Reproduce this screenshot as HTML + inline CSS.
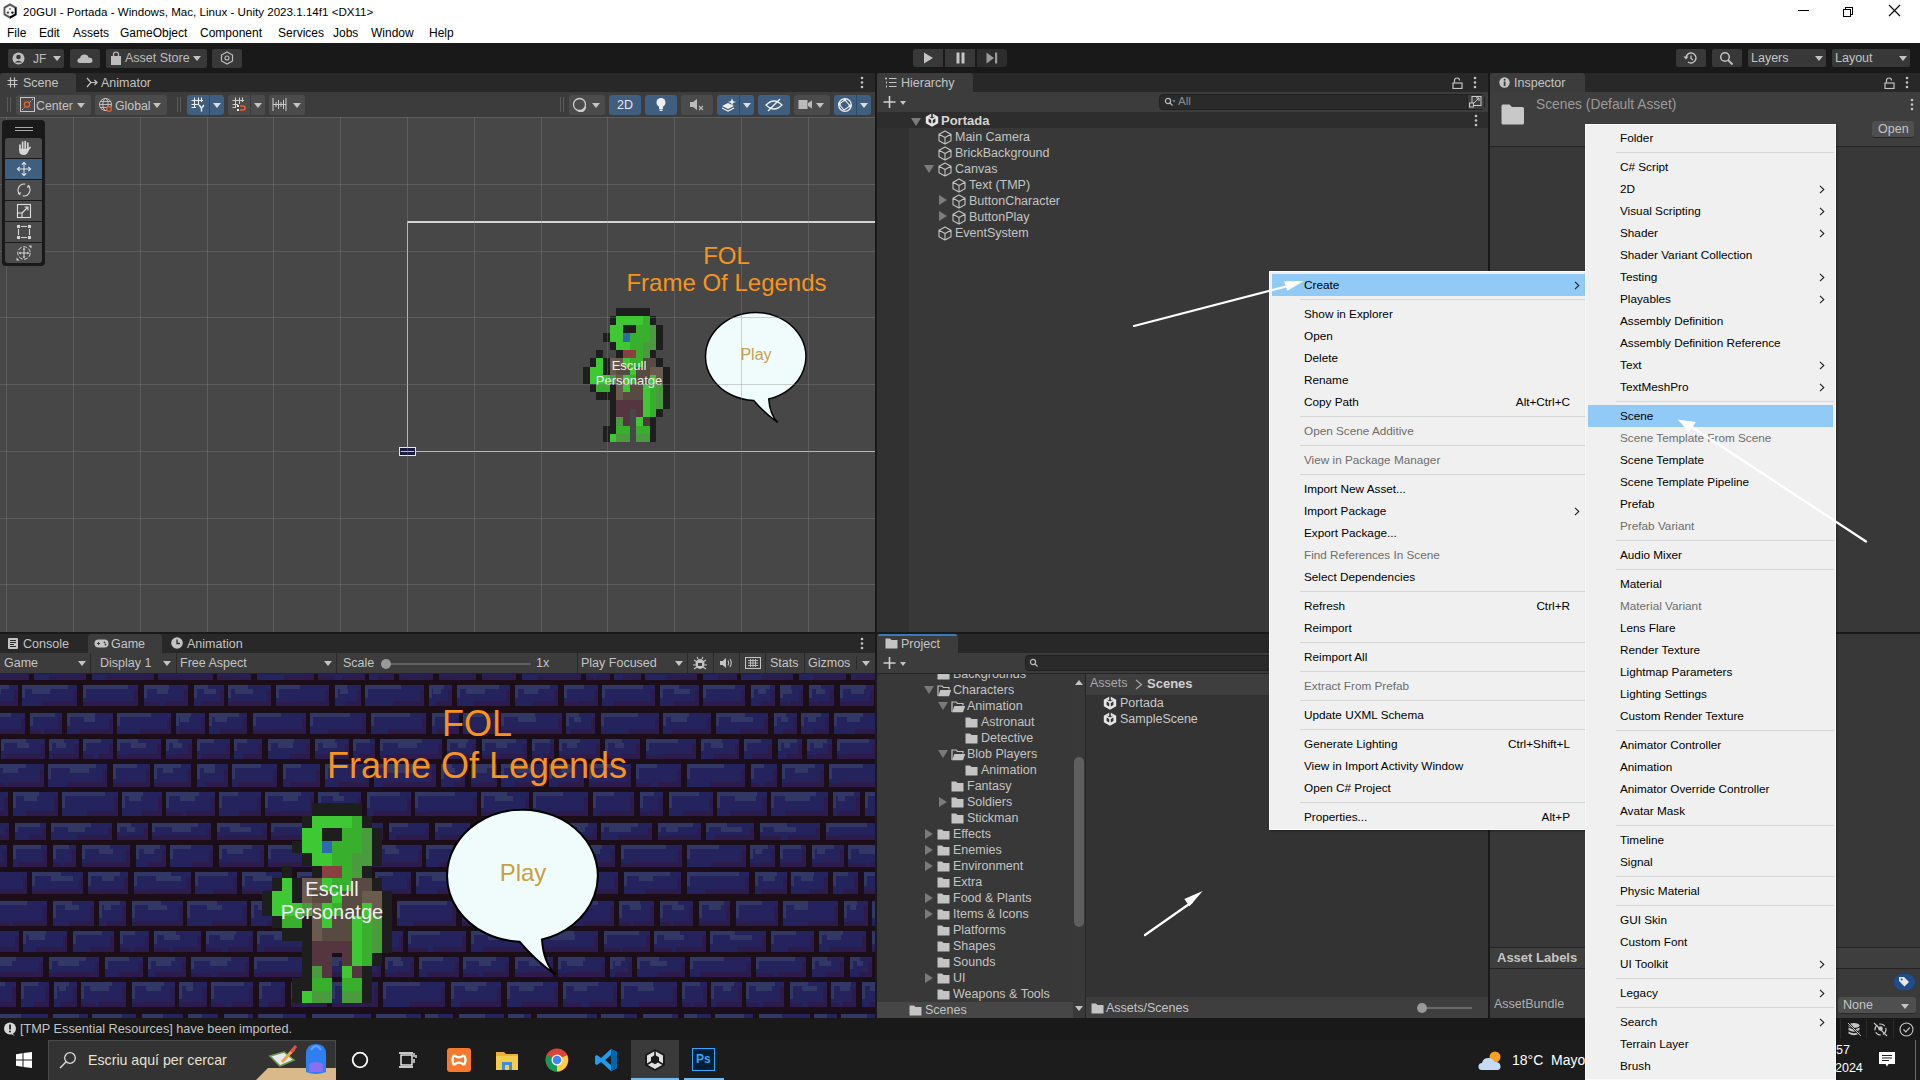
<!DOCTYPE html><html><head><meta charset="utf-8"><title>Unity</title></head><body><style>
*{box-sizing:border-box}
html,body{margin:0;padding:0}
body{width:1920px;height:1080px;overflow:hidden;position:relative;background:#191919;font-family:"Liberation Sans",sans-serif;font-size:12px;color:#c4c4c4}
.a{position:absolute}
.t{position:absolute;white-space:nowrap;line-height:1}
.btn{position:absolute;background:#383838;border-radius:2px}
.tb{position:absolute;background:#585858;border-radius:3px}
.tab{position:absolute;background:#3c3c3c;border-radius:3px 3px 0 0}
.dd{position:absolute;width:0;height:0;border-left:4px solid transparent;border-right:4px solid transparent;border-top:5px solid #c4c4c4}
.m{position:absolute;white-space:nowrap;line-height:1;color:#000;font-size:11.75px}
.mg{color:#6d6d6d}
.sep{position:absolute;height:1px;background:#d7d7d7}
.arr{position:absolute;width:5px;height:5px;border-right:1.3px solid #000;border-top:1.3px solid #000;transform:rotate(45deg)}
</style>
<!-- title bar -->
<div class="a" style="left:0;top:0;width:1920px;height:43px;background:#fff"></div>
<svg class="a" style="left:3px;top:3px" width="14" height="16" viewBox="0 0 14 16"><path d="M7 0.3L13.5 4V12L7 15.7L0.5 12V4Z" fill="#5a5a5a"/><path d="M13.5 4V12L7 15.7V13.3L11.6 10.8V5.2Z" fill="#050505"/><path d="M7 2.8L11.6 5.3V10.7L7 13.2L2.4 10.7V5.3Z" fill="#fafafa"/><circle cx="7" cy="5.8" r="1.1" fill="#8a8a8a"/><circle cx="4.9" cy="9.6" r="1.2" fill="#444"/><circle cx="9.4" cy="9.6" r="1.2" fill="#111"/></svg>
<div class="t" style="left:23px;top:6px;font-size:11.6px;color:#000">20GUI - Portada - Windows, Mac, Linux - Unity 2023.1.14f1 &lt;DX11&gt;</div>
<div class="a" style="left:1798px;top:10px;width:11px;height:1px;background:#000"></div>
<div class="a" style="left:1845px;top:7px;width:8px;height:8px;border:1px solid #000;background:#fff"></div>
<div class="a" style="left:1843px;top:9px;width:8px;height:8px;border:1px solid #000;background:#fff"></div>
<svg class="a" style="left:1888px;top:4px" width="13" height="13"><path d="M1 1L12 12M12 1L1 12" stroke="#000" stroke-width="1.1"/></svg>
<!-- menu bar -->
<div class="t" style="left:7px;top:27px;font-size:12px;color:#000">File</div>
<div class="t" style="left:39px;top:27px;font-size:12px;color:#000">Edit</div>
<div class="t" style="left:73px;top:27px;font-size:12px;color:#000">Assets</div>
<div class="t" style="left:120px;top:27px;font-size:12px;color:#000">GameObject</div>
<div class="t" style="left:200px;top:27px;font-size:12px;color:#000">Component</div>
<div class="t" style="left:278px;top:27px;font-size:12px;color:#000">Services</div>
<div class="t" style="left:333px;top:27px;font-size:12px;color:#000">Jobs</div>
<div class="t" style="left:371px;top:27px;font-size:12px;color:#000">Window</div>
<div class="t" style="left:429px;top:27px;font-size:12px;color:#000">Help</div>
<!-- main toolbar -->
<div class="a" style="left:0;top:43px;width:1920px;height:30px;background:#191919"></div>
<div class="btn" style="left:8px;top:49px;width:56px;height:19px"></div>
<svg class="a" style="left:12px;top:52px" width="13" height="13"><circle cx="6.5" cy="6.5" r="6" fill="#bdbdbd"/><circle cx="6.5" cy="5" r="2.3" fill="#383838"/><path d="M2.8 10.5 Q6.5 6.8 10.2 10.5" fill="#383838"/></svg>
<div class="t" style="left:33px;top:53px;color:#bdbdbd;font-size:12px">JF</div>
<div class="dd" style="left:53px;top:56px"></div>
<div class="btn" style="left:70px;top:49px;width:30px;height:19px"></div>
<svg class="a" style="left:77px;top:52px" width="16" height="12"><path d="M3 11 Q0 11 0.5 8 Q1 6 3 6.3 Q3.5 2.5 7.5 2.5 Q11 2.5 11.5 5.5 Q15.5 5.5 15.5 8.5 Q15.5 11 12.5 11Z" fill="#bdbdbd"/></svg>
<div class="btn" style="left:106px;top:49px;width:101px;height:19px"></div>
<svg class="a" style="left:110px;top:51px" width="12" height="15"><path d="M3.5 5V3.5Q3.5 1 6 1Q8.5 1 8.5 3.5V5" fill="none" stroke="#bdbdbd" stroke-width="1.2"/><rect x="1" y="5" width="10" height="9" fill="#bdbdbd"/></svg>
<div class="t" style="left:125px;top:52px;color:#bdbdbd;font-size:12.5px">Asset Store</div>
<div class="dd" style="left:193px;top:56px"></div>
<div class="btn" style="left:212px;top:49px;width:30px;height:19px"></div>
<svg class="a" style="left:220px;top:51px" width="14" height="14"><polygon points="7,1 12.5,4 12.5,10 7,13 1.5,10 1.5,4" fill="none" stroke="#bdbdbd" stroke-width="1.2"/><circle cx="7" cy="7" r="2" fill="none" stroke="#bdbdbd" stroke-width="1.1"/></svg>
<!-- play controls -->
<div class="btn" style="left:913px;top:49px;width:30px;height:18px;border-radius:3px 0 0 3px"></div>
<div class="btn" style="left:945px;top:49px;width:30px;height:18px;border-radius:0"></div>
<div class="btn" style="left:977px;top:49px;width:30px;height:18px;border-radius:0 3px 3px 0;background:#2c2c2c"></div>
<svg class="a" style="left:923px;top:52px" width="11" height="12"><path d="M1 0.5L10 6L1 11.5Z" fill="#c4c4c4"/></svg>
<svg class="a" style="left:956px;top:52px" width="10" height="12"><rect x="0.5" y="0.5" width="3" height="11" fill="#c4c4c4"/><rect x="5.5" y="0.5" width="3" height="11" fill="#c4c4c4"/></svg>
<svg class="a" style="left:986px;top:52px" width="12" height="12"><path d="M0.5 0.5L8 6L0.5 11.5Z" fill="#9a9a9a"/><rect x="9" y="0.5" width="2.2" height="11" fill="#9a9a9a"/></svg>
<!-- right toolbar -->
<div class="btn" style="left:1676px;top:49px;width:30px;height:18px"></div>
<svg class="a" style="left:1683px;top:51px" width="15" height="14"><path d="M3 7 A5 5 0 1 1 5 11" fill="none" stroke="#c4c4c4" stroke-width="1.4"/><path d="M0.5 5.5 L3 8.5 L5.5 5.5Z" fill="#c4c4c4"/><path d="M8 4.5V7.5L10 9" fill="none" stroke="#c4c4c4" stroke-width="1.3"/></svg>
<div class="btn" style="left:1712px;top:49px;width:30px;height:18px"></div>
<svg class="a" style="left:1719px;top:51px" width="15" height="15"><circle cx="6" cy="6" r="4.3" fill="none" stroke="#c4c4c4" stroke-width="1.5"/><path d="M9.2 9.2L13.5 13.5" stroke="#c4c4c4" stroke-width="1.8"/></svg>
<div class="btn" style="left:1748px;top:49px;width:78px;height:18px"></div>
<div class="t" style="left:1751px;top:52px;color:#c4c4c4;font-size:12.5px">Layers</div>
<div class="dd" style="left:1815px;top:56px"></div>
<div class="btn" style="left:1832px;top:49px;width:78px;height:18px"></div>
<div class="t" style="left:1835px;top:52px;color:#c4c4c4;font-size:12.5px">Layout</div>
<div class="dd" style="left:1899px;top:56px"></div>
<!-- SCENE PANEL -->
<div class="a" style="left:0;top:73px;width:875px;height:19px;background:#282828"></div>
<div class="tab" style="left:0;top:73px;width:76px;height:19px"></div>
<svg class="a" style="left:7px;top:77px" width="11" height="11"><path d="M3.5 0.5V10.5M7.5 0.5V10.5M0.5 3.5H10.5M0.5 7.5H10.5" stroke="#c4c4c4" stroke-width="1.2"/></svg>
<div class="t" style="left:23px;top:77px;color:#c4c4c4;font-size:12.5px">Scene</div>
<svg class="a" style="left:86px;top:77px" width="12" height="11"><path d="M1 1L5 5.5L1 10M5 5.5H11M8.5 3L11 5.5L8.5 8" fill="none" stroke="#c4c4c4" stroke-width="1.2"/></svg>
<div class="t" style="left:101px;top:77px;color:#c4c4c4;font-size:12.5px">Animator</div>
<svg class="a" style="left:860px;top:76px" width="4" height="13"><circle cx="2" cy="2" r="1.3" fill="#c4c4c4"/><circle cx="2" cy="6.5" r="1.3" fill="#c4c4c4"/><circle cx="2" cy="11" r="1.3" fill="#c4c4c4"/></svg>
<!-- scene toolbar -->
<div class="a" style="left:0;top:92px;width:875px;height:25px;background:#3c3c3c"></div>
<div class="a" style="left:7px;top:97px;width:1px;height:15px;background:#5a5a5a"></div><div class="a" style="left:10px;top:97px;width:1px;height:15px;background:#5a5a5a"></div>
<div class="tb" style="left:16px;top:95px;width:75px;height:20px;background:#4b4b4b"></div>
<svg class="a" style="left:20px;top:97px" width="15" height="15"><rect x="0.5" y="0.5" width="14" height="14" fill="none" stroke="#c4c4c4" stroke-width="1"/><path d="M2 13L13 2" stroke="#c4c4c4" stroke-dasharray="2 1.5"/><circle cx="7" cy="7.5" r="2.6" fill="#4b4b4b" stroke="#f06030" stroke-width="1.3"/></svg>
<div class="t" style="left:36px;top:100px;color:#c4c4c4;font-size:12.3px">Center</div>
<div class="dd" style="left:77px;top:103px"></div>
<div class="tb" style="left:95px;top:95px;width:72px;height:20px;background:#4b4b4b"></div>
<svg class="a" style="left:98px;top:97px" width="16" height="16"><circle cx="7.5" cy="7.5" r="6" fill="none" stroke="#c4c4c4" stroke-width="1"/><ellipse cx="7.5" cy="7.5" rx="2.6" ry="6" fill="none" stroke="#c4c4c4" stroke-width="1"/><path d="M1.5 7.5H13.5M2.5 4.5H12.5M2.5 10.5H12.5" stroke="#c4c4c4" stroke-width="0.9"/><circle cx="11" cy="12" r="2.3" fill="#4b4b4b" stroke="#f06030" stroke-width="1.2"/></svg>
<div class="t" style="left:115px;top:100px;color:#c4c4c4;font-size:12.3px">Global</div>
<div class="dd" style="left:153px;top:103px"></div>
<div class="a" style="left:177px;top:97px;width:1px;height:15px;background:#5a5a5a"></div><div class="a" style="left:180px;top:97px;width:1px;height:15px;background:#5a5a5a"></div>
<div class="tb" style="left:187px;top:95px;width:37px;height:20px;background:#3f5e80"></div>
<div class="a" style="left:209px;top:95px;width:1px;height:20px;background:#2f4a68"></div>
<svg class="a" style="left:191px;top:97px" width="15" height="15"><path d="M3.5 0.5V11M7.5 0.5V8M10.5 0.5V5M0.5 3.5H12M0.5 7.5H8M0.5 10.5H5" stroke="#eee" stroke-width="1.1"/><path d="M8 8L10.5 11L13 8M10.5 11V14.5" fill="none" stroke="#eee" stroke-width="1.5"/></svg>
<div class="dd" style="left:213px;top:103px;border-top-color:#ddd"></div>
<div class="tb" style="left:228px;top:95px;width:37px;height:20px;background:#4b4b4b"></div>
<div class="a" style="left:250px;top:95px;width:1px;height:20px;background:#3a3a3a"></div>
<svg class="a" style="left:232px;top:97px" width="15" height="15"><path d="M3.5 0.5V11M7.5 0.5V7M10.5 0.5V5M0.5 3.5H12M0.5 7.5H6M0.5 10.5H4" stroke="#ccc" stroke-width="1.1"/><rect x="5" y="8" width="2" height="2" fill="#eee"/><rect x="5" y="12" width="2" height="2" fill="#eee"/><path d="M8 9H11Q13 9 13 11Q13 13 11 13H8" fill="none" stroke="#f06030" stroke-width="1.6"/></svg>
<div class="dd" style="left:254px;top:103px"></div>
<div class="tb" style="left:269px;top:95px;width:36px;height:20px;background:#4b4b4b"></div>
<svg class="a" style="left:272px;top:97px" width="15" height="15"><path d="M1 1V14M14 1V14M1 7.5H14M4 5V10M6.5 3V12M9 5V10M11.5 3V12" stroke="#ccc" stroke-width="1"/></svg>
<div class="dd" style="left:293px;top:103px"></div>
<div class="a" style="left:560px;top:97px;width:1px;height:15px;background:#5a5a5a"></div><div class="a" style="left:563px;top:97px;width:1px;height:15px;background:#5a5a5a"></div>
<div class="tb" style="left:569px;top:95px;width:36px;height:20px;background:#4b4b4b"></div>
<svg class="a" style="left:572px;top:97px" width="15" height="15"><circle cx="7.5" cy="7.5" r="6" fill="none" stroke="#ccc" stroke-width="1.3"/><path d="M13.5 7.5A6 6 0 0 1 4 12.5A5 5 0 0 0 13.5 7.5Z" fill="#ccc"/></svg>
<div class="dd" style="left:592px;top:103px"></div>
<div class="tb" style="left:609px;top:95px;width:32px;height:20px;background:#3f5e80"></div>
<div class="t" style="left:617px;top:99px;color:#e8e8e8;font-size:12.5px">2D</div>
<div class="tb" style="left:645px;top:95px;width:32px;height:20px;background:#3f5e80"></div>
<svg class="a" style="left:655px;top:97px" width="12" height="16"><circle cx="6" cy="5.5" r="4.5" fill="#eee"/><rect x="4" y="9" width="4" height="3" fill="#eee"/><rect x="4.5" y="12.5" width="3" height="1.5" fill="#eee"/></svg>
<div class="tb" style="left:681px;top:95px;width:32px;height:20px;background:#4b4b4b"></div>
<svg class="a" style="left:689px;top:98px" width="16" height="14"><path d="M1 4H4L8 1V12L4 9H1Z" fill="#bbb"/><path d="M10 8L14 12M14 8L10 12" stroke="#bbb" stroke-width="1.1"/></svg>
<div class="tb" style="left:717px;top:95px;width:37px;height:20px;background:#3f5e80"></div>
<div class="a" style="left:739px;top:95px;width:1px;height:20px;background:#2f4a68"></div>
<svg class="a" style="left:721px;top:97px" width="16" height="15"><path d="M1 9L7 6L13 9L7 12Z" fill="#eee"/><path d="M1 11L7 14L13 11" fill="none" stroke="#eee" stroke-width="1.2"/><path d="M11 1L12 4L15 5L12 6L11 9L10 6L7 5L10 4Z" fill="#eee"/></svg>
<div class="dd" style="left:743px;top:103px;border-top-color:#ddd"></div>
<div class="tb" style="left:758px;top:95px;width:32px;height:20px;background:#3f5e80"></div>
<svg class="a" style="left:765px;top:97px" width="18" height="16"><path d="M1 8Q9 0 17 8Q9 16 1 8Z" fill="none" stroke="#eee" stroke-width="1.3"/><path d="M3 14L15 2" stroke="#eee" stroke-width="1.4"/></svg>
<div class="tb" style="left:794px;top:95px;width:36px;height:20px;background:#4b4b4b"></div>
<svg class="a" style="left:798px;top:99px" width="15" height="11"><rect x="0.5" y="1" width="9" height="9" fill="#bbb"/><path d="M10 4L14 1.5V9.5L10 7Z" fill="#bbb"/></svg>
<div class="dd" style="left:816px;top:103px"></div>
<div class="tb" style="left:834px;top:95px;width:37px;height:20px;background:#3f5e80"></div>
<div class="a" style="left:856px;top:95px;width:1px;height:20px;background:#2f4a68"></div>
<svg class="a" style="left:837px;top:97px" width="16" height="16"><circle cx="8" cy="8" r="6.3" fill="none" stroke="#eee" stroke-width="1.3"/><path d="M2 7L8 3L13 9L7 13Z" fill="none" stroke="#eee" stroke-width="1.1"/><circle cx="8" cy="3" r="1.4" fill="#eee"/><circle cx="2.5" cy="7" r="1.4" fill="#eee"/><circle cx="13" cy="9" r="1.4" fill="#eee"/></svg>
<div class="dd" style="left:860px;top:103px;border-top-color:#ddd"></div>
<!-- scene view -->
<svg class="a" style="left:0;top:117px" width="875" height="515" shape-rendering="crispEdges">
<rect width="875" height="515" fill="#474747"/>

<path d="M407.5 334.5V105H875M407.5 334.5H875" fill="none" stroke="#d4d4d4" stroke-width="1.6"/>
</svg>
<div class="a" style="left:399px;top:447px;width:17px;height:9px;border:1px solid #e8e8e8;background:#1a1a40"></div>
<div class="a" style="left:401px;top:451px;width:13px;height:1px;background:#e8e8e8"></div>
<!-- scene contents -->
<div class="t" style="left:626px;top:244px;width:201px;text-align:center;color:#f7941d;font-size:24px">FOL</div>
<div class="t" style="left:596px;top:271px;width:261px;text-align:center;color:#f7941d;font-size:24px">Frame Of Legends</div>
<svg class="a" style="left:583px;top:307.5px" width="86.58" height="134.40" viewBox="0 0 13 16" preserveAspectRatio="none" shape-rendering="crispEdges"><rect x="5" y="0" width="5" height="1" fill="#1e1e1e"/><rect x="4" y="1" width="1" height="1" fill="#1e1e1e"/><rect x="5" y="1" width="4" height="1" fill="#3ec834"/><rect x="9" y="1" width="1" height="1" fill="#38b02e"/><rect x="10" y="1" width="1" height="1" fill="#1e1e1e"/><rect x="4" y="2" width="2" height="1" fill="#3ec834"/><rect x="6" y="2" width="2" height="1" fill="#1e1e1e"/><rect x="8" y="2" width="2" height="1" fill="#38b02e"/><rect x="10" y="2" width="1" height="1" fill="#4a9a3e"/><rect x="11" y="2" width="1" height="1" fill="#1e1e1e"/><rect x="3" y="3" width="1" height="1" fill="#1e1e1e"/><rect x="4" y="3" width="2" height="1" fill="#3ec834"/><rect x="6" y="3" width="1" height="1" fill="#2a6ab0"/><rect x="7" y="3" width="3" height="1" fill="#38b02e"/><rect x="10" y="3" width="1" height="1" fill="#4a9a3e"/><rect x="11" y="3" width="1" height="1" fill="#1e1e1e"/><rect x="4" y="4" width="1" height="1" fill="#1e1e1e"/><rect x="5" y="4" width="2" height="1" fill="#3ec834"/><rect x="7" y="4" width="2" height="1" fill="#38b02e"/><rect x="9" y="4" width="2" height="1" fill="#4a9a3e"/><rect x="11" y="4" width="1" height="1" fill="#1e1e1e"/><rect x="2" y="5" width="1" height="1" fill="#1e1e1e"/><rect x="5" y="5" width="1" height="1" fill="#1e1e1e"/><rect x="6" y="5" width="2" height="1" fill="#8a4040"/><rect x="8" y="5" width="1" height="1" fill="#38b02e"/><rect x="9" y="5" width="1" height="1" fill="#4a9a3e"/><rect x="10" y="5" width="1" height="1" fill="#1e1e1e"/><rect x="1" y="6" width="1" height="1" fill="#1e1e1e"/><rect x="2" y="6" width="1" height="1" fill="#3ec834"/><rect x="3" y="6" width="1" height="1" fill="#1e1e1e"/><rect x="4" y="6" width="2" height="1" fill="#6b5a4e"/><rect x="6" y="6" width="1" height="1" fill="#3ec834"/><rect x="7" y="6" width="2" height="1" fill="#38b02e"/><rect x="9" y="6" width="2" height="1" fill="#574a40"/><rect x="11" y="6" width="1" height="1" fill="#1e1e1e"/><rect x="0" y="7" width="1" height="1" fill="#1e1e1e"/><rect x="1" y="7" width="2" height="1" fill="#3ec834"/><rect x="3" y="7" width="1" height="1" fill="#1e1e1e"/><rect x="4" y="7" width="1" height="1" fill="#6b5a4e"/><rect x="5" y="7" width="2" height="1" fill="#574a40"/><rect x="7" y="7" width="1" height="1" fill="#3ec834"/><rect x="8" y="7" width="2" height="1" fill="#574a40"/><rect x="10" y="7" width="2" height="1" fill="#6b5a4e"/><rect x="12" y="7" width="1" height="1" fill="#1e1e1e"/><rect x="0" y="8" width="1" height="1" fill="#1e1e1e"/><rect x="1" y="8" width="3" height="1" fill="#3ec834"/><rect x="4" y="8" width="1" height="1" fill="#4a9a3e"/><rect x="5" y="8" width="1" height="1" fill="#6b5a4e"/><rect x="6" y="8" width="1" height="1" fill="#3ec834"/><rect x="7" y="8" width="1" height="1" fill="#38b02e"/><rect x="8" y="8" width="2" height="1" fill="#574a40"/><rect x="10" y="8" width="1" height="1" fill="#3ec834"/><rect x="11" y="8" width="1" height="1" fill="#6b5a4e"/><rect x="12" y="8" width="1" height="1" fill="#1e1e1e"/><rect x="1" y="9" width="1" height="1" fill="#1e1e1e"/><rect x="2" y="9" width="2" height="1" fill="#38b02e"/><rect x="4" y="9" width="1" height="1" fill="#1e1e1e"/><rect x="5" y="9" width="1" height="1" fill="#6b5a4e"/><rect x="6" y="9" width="1" height="1" fill="#3ec834"/><rect x="7" y="9" width="2" height="1" fill="#574a40"/><rect x="9" y="9" width="1" height="1" fill="#3ec834"/><rect x="10" y="9" width="1" height="1" fill="#38b02e"/><rect x="11" y="9" width="1" height="1" fill="#4a9a3e"/><rect x="12" y="9" width="1" height="1" fill="#1e1e1e"/><rect x="2" y="10" width="3" height="1" fill="#1e1e1e"/><rect x="5" y="10" width="1" height="1" fill="#6b5a4e"/><rect x="6" y="10" width="3" height="1" fill="#574a40"/><rect x="9" y="10" width="1" height="1" fill="#3ec834"/><rect x="10" y="10" width="1" height="1" fill="#38b02e"/><rect x="11" y="10" width="1" height="1" fill="#4a9a3e"/><rect x="12" y="10" width="1" height="1" fill="#1e1e1e"/><rect x="4" y="11" width="1" height="1" fill="#1e1e1e"/><rect x="5" y="11" width="4" height="1" fill="#553540"/><rect x="9" y="11" width="1" height="1" fill="#3ec834"/><rect x="10" y="11" width="1" height="1" fill="#38b02e"/><rect x="11" y="11" width="1" height="1" fill="#4a9a3e"/><rect x="12" y="11" width="1" height="1" fill="#1e1e1e"/><rect x="4" y="12" width="1" height="1" fill="#1e1e1e"/><rect x="5" y="12" width="2" height="1" fill="#553540"/><rect x="8" y="12" width="1" height="1" fill="#553540"/><rect x="9" y="12" width="1" height="1" fill="#3ec834"/><rect x="10" y="12" width="1" height="1" fill="#38b02e"/><rect x="11" y="12" width="1" height="1" fill="#1e1e1e"/><rect x="4" y="13" width="1" height="1" fill="#1e1e1e"/><rect x="5" y="13" width="1" height="1" fill="#4a9a3e"/><rect x="6" y="13" width="1" height="1" fill="#553540"/><rect x="8" y="13" width="1" height="1" fill="#3ec834"/><rect x="9" y="13" width="1" height="1" fill="#553540"/><rect x="10" y="13" width="1" height="1" fill="#1e1e1e"/><rect x="3" y="14" width="2" height="1" fill="#1e1e1e"/><rect x="5" y="14" width="2" height="1" fill="#38b02e"/><rect x="8" y="14" width="2" height="1" fill="#38b02e"/><rect x="10" y="14" width="1" height="1" fill="#1e1e1e"/><rect x="3" y="15" width="1" height="1" fill="#1e1e1e"/><rect x="4" y="15" width="1" height="1" fill="#3ec834"/><rect x="5" y="15" width="2" height="1" fill="#4a9a3e"/><rect x="8" y="15" width="2" height="1" fill="#4a9a3e"/><rect x="10" y="15" width="1" height="1" fill="#1e1e1e"/></svg>
<div class="t" style="left:579px;top:358px;width:100px;text-align:center;color:#f0f0f0;font-size:13px;line-height:15px;white-space:normal">Escull<br>Personatge</div>
<svg class="a" style="left:0;top:117px" width="875" height="515"><path d="M753.75 283.47 Q764.75 296.50 777.75 305.50 Q769.75 297.50 768.75 282.00 A50.25 44.00 0 1 0 753.75 283.47Z" fill="#f0fcfc" stroke="#000" stroke-width="1.5"/></svg>
<div class="t" style="left:706px;top:347px;width:100px;text-align:center;color:#c8a050;font-size:16px">Play</div>
<svg class="a" style="left:0;top:117px;pointer-events:none" width="875" height="515" shape-rendering="crispEdges"><g fill="rgb(129,129,129)" fill-opacity="0.36"><rect x="6" y="0" width="1" height="515"/><rect x="73" y="0" width="1" height="515"/><rect x="140" y="0" width="1" height="515"/><rect x="207" y="0" width="1" height="515"/><rect x="273" y="0" width="1" height="515"/><rect x="340" y="0" width="1" height="515"/><rect x="407" y="0" width="1" height="515"/><rect x="474" y="0" width="1" height="515"/><rect x="541" y="0" width="1" height="515"/><rect x="607" y="0" width="1" height="515"/><rect x="674" y="0" width="1" height="515"/><rect x="741" y="0" width="1" height="515"/><rect x="808" y="0" width="1" height="515"/><rect x="0" y="0" width="875" height="1"/><rect x="0" y="67" width="875" height="1"/><rect x="0" y="134" width="875" height="1"/><rect x="0" y="200" width="875" height="1"/><rect x="0" y="267" width="875" height="1"/><rect x="0" y="334" width="875" height="1"/><rect x="0" y="401" width="875" height="1"/><rect x="0" y="467" width="875" height="1"/></g></svg>
<!-- overlay tool palette -->
<div class="a" style="left:2px;top:120px;width:43px;height:146px;background:#191919;border-radius:4px"></div>
<div class="a" style="left:15px;top:127px;width:18px;height:1px;background:#aaa"></div>
<div class="a" style="left:15px;top:130px;width:18px;height:1px;background:#aaa"></div>
<div class="tb" style="left:5px;top:138px;width:37px;height:20px;background:#4b4b4b;border-radius:3px 3px 0 0"></div>
<div class="tb" style="left:5px;top:159px;width:37px;height:20px;background:#3f5e80;border-radius:0"></div>
<div class="tb" style="left:5px;top:180px;width:37px;height:20px;background:#4b4b4b;border-radius:0"></div>
<div class="tb" style="left:5px;top:201px;width:37px;height:20px;background:#4b4b4b;border-radius:0"></div>
<div class="tb" style="left:5px;top:222px;width:37px;height:20px;background:#4b4b4b;border-radius:0"></div>
<div class="tb" style="left:5px;top:243px;width:37px;height:20px;background:#4b4b4b;border-radius:0 0 3px 3px"></div>
<svg class="a" style="left:16px;top:140px" width="16" height="16"><g stroke="#d6d6d6" stroke-width="1.7" stroke-linecap="round"><path d="M4 9.5V5M6.6 8V2.2M9.2 8V1.6M11.8 8.5V3.2"/><path d="M12 10L14 7.5" /></g><path d="M3.2 8.5H12.6V11Q11 15 8 15Q3.2 15 3.2 11Z" fill="#d6d6d6"/></svg>
<svg class="a" style="left:16px;top:161px" width="16" height="16"><path d="M8 1.5V14.5M1.5 8H14.5" stroke="#e6e6e6" stroke-width="1"/><path d="M5.8 3.7L8 1.5L10.2 3.7M5.8 12.3L8 14.5L10.2 12.3M3.7 5.8L1.5 8L3.7 10.2M12.3 5.8L14.5 8L12.3 10.2" fill="none" stroke="#e6e6e6" stroke-width="1.2"/></svg>
<svg class="a" style="left:16px;top:182px" width="16" height="16"><path d="M9.2 2.1A6 6 0 0 0 3.9 12.3M6.8 13.9A6 6 0 0 0 12.1 3.7" fill="none" stroke="#d6d6d6" stroke-width="1.1"/><path d="M1.9 11.6L3.9 12.3L4.3 10.1M14.1 4.4L12.1 3.7L11.7 5.9" fill="none" stroke="#d6d6d6" stroke-width="1.1"/></svg>
<svg class="a" style="left:16px;top:203px" width="16" height="16"><rect x="1.5" y="1.5" width="13" height="13" fill="none" stroke="#ddd" stroke-width="1.1"/><rect x="1.5" y="10" width="4.5" height="4.5" fill="#4b4b4b" stroke="#ddd" stroke-width="1.1"/><path d="M6 10L12 4M8.5 4H12V7.5" fill="none" stroke="#ddd" stroke-width="1.1"/></svg>
<svg class="a" style="left:16px;top:224px" width="16" height="16"><path d="M2.5 5V11M13.5 5V11M5 2.5H11M5 13.5H11" stroke="#d6d6d6" stroke-width="1.1"/><rect x="1" y="1" width="3" height="3" fill="#d6d6d6"/><rect x="12" y="1" width="3" height="3" fill="#d6d6d6"/><rect x="1" y="12" width="3" height="3" fill="#d6d6d6"/><rect x="12" y="12" width="3" height="3" fill="#d6d6d6"/></svg>
<svg class="a" style="left:16px;top:245px" width="16" height="16"><circle cx="8" cy="8" r="6.2" fill="none" stroke="#d6d6d6" stroke-width="1" stroke-dasharray="4 1.5"/><path d="M8 3.5V12.5M3.5 8H12.5" stroke="#d6d6d6" stroke-width="1"/><path d="M8 2.8L6.6 4.6H9.4ZM8 13.2L6.6 11.4H9.4ZM2.8 8L4.6 6.6V9.4ZM13.2 8L11.4 6.6V9.4Z" fill="#d6d6d6"/><path d="M0.5 15.5L0.5 12.5L3.5 15.5Z M15.5 0.5L12.5 0.5L15.5 3.5Z" fill="#d6d6d6"/></svg>
<!-- HIERARCHY -->
<div class="a" style="left:875px;top:73px;width:2px;height:561px;background:#191919"></div>
<div class="a" style="left:877px;top:73px;width:611px;height:19px;background:#282828"></div>
<div class="tab" style="left:877px;top:73px;width:96px;height:19px"></div>
<svg class="a" style="left:885px;top:77px" width="12" height="11"><path d="M4 1.5H11.5M4 5.5H11.5M4 9.5H11.5" stroke="#c4c4c4" stroke-width="1.2"/><path d="M1 0.5V2.5M0 1.5H2M1.5 4.5V6.5M1.5 8.5V10.5" stroke="#c4c4c4" stroke-width="1"/></svg>
<div class="t" style="left:901px;top:77px;color:#c4c4c4;font-size:12.5px">Hierarchy</div>
<svg class="a" style="left:1452px;top:77px" width="11" height="12"><path d="M2.5 5.5V3.5Q2.5 1 5 1Q7.5 1 7.5 3.5" fill="none" stroke="#c4c4c4" stroke-width="1.2"/><rect x="1" y="6" width="9" height="5.5" fill="none" stroke="#c4c4c4" stroke-width="1.2"/></svg>
<svg class="a" style="left:1473px;top:76px" width="4" height="13"><circle cx="2" cy="2" r="1.3" fill="#c4c4c4"/><circle cx="2" cy="6.5" r="1.3" fill="#c4c4c4"/><circle cx="2" cy="11" r="1.3" fill="#c4c4c4"/></svg>
<div class="a" style="left:877px;top:92px;width:611px;height:20px;background:#3c3c3c"></div>
<svg class="a" style="left:883px;top:95px" width="14" height="14"><path d="M6.5 1V13M0.5 7H12.5" stroke="#d0d0d0" stroke-width="1.6"/></svg>
<div class="dd" style="left:900px;top:101px;border-left-width:3.5px;border-right-width:3.5px;border-top-width:4px"></div>
<div class="a" style="left:1159px;top:94px;width:326px;height:16px;background:#2a2a2a;border-radius:4px;border:1px solid #212121"></div>
<svg class="a" style="left:1164px;top:97px" width="12" height="10"><circle cx="4" cy="4" r="2.6" fill="none" stroke="#bbb" stroke-width="1.2"/><path d="M6 6L8.5 8.5" stroke="#bbb" stroke-width="1.3"/><path d="M8.5 3.5H11.5L10 5Z" fill="#bbb"/></svg>
<div class="t" style="left:1178px;top:96px;color:#8a8a8a;font-size:11.5px">All</div>
<div class="a" style="left:1467px;top:95px;width:17px;height:14px;background:#3c3c3c;border-left:1px solid #222"></div>
<svg class="a" style="left:1469px;top:96px" width="13" height="12"><rect x="3" y="0.5" width="9" height="9" fill="none" stroke="#ccc" stroke-width="1"/><rect x="0.5" y="7" width="4" height="4" fill="#3c3c3c" stroke="#ccc" stroke-width="1"/><path d="M5 7L10 2M7 2H10V5" fill="none" stroke="#ccc" stroke-width="1"/></svg>
<div class="a" style="left:877px;top:112px;width:611px;height:520px;background:#383838"></div>
<div class="a" style="left:877px;top:128px;width:32px;height:504px;background:#313131"></div>
<div class="a" style="left:877px;top:112px;width:611px;height:16px;background:#2d2d2d"></div>
<div class="a" style="left:911px;top:118px;width:0;height:0;border-left:5px solid transparent;border-right:5px solid transparent;border-top:8px solid #7c7c7c"></div>
<svg class="a" style="left:925px;top:113px" width="14" height="14" viewBox="0 0 14 14"><path d="M7 0.3L13.2 3.8V10.2L7 13.7L0.8 10.2V3.8Z" fill="#e6e6e6"/><path d="M6.2 0V4.6L7 5.1L7.8 4.6V0Z M3.6 5.4L6.2 6.9V10.6L3.6 9.1Z M10.4 5.4L7.8 6.9V10.6L10.4 9.1Z M4.2 3.9L7 5.5L9.8 3.9L9.3 3.5L7 4.8L4.7 3.5Z" fill="#2d2d2d"/></svg>
<div class="t" style="left:941px;top:114px;color:#d4d4d4;font-size:13px;font-weight:bold">Portada</div>
<svg class="a" style="left:1474px;top:114px" width="4" height="13"><circle cx="2" cy="2" r="1.3" fill="#c4c4c4"/><circle cx="2" cy="6.5" r="1.3" fill="#c4c4c4"/><circle cx="2" cy="11" r="1.3" fill="#c4c4c4"/></svg>
<svg class="a" style="left:938px;top:130px" width="14" height="15" viewBox="0 0 14 15"><path d="M7 1L13 4.2V10.8L7 14L1 10.8V4.2Z M1 4.2L7 7.4L13 4.2 M7 7.4V14" fill="none" stroke="#c4c4c4" stroke-width="1.1" stroke-linejoin="round"/></svg>
<div class="t" style="left:955px;top:131px;color:#c4c4c4;font-size:12.5px">Main Camera</div>
<svg class="a" style="left:938px;top:146px" width="14" height="15" viewBox="0 0 14 15"><path d="M7 1L13 4.2V10.8L7 14L1 10.8V4.2Z M1 4.2L7 7.4L13 4.2 M7 7.4V14" fill="none" stroke="#c4c4c4" stroke-width="1.1" stroke-linejoin="round"/></svg>
<div class="t" style="left:955px;top:147px;color:#c4c4c4;font-size:12.5px">BrickBackground</div>
<div class="a" style="left:924px;top:165px;width:0;height:0;border-left:5px solid transparent;border-right:5px solid transparent;border-top:8px solid #7c7c7c"></div>
<svg class="a" style="left:938px;top:162px" width="14" height="15" viewBox="0 0 14 15"><path d="M7 1L13 4.2V10.8L7 14L1 10.8V4.2Z M1 4.2L7 7.4L13 4.2 M7 7.4V14" fill="none" stroke="#c4c4c4" stroke-width="1.1" stroke-linejoin="round"/></svg>
<div class="t" style="left:955px;top:163px;color:#c4c4c4;font-size:12.5px">Canvas</div>
<svg class="a" style="left:952px;top:178px" width="14" height="15" viewBox="0 0 14 15"><path d="M7 1L13 4.2V10.8L7 14L1 10.8V4.2Z M1 4.2L7 7.4L13 4.2 M7 7.4V14" fill="none" stroke="#c4c4c4" stroke-width="1.1" stroke-linejoin="round"/></svg>
<div class="t" style="left:969px;top:179px;color:#c4c4c4;font-size:12.5px">Text (TMP)</div>
<div class="a" style="left:939px;top:195px;width:0;height:0;border-top:5px solid transparent;border-bottom:5px solid transparent;border-left:8px solid #7c7c7c"></div>
<svg class="a" style="left:952px;top:194px" width="14" height="15" viewBox="0 0 14 15"><path d="M7 1L13 4.2V10.8L7 14L1 10.8V4.2Z M1 4.2L7 7.4L13 4.2 M7 7.4V14" fill="none" stroke="#c4c4c4" stroke-width="1.1" stroke-linejoin="round"/></svg>
<div class="t" style="left:969px;top:195px;color:#c4c4c4;font-size:12.5px">ButtonCharacter</div>
<div class="a" style="left:939px;top:211px;width:0;height:0;border-top:5px solid transparent;border-bottom:5px solid transparent;border-left:8px solid #7c7c7c"></div>
<svg class="a" style="left:952px;top:210px" width="14" height="15" viewBox="0 0 14 15"><path d="M7 1L13 4.2V10.8L7 14L1 10.8V4.2Z M1 4.2L7 7.4L13 4.2 M7 7.4V14" fill="none" stroke="#c4c4c4" stroke-width="1.1" stroke-linejoin="round"/></svg>
<div class="t" style="left:969px;top:211px;color:#c4c4c4;font-size:12.5px">ButtonPlay</div>
<svg class="a" style="left:938px;top:226px" width="14" height="15" viewBox="0 0 14 15"><path d="M7 1L13 4.2V10.8L7 14L1 10.8V4.2Z M1 4.2L7 7.4L13 4.2 M7 7.4V14" fill="none" stroke="#c4c4c4" stroke-width="1.1" stroke-linejoin="round"/></svg>
<div class="t" style="left:955px;top:227px;color:#c4c4c4;font-size:12.5px">EventSystem</div><!-- INSPECTOR -->
<div class="a" style="left:1488px;top:73px;width:2px;height:945px;background:#191919"></div>
<div class="a" style="left:1490px;top:73px;width:430px;height:19px;background:#282828"></div>
<div class="tab" style="left:1490px;top:73px;width:95px;height:19px"></div>
<svg class="a" style="left:1499px;top:77px" width="11" height="11"><circle cx="5.5" cy="5.5" r="5.2" fill="#c4c4c4"/><rect x="4.7" y="4.5" width="1.8" height="4.5" fill="#3c3c3c"/><circle cx="5.6" cy="2.8" r="1" fill="#3c3c3c"/></svg>
<div class="t" style="left:1514px;top:77px;color:#c4c4c4;font-size:12.5px">Inspector</div>
<svg class="a" style="left:1884px;top:77px" width="11" height="12"><path d="M2.5 5.5V3.5Q2.5 1 5 1Q7.5 1 7.5 3.5" fill="none" stroke="#c4c4c4" stroke-width="1.2"/><rect x="1" y="6" width="9" height="5.5" fill="none" stroke="#c4c4c4" stroke-width="1.2"/></svg>
<svg class="a" style="left:1905px;top:76px" width="4" height="13"><circle cx="2" cy="2" r="1.3" fill="#c4c4c4"/><circle cx="2" cy="6.5" r="1.3" fill="#c4c4c4"/><circle cx="2" cy="11" r="1.3" fill="#c4c4c4"/></svg>
<div class="a" style="left:1490px;top:92px;width:430px;height:54px;background:#3e3e3e"></div>
<div class="a" style="left:1490px;top:146px;width:430px;height:1px;background:#242424"></div>
<svg class="a" style="left:1500px;top:104px" width="25" height="21" viewBox="0 0 25 21"><path d="M1.5 2Q1.5 0.5 3 0.5H9.5L12 3H22.5Q24 3 24 4.5V19Q24 20.5 22.5 20.5H3Q1.5 20.5 1.5 19Z" fill="#c8c8c8"/></svg>
<div class="t" style="left:1536px;top:98px;color:#9a9a9a;font-size:13.8px">Scenes (Default Asset)</div>
<svg class="a" style="left:1910px;top:98px" width="4" height="13"><circle cx="2" cy="2" r="1.3" fill="#c4c4c4"/><circle cx="2" cy="6.5" r="1.3" fill="#c4c4c4"/><circle cx="2" cy="11" r="1.3" fill="#c4c4c4"/></svg>
<div class="a" style="left:1872px;top:121px;width:42px;height:17px;background:#4f4f4f;border-radius:3px;border-bottom:1px solid #262626"></div>
<div class="t" style="left:1878px;top:123px;color:#c4c4c4;font-size:12.5px">Open</div>
<div class="a" style="left:1490px;top:147px;width:430px;height:800px;background:#383838"></div>
<div class="a" style="left:1490px;top:947px;width:430px;height:1px;background:#242424"></div>
<div class="a" style="left:1490px;top:948px;width:430px;height:20px;background:#3e3e3e"></div>
<div class="a" style="left:1490px;top:968px;width:430px;height:1px;background:#242424"></div>
<div class="t" style="left:1497px;top:951px;color:#c4c4c4;font-size:13px;font-weight:bold">Asset Labels</div>
<div class="a" style="left:1490px;top:969px;width:430px;height:49px;background:#3a3a3a"></div>
<div class="a" style="left:1894px;top:974px;width:21px;height:16px;background:#1f4c8f;border-radius:8px"></div>
<svg class="a" style="left:1898px;top:976px" width="12" height="11"><path d="M1 1H6L11 6L6.5 10.5L1 5Z" fill="#e8e8e8"/><circle cx="3.6" cy="3.5" r="1" fill="#1f4c8f"/></svg>
<div class="t" style="left:1494px;top:998px;color:#b0b0b0;font-size:12.5px">AssetBundle</div>
<div class="a" style="left:1838px;top:997px;width:78px;height:17px;background:#4f4f4f;border-radius:3px;border-bottom:1px solid #2a2a2a"></div>
<div class="t" style="left:1843px;top:999px;color:#c4c4c4;font-size:12.5px">None</div>
<div class="dd" style="left:1901px;top:1004px"></div><!-- GAME PANEL -->
<div class="a" style="left:0;top:632px;width:1920px;height:2px;background:#191919"></div>
<div class="a" style="left:0;top:634px;width:875px;height:19px;background:#282828"></div>
<div class="tab" style="left:88px;top:634px;width:74px;height:19px"></div>
<svg class="a" style="left:8px;top:638px" width="10" height="11"><rect x="0" y="0" width="10" height="11" rx="1" fill="#c4c4c4"/><path d="M2 2.5H8M2 4.5H8M2 6.5H6M2 8.5H8" stroke="#282828" stroke-width="1"/></svg>
<div class="t" style="left:23px;top:638px;color:#c4c4c4;font-size:12.5px">Console</div>
<svg class="a" style="left:94px;top:639px" width="15" height="9"><rect x="0.5" y="0.5" width="14" height="8" rx="4" fill="#c4c4c4"/><path d="M3 4.5H6M4.5 3V6" stroke="#3c3c3c" stroke-width="1.1"/><circle cx="10.5" cy="3.3" r="0.9" fill="#3c3c3c"/><circle cx="11.5" cy="5.5" r="0.9" fill="#3c3c3c"/></svg>
<div class="t" style="left:111px;top:638px;color:#c4c4c4;font-size:12.5px">Game</div>
<svg class="a" style="left:171px;top:637px" width="12" height="12"><circle cx="6" cy="6" r="5.8" fill="#c4c4c4"/><path d="M6 2.5V6.5H9" fill="none" stroke="#282828" stroke-width="1.3"/></svg>
<div class="t" style="left:187px;top:638px;color:#c4c4c4;font-size:12.5px">Animation</div>
<svg class="a" style="left:860px;top:637px" width="4" height="13"><circle cx="2" cy="2" r="1.3" fill="#c4c4c4"/><circle cx="2" cy="6.5" r="1.3" fill="#c4c4c4"/><circle cx="2" cy="11" r="1.3" fill="#c4c4c4"/></svg>
<div class="a" style="left:0;top:653px;width:875px;height:21px;background:#3c3c3c"></div>
<div class="a" style="left:90px;top:653px;width:1px;height:20px;background:#2a2a2a"></div>
<div class="a" style="left:176px;top:653px;width:1px;height:20px;background:#2a2a2a"></div>
<div class="a" style="left:336px;top:653px;width:1px;height:20px;background:#2a2a2a"></div>
<div class="a" style="left:577px;top:653px;width:1px;height:20px;background:#2a2a2a"></div>
<div class="a" style="left:687px;top:653px;width:1px;height:20px;background:#2a2a2a"></div>
<div class="a" style="left:713px;top:653px;width:1px;height:20px;background:#2a2a2a"></div>
<div class="a" style="left:739px;top:653px;width:1px;height:20px;background:#2a2a2a"></div>
<div class="a" style="left:765px;top:653px;width:1px;height:20px;background:#2a2a2a"></div>
<div class="a" style="left:804px;top:653px;width:1px;height:20px;background:#2a2a2a"></div>
<div class="a" style="left:0;top:673px;width:875px;height:1px;background:#232323"></div>
<div class="t" style="left:4px;top:657px;color:#c4c4c4;font-size:12.5px">Game</div>
<div class="dd" style="left:78px;top:661px"></div>
<div class="t" style="left:100px;top:657px;color:#c4c4c4;font-size:12.5px">Display 1</div>
<div class="dd" style="left:163px;top:661px"></div>
<div class="t" style="left:180px;top:657px;color:#c4c4c4;font-size:12.5px">Free Aspect</div>
<div class="dd" style="left:324px;top:661px"></div>
<div class="t" style="left:343px;top:657px;color:#c4c4c4;font-size:12.5px">Scale</div>
<div class="a" style="left:386px;top:663px;width:145px;height:2px;background:#5e5e5e"></div>
<div class="a" style="left:381px;top:659px;width:10px;height:10px;border-radius:5px;background:#999"></div>
<div class="t" style="left:536px;top:657px;color:#c4c4c4;font-size:12.5px">1x</div>
<div class="t" style="left:581px;top:657px;color:#c4c4c4;font-size:12.5px">Play Focused</div>
<div class="dd" style="left:675px;top:661px"></div>
<svg class="a" style="left:692px;top:656px" width="16" height="14"><ellipse cx="8" cy="8" rx="4.5" ry="5" fill="#c4c4c4"/><path d="M2 4L5 6M14 4L11 6M1 9H4M12 9H15M2 13L5 11M14 13L11 11M6 3L5 1M10 3L11 1" stroke="#c4c4c4" stroke-width="1.1"/><rect x="6" y="7" width="4" height="3" fill="#3c3c3c"/></svg>
<svg class="a" style="left:719px;top:657px" width="15" height="12"><path d="M1 4H3.5L7 1V11L3.5 8H1Z" fill="#c4c4c4"/><path d="M9 3.5Q10.5 6 9 8.5M11 2Q13.5 6 11 10" fill="none" stroke="#c4c4c4" stroke-width="1.1"/></svg>
<svg class="a" style="left:745px;top:657px" width="16" height="12"><rect x="0.5" y="0.5" width="15" height="11" fill="none" stroke="#c4c4c4" stroke-width="1.1"/><path d="M3 3.5H13M3 6H13M3 8.5H13M5.5 2V10M8 2V10M10.5 2V10" stroke="#c4c4c4" stroke-width="0.9"/></svg>
<div class="t" style="left:770px;top:657px;color:#c4c4c4;font-size:12.5px">Stats</div>
<div class="t" style="left:808px;top:657px;color:#c4c4c4;font-size:12.5px">Gizmos</div>
<div class="a" style="left:856px;top:656px;width:1px;height:14px;background:#2a2a2a"></div>
<div class="dd" style="left:862px;top:661px"></div>
<svg class="a" style="left:0;top:674px" width="875" height="344" shape-rendering="crispEdges"><rect width="875" height="344" fill="#1b0e18"/><rect x="-28" y="-16" width="57" height="22" fill="#25235d"/><rect x="-28" y="-16" width="35" height="4" fill="#323865"/><rect x="-28" y="-16" width="3" height="14" fill="#323865"/><rect x="-3" y="1" width="32" height="5" fill="#2c1b4b"/><rect x="25" y="-11" width="4" height="17" fill="#2c1b4b"/><rect x="34" y="-16" width="52" height="22" fill="#25235d"/><rect x="34" y="-16" width="36" height="4" fill="#323865"/><rect x="34" y="-16" width="3" height="14" fill="#323865"/><rect x="47" y="-12" width="14" height="5" fill="#323865"/><rect x="49" y="1" width="37" height="5" fill="#2c1b4b"/><rect x="82" y="-11" width="4" height="17" fill="#2c1b4b"/><rect x="92" y="-16" width="62" height="22" fill="#25235d"/><rect x="92" y="-16" width="42" height="4" fill="#323865"/><rect x="92" y="-16" width="3" height="14" fill="#323865"/><rect x="108" y="-12" width="24" height="5" fill="#323865"/><rect x="107" y="1" width="47" height="5" fill="#2c1b4b"/><rect x="150" y="-11" width="4" height="17" fill="#2c1b4b"/><rect x="158" y="-16" width="55" height="22" fill="#25235d"/><rect x="158" y="-16" width="26" height="4" fill="#323865"/><rect x="158" y="-16" width="3" height="14" fill="#323865"/><rect x="169" y="-12" width="14" height="5" fill="#323865"/><rect x="176" y="1" width="37" height="5" fill="#2c1b4b"/><rect x="209" y="-11" width="4" height="17" fill="#2c1b4b"/><rect x="158" y="2" width="19" height="4" fill="#2c1b4b"/><rect x="217" y="-16" width="34" height="22" fill="#25235d"/><rect x="217" y="-16" width="18" height="4" fill="#323865"/><rect x="217" y="-16" width="3" height="14" fill="#323865"/><rect x="222" y="-12" width="9" height="5" fill="#323865"/><rect x="226" y="1" width="25" height="5" fill="#2c1b4b"/><rect x="247" y="-11" width="4" height="17" fill="#2c1b4b"/><rect x="217" y="2" width="11" height="4" fill="#2c1b4b"/><rect x="257" y="-16" width="57" height="22" fill="#25235d"/><rect x="257" y="-16" width="41" height="4" fill="#323865"/><rect x="257" y="-16" width="3" height="14" fill="#323865"/><rect x="268" y="-12" width="17" height="5" fill="#323865"/><rect x="284" y="1" width="30" height="5" fill="#2c1b4b"/><rect x="310" y="-11" width="4" height="17" fill="#2c1b4b"/><rect x="318" y="-16" width="47" height="22" fill="#25235d"/><rect x="318" y="-16" width="37" height="4" fill="#323865"/><rect x="318" y="-16" width="3" height="14" fill="#323865"/><rect x="336" y="-12" width="19" height="5" fill="#323865"/><rect x="342" y="1" width="23" height="5" fill="#2c1b4b"/><rect x="361" y="-11" width="4" height="17" fill="#2c1b4b"/><rect x="318" y="2" width="16" height="4" fill="#2c1b4b"/><rect x="369" y="-16" width="25" height="22" fill="#25235d"/><rect x="369" y="-16" width="15" height="4" fill="#323865"/><rect x="369" y="-16" width="3" height="14" fill="#323865"/><rect x="378" y="1" width="16" height="5" fill="#2c1b4b"/><rect x="390" y="-11" width="4" height="17" fill="#2c1b4b"/><rect x="399" y="-16" width="34" height="22" fill="#25235d"/><rect x="399" y="-16" width="18" height="4" fill="#323865"/><rect x="399" y="-16" width="3" height="14" fill="#323865"/><rect x="406" y="-12" width="15" height="5" fill="#323865"/><rect x="406" y="1" width="27" height="5" fill="#2c1b4b"/><rect x="429" y="-11" width="4" height="17" fill="#2c1b4b"/><rect x="399" y="2" width="11" height="4" fill="#2c1b4b"/><rect x="439" y="-16" width="37" height="22" fill="#25235d"/><rect x="439" y="-16" width="18" height="4" fill="#323865"/><rect x="439" y="-16" width="3" height="14" fill="#323865"/><rect x="451" y="-12" width="10" height="5" fill="#323865"/><rect x="450" y="1" width="26" height="5" fill="#2c1b4b"/><rect x="472" y="-11" width="4" height="17" fill="#2c1b4b"/><rect x="439" y="2" width="12" height="4" fill="#2c1b4b"/><rect x="482" y="-16" width="34" height="22" fill="#25235d"/><rect x="482" y="-16" width="25" height="4" fill="#323865"/><rect x="482" y="-16" width="3" height="14" fill="#323865"/><rect x="490" y="-12" width="11" height="5" fill="#323865"/><rect x="486" y="1" width="30" height="5" fill="#2c1b4b"/><rect x="512" y="-11" width="4" height="17" fill="#2c1b4b"/><rect x="482" y="2" width="11" height="4" fill="#2c1b4b"/><rect x="522" y="-16" width="59" height="22" fill="#25235d"/><rect x="522" y="-16" width="50" height="4" fill="#323865"/><rect x="522" y="-16" width="3" height="14" fill="#323865"/><rect x="533" y="-12" width="26" height="5" fill="#323865"/><rect x="538" y="1" width="43" height="5" fill="#2c1b4b"/><rect x="577" y="-11" width="4" height="17" fill="#2c1b4b"/><rect x="586" y="-16" width="24" height="22" fill="#25235d"/><rect x="586" y="-16" width="12" height="4" fill="#323865"/><rect x="586" y="-16" width="3" height="14" fill="#323865"/><rect x="594" y="-12" width="7" height="5" fill="#323865"/><rect x="596" y="1" width="14" height="5" fill="#2c1b4b"/><rect x="606" y="-11" width="4" height="17" fill="#2c1b4b"/><rect x="586" y="2" width="8" height="4" fill="#2c1b4b"/><rect x="614" y="-16" width="27" height="22" fill="#25235d"/><rect x="614" y="-16" width="18" height="4" fill="#323865"/><rect x="614" y="-16" width="3" height="14" fill="#323865"/><rect x="622" y="-12" width="8" height="5" fill="#323865"/><rect x="623" y="1" width="18" height="5" fill="#2c1b4b"/><rect x="637" y="-11" width="4" height="17" fill="#2c1b4b"/><rect x="645" y="-16" width="52" height="22" fill="#25235d"/><rect x="645" y="-16" width="26" height="4" fill="#323865"/><rect x="645" y="-16" width="3" height="14" fill="#323865"/><rect x="660" y="-12" width="16" height="5" fill="#323865"/><rect x="667" y="1" width="30" height="5" fill="#2c1b4b"/><rect x="693" y="-11" width="4" height="17" fill="#2c1b4b"/><rect x="703" y="-16" width="34" height="22" fill="#25235d"/><rect x="703" y="-16" width="25" height="4" fill="#323865"/><rect x="703" y="-16" width="3" height="14" fill="#323865"/><rect x="718" y="1" width="19" height="5" fill="#2c1b4b"/><rect x="733" y="-11" width="4" height="17" fill="#2c1b4b"/><rect x="741" y="-16" width="52" height="22" fill="#25235d"/><rect x="741" y="-16" width="25" height="4" fill="#323865"/><rect x="741" y="-16" width="3" height="14" fill="#323865"/><rect x="750" y="-12" width="18" height="5" fill="#323865"/><rect x="762" y="1" width="31" height="5" fill="#2c1b4b"/><rect x="789" y="-11" width="4" height="17" fill="#2c1b4b"/><rect x="799" y="-16" width="47" height="22" fill="#25235d"/><rect x="799" y="-16" width="29" height="4" fill="#323865"/><rect x="799" y="-16" width="3" height="14" fill="#323865"/><rect x="814" y="1" width="32" height="5" fill="#2c1b4b"/><rect x="842" y="-11" width="4" height="17" fill="#2c1b4b"/><rect x="851" y="-16" width="26" height="22" fill="#25235d"/><rect x="851" y="-16" width="14" height="4" fill="#323865"/><rect x="851" y="-16" width="3" height="14" fill="#323865"/><rect x="856" y="1" width="21" height="5" fill="#2c1b4b"/><rect x="873" y="-11" width="4" height="17" fill="#2c1b4b"/><rect x="-17" y="11" width="35" height="21" fill="#25235d"/><rect x="-17" y="11" width="26" height="4" fill="#323865"/><rect x="-17" y="11" width="3" height="13" fill="#323865"/><rect x="-9" y="15" width="10" height="5" fill="#323865"/><rect x="0" y="27" width="18" height="5" fill="#2c1b4b"/><rect x="14" y="16" width="4" height="16" fill="#2c1b4b"/><rect x="-17" y="28" width="12" height="4" fill="#2c1b4b"/><rect x="22" y="11" width="55" height="21" fill="#25235d"/><rect x="22" y="11" width="46" height="4" fill="#323865"/><rect x="22" y="11" width="3" height="13" fill="#323865"/><rect x="32" y="15" width="18" height="5" fill="#323865"/><rect x="43" y="27" width="34" height="5" fill="#2c1b4b"/><rect x="73" y="16" width="4" height="16" fill="#2c1b4b"/><rect x="83" y="11" width="55" height="21" fill="#25235d"/><rect x="83" y="11" width="45" height="4" fill="#323865"/><rect x="83" y="11" width="3" height="13" fill="#323865"/><rect x="91" y="27" width="47" height="5" fill="#2c1b4b"/><rect x="134" y="16" width="4" height="16" fill="#2c1b4b"/><rect x="83" y="28" width="19" height="4" fill="#2c1b4b"/><rect x="144" y="11" width="44" height="21" fill="#25235d"/><rect x="144" y="11" width="25" height="4" fill="#323865"/><rect x="144" y="11" width="3" height="13" fill="#323865"/><rect x="157" y="15" width="11" height="5" fill="#323865"/><rect x="165" y="27" width="23" height="5" fill="#2c1b4b"/><rect x="184" y="16" width="4" height="16" fill="#2c1b4b"/><rect x="144" y="28" width="15" height="4" fill="#2c1b4b"/><rect x="194" y="11" width="30" height="21" fill="#25235d"/><rect x="194" y="11" width="14" height="4" fill="#323865"/><rect x="194" y="11" width="3" height="13" fill="#323865"/><rect x="204" y="15" width="12" height="5" fill="#323865"/><rect x="201" y="27" width="23" height="5" fill="#2c1b4b"/><rect x="220" y="16" width="4" height="16" fill="#2c1b4b"/><rect x="228" y="11" width="43" height="21" fill="#25235d"/><rect x="228" y="11" width="20" height="4" fill="#323865"/><rect x="228" y="11" width="3" height="13" fill="#323865"/><rect x="235" y="15" width="18" height="5" fill="#323865"/><rect x="234" y="27" width="37" height="5" fill="#2c1b4b"/><rect x="267" y="16" width="4" height="16" fill="#2c1b4b"/><rect x="228" y="28" width="15" height="4" fill="#2c1b4b"/><rect x="276" y="11" width="53" height="21" fill="#25235d"/><rect x="276" y="11" width="24" height="4" fill="#323865"/><rect x="276" y="11" width="3" height="13" fill="#323865"/><rect x="295" y="27" width="34" height="5" fill="#2c1b4b"/><rect x="325" y="16" width="4" height="16" fill="#2c1b4b"/><rect x="276" y="28" width="18" height="4" fill="#2c1b4b"/><rect x="335" y="11" width="26" height="21" fill="#25235d"/><rect x="335" y="11" width="12" height="4" fill="#323865"/><rect x="335" y="11" width="3" height="13" fill="#323865"/><rect x="340" y="15" width="8" height="5" fill="#323865"/><rect x="345" y="27" width="16" height="5" fill="#2c1b4b"/><rect x="357" y="16" width="4" height="16" fill="#2c1b4b"/><rect x="365" y="11" width="59" height="21" fill="#25235d"/><rect x="365" y="11" width="36" height="4" fill="#323865"/><rect x="365" y="11" width="3" height="13" fill="#323865"/><rect x="393" y="27" width="31" height="5" fill="#2c1b4b"/><rect x="420" y="16" width="4" height="16" fill="#2c1b4b"/><rect x="429" y="11" width="23" height="21" fill="#25235d"/><rect x="429" y="11" width="15" height="4" fill="#323865"/><rect x="429" y="11" width="3" height="13" fill="#323865"/><rect x="433" y="15" width="8" height="5" fill="#323865"/><rect x="436" y="27" width="16" height="5" fill="#2c1b4b"/><rect x="448" y="16" width="4" height="16" fill="#2c1b4b"/><rect x="457" y="11" width="53" height="21" fill="#25235d"/><rect x="457" y="11" width="42" height="4" fill="#323865"/><rect x="457" y="11" width="3" height="13" fill="#323865"/><rect x="466" y="15" width="19" height="5" fill="#323865"/><rect x="473" y="27" width="37" height="5" fill="#2c1b4b"/><rect x="506" y="16" width="4" height="16" fill="#2c1b4b"/><rect x="515" y="11" width="43" height="21" fill="#25235d"/><rect x="515" y="11" width="35" height="4" fill="#323865"/><rect x="515" y="11" width="3" height="13" fill="#323865"/><rect x="524" y="15" width="14" height="5" fill="#323865"/><rect x="533" y="27" width="25" height="5" fill="#2c1b4b"/><rect x="554" y="16" width="4" height="16" fill="#2c1b4b"/><rect x="564" y="11" width="34" height="21" fill="#25235d"/><rect x="564" y="11" width="20" height="4" fill="#323865"/><rect x="564" y="11" width="3" height="13" fill="#323865"/><rect x="577" y="27" width="21" height="5" fill="#2c1b4b"/><rect x="594" y="16" width="4" height="16" fill="#2c1b4b"/><rect x="564" y="28" width="11" height="4" fill="#2c1b4b"/><rect x="602" y="11" width="53" height="21" fill="#25235d"/><rect x="602" y="11" width="41" height="4" fill="#323865"/><rect x="602" y="11" width="3" height="13" fill="#323865"/><rect x="614" y="27" width="41" height="5" fill="#2c1b4b"/><rect x="651" y="16" width="4" height="16" fill="#2c1b4b"/><rect x="660" y="11" width="39" height="21" fill="#25235d"/><rect x="660" y="11" width="19" height="4" fill="#323865"/><rect x="660" y="11" width="3" height="13" fill="#323865"/><rect x="674" y="15" width="16" height="5" fill="#323865"/><rect x="674" y="27" width="25" height="5" fill="#2c1b4b"/><rect x="695" y="16" width="4" height="16" fill="#2c1b4b"/><rect x="703" y="11" width="42" height="21" fill="#25235d"/><rect x="703" y="11" width="32" height="4" fill="#323865"/><rect x="703" y="11" width="3" height="13" fill="#323865"/><rect x="717" y="27" width="28" height="5" fill="#2c1b4b"/><rect x="741" y="16" width="4" height="16" fill="#2c1b4b"/><rect x="703" y="28" width="14" height="4" fill="#2c1b4b"/><rect x="751" y="11" width="24" height="21" fill="#25235d"/><rect x="751" y="11" width="19" height="4" fill="#323865"/><rect x="751" y="11" width="3" height="13" fill="#323865"/><rect x="758" y="15" width="8" height="5" fill="#323865"/><rect x="761" y="27" width="14" height="5" fill="#2c1b4b"/><rect x="771" y="16" width="4" height="16" fill="#2c1b4b"/><rect x="780" y="11" width="23" height="21" fill="#25235d"/><rect x="780" y="11" width="11" height="4" fill="#323865"/><rect x="780" y="11" width="3" height="13" fill="#323865"/><rect x="783" y="15" width="9" height="5" fill="#323865"/><rect x="790" y="27" width="13" height="5" fill="#2c1b4b"/><rect x="799" y="16" width="4" height="16" fill="#2c1b4b"/><rect x="780" y="28" width="8" height="4" fill="#2c1b4b"/><rect x="809" y="11" width="25" height="21" fill="#25235d"/><rect x="809" y="11" width="12" height="4" fill="#323865"/><rect x="809" y="11" width="3" height="13" fill="#323865"/><rect x="816" y="15" width="9" height="5" fill="#323865"/><rect x="818" y="27" width="16" height="5" fill="#2c1b4b"/><rect x="830" y="16" width="4" height="16" fill="#2c1b4b"/><rect x="809" y="28" width="8" height="4" fill="#2c1b4b"/><rect x="840" y="11" width="34" height="21" fill="#25235d"/><rect x="840" y="11" width="26" height="4" fill="#323865"/><rect x="840" y="11" width="3" height="13" fill="#323865"/><rect x="851" y="15" width="13" height="5" fill="#323865"/><rect x="850" y="27" width="24" height="5" fill="#2c1b4b"/><rect x="870" y="16" width="4" height="16" fill="#2c1b4b"/><rect x="840" y="28" width="11" height="4" fill="#2c1b4b"/><rect x="-14" y="39" width="39" height="21" fill="#25235d"/><rect x="-14" y="39" width="25" height="4" fill="#323865"/><rect x="-14" y="39" width="3" height="13" fill="#323865"/><rect x="-2" y="55" width="27" height="5" fill="#2c1b4b"/><rect x="21" y="44" width="4" height="16" fill="#2c1b4b"/><rect x="30" y="39" width="32" height="21" fill="#25235d"/><rect x="30" y="39" width="25" height="4" fill="#323865"/><rect x="30" y="39" width="3" height="13" fill="#323865"/><rect x="44" y="55" width="18" height="5" fill="#2c1b4b"/><rect x="58" y="44" width="4" height="16" fill="#2c1b4b"/><rect x="30" y="56" width="11" height="4" fill="#2c1b4b"/><rect x="67" y="39" width="46" height="21" fill="#25235d"/><rect x="67" y="39" width="28" height="4" fill="#323865"/><rect x="67" y="39" width="3" height="13" fill="#323865"/><rect x="84" y="43" width="11" height="5" fill="#323865"/><rect x="80" y="55" width="33" height="5" fill="#2c1b4b"/><rect x="109" y="44" width="4" height="16" fill="#2c1b4b"/><rect x="117" y="39" width="54" height="21" fill="#25235d"/><rect x="117" y="39" width="34" height="4" fill="#323865"/><rect x="117" y="39" width="3" height="13" fill="#323865"/><rect x="140" y="55" width="31" height="5" fill="#2c1b4b"/><rect x="167" y="44" width="4" height="16" fill="#2c1b4b"/><rect x="176" y="39" width="29" height="21" fill="#25235d"/><rect x="176" y="39" width="15" height="4" fill="#323865"/><rect x="176" y="39" width="3" height="13" fill="#323865"/><rect x="180" y="43" width="9" height="5" fill="#323865"/><rect x="180" y="55" width="25" height="5" fill="#2c1b4b"/><rect x="201" y="44" width="4" height="16" fill="#2c1b4b"/><rect x="209" y="39" width="38" height="21" fill="#25235d"/><rect x="209" y="39" width="30" height="4" fill="#323865"/><rect x="209" y="39" width="3" height="13" fill="#323865"/><rect x="215" y="43" width="12" height="5" fill="#323865"/><rect x="220" y="55" width="27" height="5" fill="#2c1b4b"/><rect x="243" y="44" width="4" height="16" fill="#2c1b4b"/><rect x="253" y="39" width="53" height="21" fill="#25235d"/><rect x="253" y="39" width="28" height="4" fill="#323865"/><rect x="253" y="39" width="3" height="13" fill="#323865"/><rect x="271" y="55" width="35" height="5" fill="#2c1b4b"/><rect x="302" y="44" width="4" height="16" fill="#2c1b4b"/><rect x="253" y="56" width="18" height="4" fill="#2c1b4b"/><rect x="310" y="39" width="56" height="21" fill="#25235d"/><rect x="310" y="39" width="40" height="4" fill="#323865"/><rect x="310" y="39" width="3" height="13" fill="#323865"/><rect x="328" y="55" width="38" height="5" fill="#2c1b4b"/><rect x="362" y="44" width="4" height="16" fill="#2c1b4b"/><rect x="371" y="39" width="55" height="21" fill="#25235d"/><rect x="371" y="39" width="39" height="4" fill="#323865"/><rect x="371" y="39" width="3" height="13" fill="#323865"/><rect x="388" y="55" width="38" height="5" fill="#2c1b4b"/><rect x="422" y="44" width="4" height="16" fill="#2c1b4b"/><rect x="432" y="39" width="27" height="21" fill="#25235d"/><rect x="432" y="39" width="16" height="4" fill="#323865"/><rect x="432" y="39" width="3" height="13" fill="#323865"/><rect x="437" y="55" width="22" height="5" fill="#2c1b4b"/><rect x="455" y="44" width="4" height="16" fill="#2c1b4b"/><rect x="463" y="39" width="32" height="21" fill="#25235d"/><rect x="463" y="39" width="20" height="4" fill="#323865"/><rect x="463" y="39" width="3" height="13" fill="#323865"/><rect x="476" y="55" width="19" height="5" fill="#2c1b4b"/><rect x="491" y="44" width="4" height="16" fill="#2c1b4b"/><rect x="501" y="39" width="61" height="21" fill="#25235d"/><rect x="501" y="39" width="34" height="4" fill="#323865"/><rect x="501" y="39" width="3" height="13" fill="#323865"/><rect x="518" y="43" width="18" height="5" fill="#323865"/><rect x="520" y="55" width="42" height="5" fill="#2c1b4b"/><rect x="558" y="44" width="4" height="16" fill="#2c1b4b"/><rect x="501" y="56" width="21" height="4" fill="#2c1b4b"/><rect x="566" y="39" width="29" height="21" fill="#25235d"/><rect x="566" y="39" width="13" height="4" fill="#323865"/><rect x="566" y="39" width="3" height="13" fill="#323865"/><rect x="574" y="43" width="7" height="5" fill="#323865"/><rect x="570" y="55" width="25" height="5" fill="#2c1b4b"/><rect x="591" y="44" width="4" height="16" fill="#2c1b4b"/><rect x="601" y="39" width="58" height="21" fill="#25235d"/><rect x="601" y="39" width="37" height="4" fill="#323865"/><rect x="601" y="39" width="3" height="13" fill="#323865"/><rect x="629" y="55" width="30" height="5" fill="#2c1b4b"/><rect x="655" y="44" width="4" height="16" fill="#2c1b4b"/><rect x="663" y="39" width="48" height="21" fill="#25235d"/><rect x="663" y="39" width="26" height="4" fill="#323865"/><rect x="663" y="39" width="3" height="13" fill="#323865"/><rect x="671" y="43" width="16" height="5" fill="#323865"/><rect x="672" y="55" width="39" height="5" fill="#2c1b4b"/><rect x="707" y="44" width="4" height="16" fill="#2c1b4b"/><rect x="716" y="39" width="52" height="21" fill="#25235d"/><rect x="716" y="39" width="29" height="4" fill="#323865"/><rect x="716" y="39" width="3" height="13" fill="#323865"/><rect x="731" y="43" width="22" height="5" fill="#323865"/><rect x="740" y="55" width="28" height="5" fill="#2c1b4b"/><rect x="764" y="44" width="4" height="16" fill="#2c1b4b"/><rect x="774" y="39" width="23" height="21" fill="#25235d"/><rect x="774" y="39" width="12" height="4" fill="#323865"/><rect x="774" y="39" width="3" height="13" fill="#323865"/><rect x="781" y="43" width="7" height="5" fill="#323865"/><rect x="783" y="55" width="14" height="5" fill="#2c1b4b"/><rect x="793" y="44" width="4" height="16" fill="#2c1b4b"/><rect x="801" y="39" width="28" height="21" fill="#25235d"/><rect x="801" y="39" width="20" height="4" fill="#323865"/><rect x="801" y="39" width="3" height="13" fill="#323865"/><rect x="808" y="43" width="8" height="5" fill="#323865"/><rect x="813" y="55" width="16" height="5" fill="#2c1b4b"/><rect x="825" y="44" width="4" height="16" fill="#2c1b4b"/><rect x="834" y="39" width="49" height="21" fill="#25235d"/><rect x="834" y="39" width="29" height="4" fill="#323865"/><rect x="834" y="39" width="3" height="13" fill="#323865"/><rect x="847" y="43" width="13" height="5" fill="#323865"/><rect x="855" y="55" width="28" height="5" fill="#2c1b4b"/><rect x="879" y="44" width="4" height="16" fill="#2c1b4b"/><rect x="-40" y="65" width="35" height="20" fill="#25235d"/><rect x="-40" y="65" width="18" height="4" fill="#323865"/><rect x="-40" y="65" width="3" height="12" fill="#323865"/><rect x="-30" y="69" width="9" height="5" fill="#323865"/><rect x="-35" y="80" width="30" height="5" fill="#2c1b4b"/><rect x="-9" y="70" width="4" height="15" fill="#2c1b4b"/><rect x="1" y="65" width="44" height="20" fill="#25235d"/><rect x="1" y="65" width="25" height="4" fill="#323865"/><rect x="1" y="65" width="3" height="12" fill="#323865"/><rect x="17" y="69" width="12" height="5" fill="#323865"/><rect x="6" y="80" width="39" height="5" fill="#2c1b4b"/><rect x="41" y="70" width="4" height="15" fill="#2c1b4b"/><rect x="49" y="65" width="30" height="20" fill="#25235d"/><rect x="49" y="65" width="15" height="4" fill="#323865"/><rect x="49" y="65" width="3" height="12" fill="#323865"/><rect x="56" y="69" width="10" height="5" fill="#323865"/><rect x="53" y="80" width="26" height="5" fill="#2c1b4b"/><rect x="75" y="70" width="4" height="15" fill="#2c1b4b"/><rect x="83" y="65" width="30" height="20" fill="#25235d"/><rect x="83" y="65" width="18" height="4" fill="#323865"/><rect x="83" y="65" width="3" height="12" fill="#323865"/><rect x="98" y="80" width="15" height="5" fill="#2c1b4b"/><rect x="109" y="70" width="4" height="15" fill="#2c1b4b"/><rect x="83" y="81" width="10" height="4" fill="#2c1b4b"/><rect x="117" y="65" width="44" height="20" fill="#25235d"/><rect x="117" y="65" width="21" height="4" fill="#323865"/><rect x="117" y="65" width="3" height="12" fill="#323865"/><rect x="131" y="69" width="15" height="5" fill="#323865"/><rect x="127" y="80" width="34" height="5" fill="#2c1b4b"/><rect x="157" y="70" width="4" height="15" fill="#2c1b4b"/><rect x="117" y="81" width="15" height="4" fill="#2c1b4b"/><rect x="166" y="65" width="26" height="20" fill="#25235d"/><rect x="166" y="65" width="12" height="4" fill="#323865"/><rect x="166" y="65" width="3" height="12" fill="#323865"/><rect x="173" y="69" width="9" height="5" fill="#323865"/><rect x="174" y="80" width="18" height="5" fill="#2c1b4b"/><rect x="188" y="70" width="4" height="15" fill="#2c1b4b"/><rect x="166" y="81" width="9" height="4" fill="#2c1b4b"/><rect x="197" y="65" width="33" height="20" fill="#25235d"/><rect x="197" y="65" width="17" height="4" fill="#323865"/><rect x="197" y="65" width="3" height="12" fill="#323865"/><rect x="201" y="80" width="29" height="5" fill="#2c1b4b"/><rect x="226" y="70" width="4" height="15" fill="#2c1b4b"/><rect x="234" y="65" width="28" height="20" fill="#25235d"/><rect x="234" y="65" width="13" height="4" fill="#323865"/><rect x="234" y="65" width="3" height="12" fill="#323865"/><rect x="243" y="80" width="19" height="5" fill="#2c1b4b"/><rect x="258" y="70" width="4" height="15" fill="#2c1b4b"/><rect x="268" y="65" width="42" height="20" fill="#25235d"/><rect x="268" y="65" width="26" height="4" fill="#323865"/><rect x="268" y="65" width="3" height="12" fill="#323865"/><rect x="278" y="69" width="15" height="5" fill="#323865"/><rect x="289" y="80" width="21" height="5" fill="#2c1b4b"/><rect x="306" y="70" width="4" height="15" fill="#2c1b4b"/><rect x="315" y="65" width="34" height="20" fill="#25235d"/><rect x="315" y="65" width="20" height="4" fill="#323865"/><rect x="315" y="65" width="3" height="12" fill="#323865"/><rect x="323" y="69" width="14" height="5" fill="#323865"/><rect x="324" y="80" width="25" height="5" fill="#2c1b4b"/><rect x="345" y="70" width="4" height="15" fill="#2c1b4b"/><rect x="315" y="81" width="11" height="4" fill="#2c1b4b"/><rect x="353" y="65" width="22" height="20" fill="#25235d"/><rect x="353" y="65" width="17" height="4" fill="#323865"/><rect x="353" y="65" width="3" height="12" fill="#323865"/><rect x="358" y="80" width="17" height="5" fill="#2c1b4b"/><rect x="371" y="70" width="4" height="15" fill="#2c1b4b"/><rect x="380" y="65" width="62" height="20" fill="#25235d"/><rect x="380" y="65" width="42" height="4" fill="#323865"/><rect x="380" y="65" width="3" height="12" fill="#323865"/><rect x="398" y="69" width="19" height="5" fill="#323865"/><rect x="393" y="80" width="49" height="5" fill="#2c1b4b"/><rect x="438" y="70" width="4" height="15" fill="#2c1b4b"/><rect x="380" y="81" width="21" height="4" fill="#2c1b4b"/><rect x="447" y="65" width="29" height="20" fill="#25235d"/><rect x="447" y="65" width="21" height="4" fill="#323865"/><rect x="447" y="65" width="3" height="12" fill="#323865"/><rect x="458" y="69" width="8" height="5" fill="#323865"/><rect x="458" y="80" width="18" height="5" fill="#2c1b4b"/><rect x="472" y="70" width="4" height="15" fill="#2c1b4b"/><rect x="482" y="65" width="45" height="20" fill="#25235d"/><rect x="482" y="65" width="34" height="4" fill="#323865"/><rect x="482" y="65" width="3" height="12" fill="#323865"/><rect x="496" y="69" width="11" height="5" fill="#323865"/><rect x="499" y="80" width="28" height="5" fill="#2c1b4b"/><rect x="523" y="70" width="4" height="15" fill="#2c1b4b"/><rect x="482" y="81" width="15" height="4" fill="#2c1b4b"/><rect x="532" y="65" width="22" height="20" fill="#25235d"/><rect x="532" y="65" width="18" height="4" fill="#323865"/><rect x="532" y="65" width="3" height="12" fill="#323865"/><rect x="543" y="80" width="11" height="5" fill="#2c1b4b"/><rect x="550" y="70" width="4" height="15" fill="#2c1b4b"/><rect x="532" y="81" width="7" height="4" fill="#2c1b4b"/><rect x="559" y="65" width="41" height="20" fill="#25235d"/><rect x="559" y="65" width="21" height="4" fill="#323865"/><rect x="559" y="65" width="3" height="12" fill="#323865"/><rect x="567" y="69" width="10" height="5" fill="#323865"/><rect x="572" y="80" width="28" height="5" fill="#2c1b4b"/><rect x="596" y="70" width="4" height="15" fill="#2c1b4b"/><rect x="559" y="81" width="14" height="4" fill="#2c1b4b"/><rect x="605" y="65" width="35" height="20" fill="#25235d"/><rect x="605" y="65" width="17" height="4" fill="#323865"/><rect x="605" y="65" width="3" height="12" fill="#323865"/><rect x="615" y="69" width="9" height="5" fill="#323865"/><rect x="621" y="80" width="19" height="5" fill="#2c1b4b"/><rect x="636" y="70" width="4" height="15" fill="#2c1b4b"/><rect x="605" y="81" width="12" height="4" fill="#2c1b4b"/><rect x="646" y="65" width="50" height="20" fill="#25235d"/><rect x="646" y="65" width="32" height="4" fill="#323865"/><rect x="646" y="65" width="3" height="12" fill="#323865"/><rect x="659" y="80" width="37" height="5" fill="#2c1b4b"/><rect x="692" y="70" width="4" height="15" fill="#2c1b4b"/><rect x="646" y="81" width="17" height="4" fill="#2c1b4b"/><rect x="701" y="65" width="38" height="20" fill="#25235d"/><rect x="701" y="65" width="21" height="4" fill="#323865"/><rect x="701" y="65" width="3" height="12" fill="#323865"/><rect x="711" y="69" width="12" height="5" fill="#323865"/><rect x="713" y="80" width="26" height="5" fill="#2c1b4b"/><rect x="735" y="70" width="4" height="15" fill="#2c1b4b"/><rect x="744" y="65" width="28" height="20" fill="#25235d"/><rect x="744" y="65" width="17" height="4" fill="#323865"/><rect x="744" y="65" width="3" height="12" fill="#323865"/><rect x="752" y="80" width="20" height="5" fill="#2c1b4b"/><rect x="768" y="70" width="4" height="15" fill="#2c1b4b"/><rect x="778" y="65" width="24" height="20" fill="#25235d"/><rect x="778" y="65" width="19" height="4" fill="#323865"/><rect x="778" y="65" width="3" height="12" fill="#323865"/><rect x="784" y="69" width="6" height="5" fill="#323865"/><rect x="786" y="80" width="16" height="5" fill="#2c1b4b"/><rect x="798" y="70" width="4" height="15" fill="#2c1b4b"/><rect x="807" y="65" width="25" height="20" fill="#25235d"/><rect x="807" y="65" width="20" height="4" fill="#323865"/><rect x="807" y="65" width="3" height="12" fill="#323865"/><rect x="814" y="69" width="9" height="5" fill="#323865"/><rect x="816" y="80" width="16" height="5" fill="#2c1b4b"/><rect x="828" y="70" width="4" height="15" fill="#2c1b4b"/><rect x="807" y="81" width="8" height="4" fill="#2c1b4b"/><rect x="837" y="65" width="39" height="20" fill="#25235d"/><rect x="837" y="65" width="32" height="4" fill="#323865"/><rect x="837" y="65" width="3" height="12" fill="#323865"/><rect x="845" y="80" width="31" height="5" fill="#2c1b4b"/><rect x="872" y="70" width="4" height="15" fill="#2c1b4b"/><rect x="837" y="81" width="13" height="4" fill="#2c1b4b"/><rect x="-15" y="90" width="59" height="23" fill="#25235d"/><rect x="-15" y="90" width="41" height="4" fill="#323865"/><rect x="-15" y="90" width="3" height="15" fill="#323865"/><rect x="3" y="94" width="15" height="5" fill="#323865"/><rect x="8" y="108" width="36" height="5" fill="#2c1b4b"/><rect x="40" y="95" width="4" height="18" fill="#2c1b4b"/><rect x="-15" y="109" width="20" height="4" fill="#2c1b4b"/><rect x="48" y="90" width="59" height="23" fill="#25235d"/><rect x="48" y="90" width="48" height="4" fill="#323865"/><rect x="48" y="90" width="3" height="15" fill="#323865"/><rect x="70" y="94" width="19" height="5" fill="#323865"/><rect x="67" y="108" width="40" height="5" fill="#2c1b4b"/><rect x="103" y="95" width="4" height="18" fill="#2c1b4b"/><rect x="113" y="90" width="37" height="23" fill="#25235d"/><rect x="113" y="90" width="24" height="4" fill="#323865"/><rect x="113" y="90" width="3" height="15" fill="#323865"/><rect x="121" y="108" width="29" height="5" fill="#2c1b4b"/><rect x="146" y="95" width="4" height="18" fill="#2c1b4b"/><rect x="113" y="109" width="12" height="4" fill="#2c1b4b"/><rect x="154" y="90" width="37" height="23" fill="#25235d"/><rect x="154" y="90" width="27" height="4" fill="#323865"/><rect x="154" y="90" width="3" height="15" fill="#323865"/><rect x="163" y="94" width="10" height="5" fill="#323865"/><rect x="160" y="108" width="31" height="5" fill="#2c1b4b"/><rect x="187" y="95" width="4" height="18" fill="#2c1b4b"/><rect x="154" y="109" width="12" height="4" fill="#2c1b4b"/><rect x="197" y="90" width="31" height="23" fill="#25235d"/><rect x="197" y="90" width="18" height="4" fill="#323865"/><rect x="197" y="90" width="3" height="15" fill="#323865"/><rect x="204" y="94" width="11" height="5" fill="#323865"/><rect x="205" y="108" width="23" height="5" fill="#2c1b4b"/><rect x="224" y="95" width="4" height="18" fill="#2c1b4b"/><rect x="232" y="90" width="45" height="23" fill="#25235d"/><rect x="232" y="90" width="29" height="4" fill="#323865"/><rect x="232" y="90" width="3" height="15" fill="#323865"/><rect x="238" y="108" width="39" height="5" fill="#2c1b4b"/><rect x="273" y="95" width="4" height="18" fill="#2c1b4b"/><rect x="283" y="90" width="37" height="23" fill="#25235d"/><rect x="283" y="90" width="18" height="4" fill="#323865"/><rect x="283" y="90" width="3" height="15" fill="#323865"/><rect x="290" y="108" width="30" height="5" fill="#2c1b4b"/><rect x="316" y="95" width="4" height="18" fill="#2c1b4b"/><rect x="325" y="90" width="44" height="23" fill="#25235d"/><rect x="325" y="90" width="24" height="4" fill="#323865"/><rect x="325" y="90" width="3" height="15" fill="#323865"/><rect x="338" y="108" width="31" height="5" fill="#2c1b4b"/><rect x="365" y="95" width="4" height="18" fill="#2c1b4b"/><rect x="374" y="90" width="62" height="23" fill="#25235d"/><rect x="374" y="90" width="46" height="4" fill="#323865"/><rect x="374" y="90" width="3" height="15" fill="#323865"/><rect x="387" y="94" width="27" height="5" fill="#323865"/><rect x="383" y="108" width="53" height="5" fill="#2c1b4b"/><rect x="432" y="95" width="4" height="18" fill="#2c1b4b"/><rect x="441" y="90" width="24" height="23" fill="#25235d"/><rect x="441" y="90" width="11" height="4" fill="#323865"/><rect x="441" y="90" width="3" height="15" fill="#323865"/><rect x="447" y="94" width="8" height="5" fill="#323865"/><rect x="453" y="108" width="12" height="5" fill="#2c1b4b"/><rect x="461" y="95" width="4" height="18" fill="#2c1b4b"/><rect x="471" y="90" width="26" height="23" fill="#25235d"/><rect x="471" y="90" width="21" height="4" fill="#323865"/><rect x="471" y="90" width="3" height="15" fill="#323865"/><rect x="476" y="94" width="11" height="5" fill="#323865"/><rect x="479" y="108" width="18" height="5" fill="#2c1b4b"/><rect x="493" y="95" width="4" height="18" fill="#2c1b4b"/><rect x="471" y="109" width="9" height="4" fill="#2c1b4b"/><rect x="501" y="90" width="43" height="23" fill="#25235d"/><rect x="501" y="90" width="27" height="4" fill="#323865"/><rect x="501" y="90" width="3" height="15" fill="#323865"/><rect x="516" y="94" width="17" height="5" fill="#323865"/><rect x="515" y="108" width="29" height="5" fill="#2c1b4b"/><rect x="540" y="95" width="4" height="18" fill="#2c1b4b"/><rect x="549" y="90" width="35" height="23" fill="#25235d"/><rect x="549" y="90" width="21" height="4" fill="#323865"/><rect x="549" y="90" width="3" height="15" fill="#323865"/><rect x="561" y="94" width="11" height="5" fill="#323865"/><rect x="558" y="108" width="26" height="5" fill="#2c1b4b"/><rect x="580" y="95" width="4" height="18" fill="#2c1b4b"/><rect x="589" y="90" width="42" height="23" fill="#25235d"/><rect x="589" y="90" width="28" height="4" fill="#323865"/><rect x="589" y="90" width="3" height="15" fill="#323865"/><rect x="595" y="108" width="36" height="5" fill="#2c1b4b"/><rect x="627" y="95" width="4" height="18" fill="#2c1b4b"/><rect x="589" y="109" width="14" height="4" fill="#2c1b4b"/><rect x="636" y="90" width="45" height="23" fill="#25235d"/><rect x="636" y="90" width="21" height="4" fill="#323865"/><rect x="636" y="90" width="3" height="15" fill="#323865"/><rect x="658" y="108" width="23" height="5" fill="#2c1b4b"/><rect x="677" y="95" width="4" height="18" fill="#2c1b4b"/><rect x="636" y="109" width="15" height="4" fill="#2c1b4b"/><rect x="687" y="90" width="58" height="23" fill="#25235d"/><rect x="687" y="90" width="37" height="4" fill="#323865"/><rect x="687" y="90" width="3" height="15" fill="#323865"/><rect x="710" y="108" width="35" height="5" fill="#2c1b4b"/><rect x="741" y="95" width="4" height="18" fill="#2c1b4b"/><rect x="751" y="90" width="26" height="23" fill="#25235d"/><rect x="751" y="90" width="13" height="4" fill="#323865"/><rect x="751" y="90" width="3" height="15" fill="#323865"/><rect x="764" y="108" width="13" height="5" fill="#2c1b4b"/><rect x="773" y="95" width="4" height="18" fill="#2c1b4b"/><rect x="751" y="109" width="9" height="4" fill="#2c1b4b"/><rect x="782" y="90" width="42" height="23" fill="#25235d"/><rect x="782" y="90" width="33" height="4" fill="#323865"/><rect x="782" y="90" width="3" height="15" fill="#323865"/><rect x="795" y="94" width="13" height="5" fill="#323865"/><rect x="788" y="108" width="36" height="5" fill="#2c1b4b"/><rect x="820" y="95" width="4" height="18" fill="#2c1b4b"/><rect x="782" y="109" width="14" height="4" fill="#2c1b4b"/><rect x="829" y="90" width="50" height="23" fill="#25235d"/><rect x="829" y="90" width="34" height="4" fill="#323865"/><rect x="829" y="90" width="3" height="15" fill="#323865"/><rect x="841" y="108" width="38" height="5" fill="#2c1b4b"/><rect x="875" y="95" width="4" height="18" fill="#2c1b4b"/><rect x="829" y="109" width="17" height="4" fill="#2c1b4b"/><rect x="-33" y="118" width="41" height="24" fill="#25235d"/><rect x="-33" y="118" width="23" height="4" fill="#323865"/><rect x="-33" y="118" width="3" height="16" fill="#323865"/><rect x="-18" y="122" width="17" height="5" fill="#323865"/><rect x="-16" y="137" width="24" height="5" fill="#2c1b4b"/><rect x="4" y="123" width="4" height="19" fill="#2c1b4b"/><rect x="-33" y="138" width="14" height="4" fill="#2c1b4b"/><rect x="13" y="118" width="45" height="24" fill="#25235d"/><rect x="13" y="118" width="26" height="4" fill="#323865"/><rect x="13" y="118" width="3" height="16" fill="#323865"/><rect x="24" y="122" width="13" height="5" fill="#323865"/><rect x="26" y="137" width="32" height="5" fill="#2c1b4b"/><rect x="54" y="123" width="4" height="19" fill="#2c1b4b"/><rect x="62" y="118" width="56" height="24" fill="#25235d"/><rect x="62" y="118" width="43" height="4" fill="#323865"/><rect x="62" y="118" width="3" height="16" fill="#323865"/><rect x="87" y="137" width="31" height="5" fill="#2c1b4b"/><rect x="114" y="123" width="4" height="19" fill="#2c1b4b"/><rect x="122" y="118" width="40" height="24" fill="#25235d"/><rect x="122" y="118" width="21" height="4" fill="#323865"/><rect x="122" y="118" width="3" height="16" fill="#323865"/><rect x="129" y="122" width="12" height="5" fill="#323865"/><rect x="142" y="137" width="20" height="5" fill="#2c1b4b"/><rect x="158" y="123" width="4" height="19" fill="#2c1b4b"/><rect x="166" y="118" width="49" height="24" fill="#25235d"/><rect x="166" y="118" width="33" height="4" fill="#323865"/><rect x="166" y="118" width="3" height="16" fill="#323865"/><rect x="180" y="122" width="15" height="5" fill="#323865"/><rect x="186" y="137" width="29" height="5" fill="#2c1b4b"/><rect x="211" y="123" width="4" height="19" fill="#2c1b4b"/><rect x="166" y="138" width="17" height="4" fill="#2c1b4b"/><rect x="219" y="118" width="42" height="24" fill="#25235d"/><rect x="219" y="118" width="19" height="4" fill="#323865"/><rect x="219" y="118" width="3" height="16" fill="#323865"/><rect x="239" y="137" width="22" height="5" fill="#2c1b4b"/><rect x="257" y="123" width="4" height="19" fill="#2c1b4b"/><rect x="265" y="118" width="49" height="24" fill="#25235d"/><rect x="265" y="118" width="36" height="4" fill="#323865"/><rect x="265" y="118" width="3" height="16" fill="#323865"/><rect x="283" y="122" width="15" height="5" fill="#323865"/><rect x="281" y="137" width="33" height="5" fill="#2c1b4b"/><rect x="310" y="123" width="4" height="19" fill="#2c1b4b"/><rect x="265" y="138" width="17" height="4" fill="#2c1b4b"/><rect x="318" y="118" width="43" height="24" fill="#25235d"/><rect x="318" y="118" width="21" height="4" fill="#323865"/><rect x="318" y="118" width="3" height="16" fill="#323865"/><rect x="333" y="122" width="11" height="5" fill="#323865"/><rect x="329" y="137" width="32" height="5" fill="#2c1b4b"/><rect x="357" y="123" width="4" height="19" fill="#2c1b4b"/><rect x="318" y="138" width="15" height="4" fill="#2c1b4b"/><rect x="367" y="118" width="44" height="24" fill="#25235d"/><rect x="367" y="118" width="33" height="4" fill="#323865"/><rect x="367" y="118" width="3" height="16" fill="#323865"/><rect x="374" y="137" width="37" height="5" fill="#2c1b4b"/><rect x="407" y="123" width="4" height="19" fill="#2c1b4b"/><rect x="415" y="118" width="62" height="24" fill="#25235d"/><rect x="415" y="118" width="40" height="4" fill="#323865"/><rect x="415" y="118" width="3" height="16" fill="#323865"/><rect x="427" y="137" width="50" height="5" fill="#2c1b4b"/><rect x="473" y="123" width="4" height="19" fill="#2c1b4b"/><rect x="415" y="138" width="21" height="4" fill="#2c1b4b"/><rect x="481" y="118" width="48" height="24" fill="#25235d"/><rect x="481" y="118" width="26" height="4" fill="#323865"/><rect x="481" y="118" width="3" height="16" fill="#323865"/><rect x="495" y="122" width="18" height="5" fill="#323865"/><rect x="499" y="137" width="30" height="5" fill="#2c1b4b"/><rect x="525" y="123" width="4" height="19" fill="#2c1b4b"/><rect x="481" y="138" width="16" height="4" fill="#2c1b4b"/><rect x="533" y="118" width="55" height="24" fill="#25235d"/><rect x="533" y="118" width="30" height="4" fill="#323865"/><rect x="533" y="118" width="3" height="16" fill="#323865"/><rect x="551" y="137" width="37" height="5" fill="#2c1b4b"/><rect x="584" y="123" width="4" height="19" fill="#2c1b4b"/><rect x="593" y="118" width="41" height="24" fill="#25235d"/><rect x="593" y="118" width="21" height="4" fill="#323865"/><rect x="593" y="118" width="3" height="16" fill="#323865"/><rect x="599" y="137" width="35" height="5" fill="#2c1b4b"/><rect x="630" y="123" width="4" height="19" fill="#2c1b4b"/><rect x="640" y="118" width="23" height="24" fill="#25235d"/><rect x="640" y="118" width="14" height="4" fill="#323865"/><rect x="640" y="118" width="3" height="16" fill="#323865"/><rect x="649" y="137" width="14" height="5" fill="#2c1b4b"/><rect x="659" y="123" width="4" height="19" fill="#2c1b4b"/><rect x="640" y="138" width="8" height="4" fill="#2c1b4b"/><rect x="669" y="118" width="44" height="24" fill="#25235d"/><rect x="669" y="118" width="30" height="4" fill="#323865"/><rect x="669" y="118" width="3" height="16" fill="#323865"/><rect x="683" y="137" width="30" height="5" fill="#2c1b4b"/><rect x="709" y="123" width="4" height="19" fill="#2c1b4b"/><rect x="717" y="118" width="50" height="24" fill="#25235d"/><rect x="717" y="118" width="40" height="4" fill="#323865"/><rect x="717" y="118" width="3" height="16" fill="#323865"/><rect x="735" y="122" width="21" height="5" fill="#323865"/><rect x="730" y="137" width="37" height="5" fill="#2c1b4b"/><rect x="763" y="123" width="4" height="19" fill="#2c1b4b"/><rect x="771" y="118" width="57" height="24" fill="#25235d"/><rect x="771" y="118" width="45" height="4" fill="#323865"/><rect x="771" y="118" width="3" height="16" fill="#323865"/><rect x="785" y="122" width="25" height="5" fill="#323865"/><rect x="785" y="137" width="43" height="5" fill="#2c1b4b"/><rect x="824" y="123" width="4" height="19" fill="#2c1b4b"/><rect x="833" y="118" width="27" height="24" fill="#25235d"/><rect x="833" y="118" width="21" height="4" fill="#323865"/><rect x="833" y="118" width="3" height="16" fill="#323865"/><rect x="838" y="122" width="7" height="5" fill="#323865"/><rect x="838" y="137" width="22" height="5" fill="#2c1b4b"/><rect x="856" y="123" width="4" height="19" fill="#2c1b4b"/><rect x="865" y="118" width="55" height="24" fill="#25235d"/><rect x="865" y="118" width="42" height="4" fill="#323865"/><rect x="865" y="118" width="3" height="16" fill="#323865"/><rect x="885" y="122" width="23" height="5" fill="#323865"/><rect x="874" y="137" width="46" height="5" fill="#2c1b4b"/><rect x="916" y="123" width="4" height="19" fill="#2c1b4b"/><rect x="-28" y="149" width="37" height="17" fill="#25235d"/><rect x="-28" y="149" width="22" height="4" fill="#323865"/><rect x="-28" y="149" width="3" height="9" fill="#323865"/><rect x="-15" y="161" width="24" height="5" fill="#2c1b4b"/><rect x="5" y="154" width="4" height="12" fill="#2c1b4b"/><rect x="15" y="149" width="31" height="17" fill="#25235d"/><rect x="15" y="149" width="25" height="4" fill="#323865"/><rect x="15" y="149" width="3" height="9" fill="#323865"/><rect x="29" y="161" width="17" height="5" fill="#2c1b4b"/><rect x="42" y="154" width="4" height="12" fill="#2c1b4b"/><rect x="51" y="149" width="61" height="17" fill="#25235d"/><rect x="51" y="149" width="40" height="4" fill="#323865"/><rect x="51" y="149" width="3" height="9" fill="#323865"/><rect x="68" y="153" width="17" height="5" fill="#323865"/><rect x="77" y="161" width="35" height="5" fill="#2c1b4b"/><rect x="108" y="154" width="4" height="12" fill="#2c1b4b"/><rect x="117" y="149" width="31" height="17" fill="#25235d"/><rect x="117" y="149" width="14" height="4" fill="#323865"/><rect x="117" y="149" width="3" height="9" fill="#323865"/><rect x="127" y="153" width="8" height="5" fill="#323865"/><rect x="127" y="161" width="21" height="5" fill="#2c1b4b"/><rect x="144" y="154" width="4" height="12" fill="#2c1b4b"/><rect x="117" y="162" width="10" height="4" fill="#2c1b4b"/><rect x="152" y="149" width="59" height="17" fill="#25235d"/><rect x="152" y="149" width="46" height="4" fill="#323865"/><rect x="152" y="149" width="3" height="9" fill="#323865"/><rect x="172" y="153" width="19" height="5" fill="#323865"/><rect x="160" y="161" width="51" height="5" fill="#2c1b4b"/><rect x="207" y="154" width="4" height="12" fill="#2c1b4b"/><rect x="152" y="162" width="20" height="4" fill="#2c1b4b"/><rect x="217" y="149" width="50" height="17" fill="#25235d"/><rect x="217" y="149" width="23" height="4" fill="#323865"/><rect x="217" y="149" width="3" height="9" fill="#323865"/><rect x="230" y="153" width="21" height="5" fill="#323865"/><rect x="223" y="161" width="44" height="5" fill="#2c1b4b"/><rect x="263" y="154" width="4" height="12" fill="#2c1b4b"/><rect x="217" y="162" width="17" height="4" fill="#2c1b4b"/><rect x="271" y="149" width="47" height="17" fill="#25235d"/><rect x="271" y="149" width="31" height="4" fill="#323865"/><rect x="271" y="149" width="3" height="9" fill="#323865"/><rect x="282" y="161" width="36" height="5" fill="#2c1b4b"/><rect x="314" y="154" width="4" height="12" fill="#2c1b4b"/><rect x="271" y="162" width="16" height="4" fill="#2c1b4b"/><rect x="322" y="149" width="26" height="17" fill="#25235d"/><rect x="322" y="149" width="13" height="4" fill="#323865"/><rect x="322" y="149" width="3" height="9" fill="#323865"/><rect x="328" y="161" width="20" height="5" fill="#2c1b4b"/><rect x="344" y="154" width="4" height="12" fill="#2c1b4b"/><rect x="354" y="149" width="29" height="17" fill="#25235d"/><rect x="354" y="149" width="18" height="4" fill="#323865"/><rect x="354" y="149" width="3" height="9" fill="#323865"/><rect x="361" y="161" width="22" height="5" fill="#2c1b4b"/><rect x="379" y="154" width="4" height="12" fill="#2c1b4b"/><rect x="354" y="162" width="10" height="4" fill="#2c1b4b"/><rect x="389" y="149" width="40" height="17" fill="#25235d"/><rect x="389" y="149" width="19" height="4" fill="#323865"/><rect x="389" y="149" width="3" height="9" fill="#323865"/><rect x="396" y="161" width="33" height="5" fill="#2c1b4b"/><rect x="425" y="154" width="4" height="12" fill="#2c1b4b"/><rect x="435" y="149" width="35" height="17" fill="#25235d"/><rect x="435" y="149" width="17" height="4" fill="#323865"/><rect x="435" y="149" width="3" height="9" fill="#323865"/><rect x="440" y="161" width="30" height="5" fill="#2c1b4b"/><rect x="466" y="154" width="4" height="12" fill="#2c1b4b"/><rect x="476" y="149" width="43" height="17" fill="#25235d"/><rect x="476" y="149" width="28" height="4" fill="#323865"/><rect x="476" y="149" width="3" height="9" fill="#323865"/><rect x="484" y="153" width="13" height="5" fill="#323865"/><rect x="496" y="161" width="23" height="5" fill="#2c1b4b"/><rect x="515" y="154" width="4" height="12" fill="#2c1b4b"/><rect x="476" y="162" width="15" height="4" fill="#2c1b4b"/><rect x="524" y="149" width="39" height="17" fill="#25235d"/><rect x="524" y="149" width="24" height="4" fill="#323865"/><rect x="524" y="149" width="3" height="9" fill="#323865"/><rect x="537" y="161" width="26" height="5" fill="#2c1b4b"/><rect x="559" y="154" width="4" height="12" fill="#2c1b4b"/><rect x="524" y="162" width="13" height="4" fill="#2c1b4b"/><rect x="569" y="149" width="28" height="17" fill="#25235d"/><rect x="569" y="149" width="19" height="4" fill="#323865"/><rect x="569" y="149" width="3" height="9" fill="#323865"/><rect x="577" y="153" width="8" height="5" fill="#323865"/><rect x="581" y="161" width="16" height="5" fill="#2c1b4b"/><rect x="593" y="154" width="4" height="12" fill="#2c1b4b"/><rect x="569" y="162" width="9" height="4" fill="#2c1b4b"/><rect x="601" y="149" width="51" height="17" fill="#25235d"/><rect x="601" y="149" width="37" height="4" fill="#323865"/><rect x="601" y="149" width="3" height="9" fill="#323865"/><rect x="609" y="153" width="22" height="5" fill="#323865"/><rect x="618" y="161" width="34" height="5" fill="#2c1b4b"/><rect x="648" y="154" width="4" height="12" fill="#2c1b4b"/><rect x="658" y="149" width="43" height="17" fill="#25235d"/><rect x="658" y="149" width="35" height="4" fill="#323865"/><rect x="658" y="149" width="3" height="9" fill="#323865"/><rect x="666" y="153" width="12" height="5" fill="#323865"/><rect x="668" y="161" width="33" height="5" fill="#2c1b4b"/><rect x="697" y="154" width="4" height="12" fill="#2c1b4b"/><rect x="658" y="162" width="15" height="4" fill="#2c1b4b"/><rect x="706" y="149" width="48" height="17" fill="#25235d"/><rect x="706" y="149" width="21" height="4" fill="#323865"/><rect x="706" y="149" width="3" height="9" fill="#323865"/><rect x="721" y="153" width="21" height="5" fill="#323865"/><rect x="715" y="161" width="39" height="5" fill="#2c1b4b"/><rect x="750" y="154" width="4" height="12" fill="#2c1b4b"/><rect x="760" y="149" width="60" height="17" fill="#25235d"/><rect x="760" y="149" width="27" height="4" fill="#323865"/><rect x="760" y="149" width="3" height="9" fill="#323865"/><rect x="774" y="153" width="22" height="5" fill="#323865"/><rect x="788" y="161" width="32" height="5" fill="#2c1b4b"/><rect x="816" y="154" width="4" height="12" fill="#2c1b4b"/><rect x="760" y="162" width="21" height="4" fill="#2c1b4b"/><rect x="826" y="149" width="54" height="17" fill="#25235d"/><rect x="826" y="149" width="41" height="4" fill="#323865"/><rect x="826" y="149" width="3" height="9" fill="#323865"/><rect x="840" y="161" width="40" height="5" fill="#2c1b4b"/><rect x="876" y="154" width="4" height="12" fill="#2c1b4b"/><rect x="826" y="162" width="18" height="4" fill="#2c1b4b"/><rect x="-34" y="171" width="41" height="22" fill="#25235d"/><rect x="-34" y="171" width="22" height="4" fill="#323865"/><rect x="-34" y="171" width="3" height="14" fill="#323865"/><rect x="-21" y="188" width="28" height="5" fill="#2c1b4b"/><rect x="3" y="176" width="4" height="17" fill="#2c1b4b"/><rect x="13" y="171" width="34" height="22" fill="#25235d"/><rect x="13" y="171" width="28" height="4" fill="#323865"/><rect x="13" y="171" width="3" height="14" fill="#323865"/><rect x="18" y="188" width="29" height="5" fill="#2c1b4b"/><rect x="43" y="176" width="4" height="17" fill="#2c1b4b"/><rect x="53" y="171" width="23" height="22" fill="#25235d"/><rect x="53" y="171" width="16" height="4" fill="#323865"/><rect x="53" y="171" width="3" height="14" fill="#323865"/><rect x="64" y="188" width="12" height="5" fill="#2c1b4b"/><rect x="72" y="176" width="4" height="17" fill="#2c1b4b"/><rect x="53" y="189" width="8" height="4" fill="#2c1b4b"/><rect x="82" y="171" width="48" height="22" fill="#25235d"/><rect x="82" y="171" width="28" height="4" fill="#323865"/><rect x="82" y="171" width="3" height="14" fill="#323865"/><rect x="99" y="175" width="14" height="5" fill="#323865"/><rect x="90" y="188" width="40" height="5" fill="#2c1b4b"/><rect x="126" y="176" width="4" height="17" fill="#2c1b4b"/><rect x="82" y="189" width="16" height="4" fill="#2c1b4b"/><rect x="136" y="171" width="30" height="22" fill="#25235d"/><rect x="136" y="171" width="24" height="4" fill="#323865"/><rect x="136" y="171" width="3" height="14" fill="#323865"/><rect x="144" y="175" width="10" height="5" fill="#323865"/><rect x="148" y="188" width="18" height="5" fill="#2c1b4b"/><rect x="162" y="176" width="4" height="17" fill="#2c1b4b"/><rect x="170" y="171" width="43" height="22" fill="#25235d"/><rect x="170" y="171" width="21" height="4" fill="#323865"/><rect x="170" y="171" width="3" height="14" fill="#323865"/><rect x="192" y="188" width="21" height="5" fill="#2c1b4b"/><rect x="209" y="176" width="4" height="17" fill="#2c1b4b"/><rect x="219" y="171" width="45" height="22" fill="#25235d"/><rect x="219" y="171" width="33" height="4" fill="#323865"/><rect x="219" y="171" width="3" height="14" fill="#323865"/><rect x="227" y="175" width="16" height="5" fill="#323865"/><rect x="227" y="188" width="37" height="5" fill="#2c1b4b"/><rect x="260" y="176" width="4" height="17" fill="#2c1b4b"/><rect x="219" y="189" width="15" height="4" fill="#2c1b4b"/><rect x="268" y="171" width="47" height="22" fill="#25235d"/><rect x="268" y="171" width="35" height="4" fill="#323865"/><rect x="268" y="171" width="3" height="14" fill="#323865"/><rect x="273" y="188" width="42" height="5" fill="#2c1b4b"/><rect x="311" y="176" width="4" height="17" fill="#2c1b4b"/><rect x="268" y="189" width="16" height="4" fill="#2c1b4b"/><rect x="319" y="171" width="46" height="22" fill="#25235d"/><rect x="319" y="171" width="31" height="4" fill="#323865"/><rect x="319" y="171" width="3" height="14" fill="#323865"/><rect x="342" y="188" width="23" height="5" fill="#2c1b4b"/><rect x="361" y="176" width="4" height="17" fill="#2c1b4b"/><rect x="319" y="189" width="16" height="4" fill="#2c1b4b"/><rect x="371" y="171" width="51" height="22" fill="#25235d"/><rect x="371" y="171" width="25" height="4" fill="#323865"/><rect x="371" y="171" width="3" height="14" fill="#323865"/><rect x="385" y="175" width="14" height="5" fill="#323865"/><rect x="386" y="188" width="36" height="5" fill="#2c1b4b"/><rect x="418" y="176" width="4" height="17" fill="#2c1b4b"/><rect x="371" y="189" width="17" height="4" fill="#2c1b4b"/><rect x="426" y="171" width="58" height="22" fill="#25235d"/><rect x="426" y="171" width="27" height="4" fill="#323865"/><rect x="426" y="171" width="3" height="14" fill="#323865"/><rect x="439" y="188" width="45" height="5" fill="#2c1b4b"/><rect x="480" y="176" width="4" height="17" fill="#2c1b4b"/><rect x="489" y="171" width="47" height="22" fill="#25235d"/><rect x="489" y="171" width="32" height="4" fill="#323865"/><rect x="489" y="171" width="3" height="14" fill="#323865"/><rect x="500" y="175" width="17" height="5" fill="#323865"/><rect x="500" y="188" width="36" height="5" fill="#2c1b4b"/><rect x="532" y="176" width="4" height="17" fill="#2c1b4b"/><rect x="541" y="171" width="40" height="22" fill="#25235d"/><rect x="541" y="171" width="32" height="4" fill="#323865"/><rect x="541" y="171" width="3" height="14" fill="#323865"/><rect x="556" y="175" width="15" height="5" fill="#323865"/><rect x="548" y="188" width="33" height="5" fill="#2c1b4b"/><rect x="577" y="176" width="4" height="17" fill="#2c1b4b"/><rect x="541" y="189" width="14" height="4" fill="#2c1b4b"/><rect x="586" y="171" width="29" height="22" fill="#25235d"/><rect x="586" y="171" width="16" height="4" fill="#323865"/><rect x="586" y="171" width="3" height="14" fill="#323865"/><rect x="593" y="175" width="7" height="5" fill="#323865"/><rect x="590" y="188" width="25" height="5" fill="#2c1b4b"/><rect x="611" y="176" width="4" height="17" fill="#2c1b4b"/><rect x="586" y="189" width="10" height="4" fill="#2c1b4b"/><rect x="621" y="171" width="61" height="22" fill="#25235d"/><rect x="621" y="171" width="45" height="4" fill="#323865"/><rect x="621" y="171" width="3" height="14" fill="#323865"/><rect x="634" y="188" width="48" height="5" fill="#2c1b4b"/><rect x="678" y="176" width="4" height="17" fill="#2c1b4b"/><rect x="621" y="189" width="21" height="4" fill="#2c1b4b"/><rect x="687" y="171" width="59" height="22" fill="#25235d"/><rect x="687" y="171" width="32" height="4" fill="#323865"/><rect x="687" y="171" width="3" height="14" fill="#323865"/><rect x="711" y="188" width="35" height="5" fill="#2c1b4b"/><rect x="742" y="176" width="4" height="17" fill="#2c1b4b"/><rect x="750" y="171" width="25" height="22" fill="#25235d"/><rect x="750" y="171" width="18" height="4" fill="#323865"/><rect x="750" y="171" width="3" height="14" fill="#323865"/><rect x="755" y="175" width="7" height="5" fill="#323865"/><rect x="759" y="188" width="16" height="5" fill="#2c1b4b"/><rect x="771" y="176" width="4" height="17" fill="#2c1b4b"/><rect x="750" y="189" width="8" height="4" fill="#2c1b4b"/><rect x="780" y="171" width="26" height="22" fill="#25235d"/><rect x="780" y="171" width="21" height="4" fill="#323865"/><rect x="780" y="171" width="3" height="14" fill="#323865"/><rect x="784" y="188" width="22" height="5" fill="#2c1b4b"/><rect x="802" y="176" width="4" height="17" fill="#2c1b4b"/><rect x="780" y="189" width="9" height="4" fill="#2c1b4b"/><rect x="812" y="171" width="32" height="22" fill="#25235d"/><rect x="812" y="171" width="22" height="4" fill="#323865"/><rect x="812" y="171" width="3" height="14" fill="#323865"/><rect x="817" y="175" width="8" height="5" fill="#323865"/><rect x="822" y="188" width="22" height="5" fill="#2c1b4b"/><rect x="840" y="176" width="4" height="17" fill="#2c1b4b"/><rect x="812" y="189" width="11" height="4" fill="#2c1b4b"/><rect x="848" y="171" width="56" height="22" fill="#25235d"/><rect x="848" y="171" width="46" height="4" fill="#323865"/><rect x="848" y="171" width="3" height="14" fill="#323865"/><rect x="859" y="175" width="17" height="5" fill="#323865"/><rect x="869" y="188" width="35" height="5" fill="#2c1b4b"/><rect x="900" y="176" width="4" height="17" fill="#2c1b4b"/><rect x="848" y="189" width="19" height="4" fill="#2c1b4b"/><rect x="-28" y="198" width="55" height="22" fill="#25235d"/><rect x="-28" y="198" width="27" height="4" fill="#323865"/><rect x="-28" y="198" width="3" height="14" fill="#323865"/><rect x="-5" y="215" width="32" height="5" fill="#2c1b4b"/><rect x="23" y="203" width="4" height="17" fill="#2c1b4b"/><rect x="-28" y="216" width="19" height="4" fill="#2c1b4b"/><rect x="32" y="198" width="51" height="22" fill="#25235d"/><rect x="32" y="198" width="29" height="4" fill="#323865"/><rect x="32" y="198" width="3" height="14" fill="#323865"/><rect x="51" y="202" width="22" height="5" fill="#323865"/><rect x="48" y="215" width="35" height="5" fill="#2c1b4b"/><rect x="79" y="203" width="4" height="17" fill="#2c1b4b"/><rect x="32" y="216" width="17" height="4" fill="#2c1b4b"/><rect x="88" y="198" width="40" height="22" fill="#25235d"/><rect x="88" y="198" width="32" height="4" fill="#323865"/><rect x="88" y="198" width="3" height="14" fill="#323865"/><rect x="102" y="202" width="12" height="5" fill="#323865"/><rect x="101" y="215" width="27" height="5" fill="#2c1b4b"/><rect x="124" y="203" width="4" height="17" fill="#2c1b4b"/><rect x="88" y="216" width="14" height="4" fill="#2c1b4b"/><rect x="134" y="198" width="57" height="22" fill="#25235d"/><rect x="134" y="198" width="37" height="4" fill="#323865"/><rect x="134" y="198" width="3" height="14" fill="#323865"/><rect x="156" y="202" width="25" height="5" fill="#323865"/><rect x="148" y="215" width="43" height="5" fill="#2c1b4b"/><rect x="187" y="203" width="4" height="17" fill="#2c1b4b"/><rect x="134" y="216" width="19" height="4" fill="#2c1b4b"/><rect x="195" y="198" width="42" height="22" fill="#25235d"/><rect x="195" y="198" width="33" height="4" fill="#323865"/><rect x="195" y="198" width="3" height="14" fill="#323865"/><rect x="214" y="215" width="23" height="5" fill="#2c1b4b"/><rect x="233" y="203" width="4" height="17" fill="#2c1b4b"/><rect x="242" y="198" width="50" height="22" fill="#25235d"/><rect x="242" y="198" width="24" height="4" fill="#323865"/><rect x="242" y="198" width="3" height="14" fill="#323865"/><rect x="253" y="202" width="19" height="5" fill="#323865"/><rect x="264" y="215" width="28" height="5" fill="#2c1b4b"/><rect x="288" y="203" width="4" height="17" fill="#2c1b4b"/><rect x="242" y="216" width="17" height="4" fill="#2c1b4b"/><rect x="297" y="198" width="37" height="22" fill="#25235d"/><rect x="297" y="198" width="26" height="4" fill="#323865"/><rect x="297" y="198" width="3" height="14" fill="#323865"/><rect x="310" y="215" width="24" height="5" fill="#2c1b4b"/><rect x="330" y="203" width="4" height="17" fill="#2c1b4b"/><rect x="340" y="198" width="29" height="22" fill="#25235d"/><rect x="340" y="198" width="19" height="4" fill="#323865"/><rect x="340" y="198" width="3" height="14" fill="#323865"/><rect x="345" y="215" width="24" height="5" fill="#2c1b4b"/><rect x="365" y="203" width="4" height="17" fill="#2c1b4b"/><rect x="340" y="216" width="10" height="4" fill="#2c1b4b"/><rect x="375" y="198" width="36" height="22" fill="#25235d"/><rect x="375" y="198" width="18" height="4" fill="#323865"/><rect x="375" y="198" width="3" height="14" fill="#323865"/><rect x="387" y="215" width="24" height="5" fill="#2c1b4b"/><rect x="407" y="203" width="4" height="17" fill="#2c1b4b"/><rect x="375" y="216" width="12" height="4" fill="#2c1b4b"/><rect x="416" y="198" width="55" height="22" fill="#25235d"/><rect x="416" y="198" width="36" height="4" fill="#323865"/><rect x="416" y="198" width="3" height="14" fill="#323865"/><rect x="432" y="202" width="16" height="5" fill="#323865"/><rect x="438" y="215" width="33" height="5" fill="#2c1b4b"/><rect x="467" y="203" width="4" height="17" fill="#2c1b4b"/><rect x="475" y="198" width="27" height="22" fill="#25235d"/><rect x="475" y="198" width="15" height="4" fill="#323865"/><rect x="475" y="198" width="3" height="14" fill="#323865"/><rect x="486" y="215" width="16" height="5" fill="#2c1b4b"/><rect x="498" y="203" width="4" height="17" fill="#2c1b4b"/><rect x="475" y="216" width="9" height="4" fill="#2c1b4b"/><rect x="506" y="198" width="57" height="22" fill="#25235d"/><rect x="506" y="198" width="29" height="4" fill="#323865"/><rect x="506" y="198" width="3" height="14" fill="#323865"/><rect x="512" y="215" width="51" height="5" fill="#2c1b4b"/><rect x="559" y="203" width="4" height="17" fill="#2c1b4b"/><rect x="506" y="216" width="19" height="4" fill="#2c1b4b"/><rect x="567" y="198" width="51" height="22" fill="#25235d"/><rect x="567" y="198" width="30" height="4" fill="#323865"/><rect x="567" y="198" width="3" height="14" fill="#323865"/><rect x="583" y="215" width="35" height="5" fill="#2c1b4b"/><rect x="614" y="203" width="4" height="17" fill="#2c1b4b"/><rect x="567" y="216" width="17" height="4" fill="#2c1b4b"/><rect x="624" y="198" width="57" height="22" fill="#25235d"/><rect x="624" y="198" width="46" height="4" fill="#323865"/><rect x="624" y="198" width="3" height="14" fill="#323865"/><rect x="639" y="202" width="14" height="5" fill="#323865"/><rect x="646" y="215" width="35" height="5" fill="#2c1b4b"/><rect x="677" y="203" width="4" height="17" fill="#2c1b4b"/><rect x="687" y="198" width="62" height="22" fill="#25235d"/><rect x="687" y="198" width="52" height="4" fill="#323865"/><rect x="687" y="198" width="3" height="14" fill="#323865"/><rect x="705" y="215" width="44" height="5" fill="#2c1b4b"/><rect x="745" y="203" width="4" height="17" fill="#2c1b4b"/><rect x="755" y="198" width="32" height="22" fill="#25235d"/><rect x="755" y="198" width="22" height="4" fill="#323865"/><rect x="755" y="198" width="3" height="14" fill="#323865"/><rect x="763" y="202" width="12" height="5" fill="#323865"/><rect x="761" y="215" width="26" height="5" fill="#2c1b4b"/><rect x="783" y="203" width="4" height="17" fill="#2c1b4b"/><rect x="791" y="198" width="37" height="22" fill="#25235d"/><rect x="791" y="198" width="23" height="4" fill="#323865"/><rect x="791" y="198" width="3" height="14" fill="#323865"/><rect x="801" y="202" width="12" height="5" fill="#323865"/><rect x="809" y="215" width="19" height="5" fill="#2c1b4b"/><rect x="824" y="203" width="4" height="17" fill="#2c1b4b"/><rect x="833" y="198" width="25" height="22" fill="#25235d"/><rect x="833" y="198" width="15" height="4" fill="#323865"/><rect x="833" y="198" width="3" height="14" fill="#323865"/><rect x="843" y="215" width="15" height="5" fill="#2c1b4b"/><rect x="854" y="203" width="4" height="17" fill="#2c1b4b"/><rect x="864" y="198" width="60" height="22" fill="#25235d"/><rect x="864" y="198" width="46" height="4" fill="#323865"/><rect x="864" y="198" width="3" height="14" fill="#323865"/><rect x="883" y="202" width="25" height="5" fill="#323865"/><rect x="894" y="215" width="30" height="5" fill="#2c1b4b"/><rect x="920" y="203" width="4" height="17" fill="#2c1b4b"/><rect x="864" y="216" width="21" height="4" fill="#2c1b4b"/><rect x="-11" y="227" width="58" height="25" fill="#25235d"/><rect x="-11" y="227" width="38" height="4" fill="#323865"/><rect x="-11" y="227" width="3" height="17" fill="#323865"/><rect x="13" y="247" width="34" height="5" fill="#2c1b4b"/><rect x="43" y="232" width="4" height="20" fill="#2c1b4b"/><rect x="-11" y="248" width="20" height="4" fill="#2c1b4b"/><rect x="53" y="227" width="41" height="25" fill="#25235d"/><rect x="53" y="227" width="19" height="4" fill="#323865"/><rect x="53" y="227" width="3" height="17" fill="#323865"/><rect x="65" y="231" width="14" height="5" fill="#323865"/><rect x="70" y="247" width="24" height="5" fill="#2c1b4b"/><rect x="90" y="232" width="4" height="20" fill="#2c1b4b"/><rect x="99" y="227" width="27" height="25" fill="#25235d"/><rect x="99" y="227" width="21" height="4" fill="#323865"/><rect x="99" y="227" width="3" height="17" fill="#323865"/><rect x="104" y="231" width="7" height="5" fill="#323865"/><rect x="106" y="247" width="20" height="5" fill="#2c1b4b"/><rect x="122" y="232" width="4" height="20" fill="#2c1b4b"/><rect x="132" y="227" width="51" height="25" fill="#25235d"/><rect x="132" y="227" width="29" height="4" fill="#323865"/><rect x="132" y="227" width="3" height="17" fill="#323865"/><rect x="148" y="231" width="19" height="5" fill="#323865"/><rect x="138" y="247" width="45" height="5" fill="#2c1b4b"/><rect x="179" y="232" width="4" height="20" fill="#2c1b4b"/><rect x="132" y="248" width="17" height="4" fill="#2c1b4b"/><rect x="187" y="227" width="60" height="25" fill="#25235d"/><rect x="187" y="227" width="30" height="4" fill="#323865"/><rect x="187" y="227" width="3" height="17" fill="#323865"/><rect x="207" y="231" width="15" height="5" fill="#323865"/><rect x="212" y="247" width="35" height="5" fill="#2c1b4b"/><rect x="243" y="232" width="4" height="20" fill="#2c1b4b"/><rect x="251" y="227" width="31" height="25" fill="#25235d"/><rect x="251" y="227" width="18" height="4" fill="#323865"/><rect x="251" y="227" width="3" height="17" fill="#323865"/><rect x="258" y="231" width="8" height="5" fill="#323865"/><rect x="267" y="247" width="15" height="5" fill="#2c1b4b"/><rect x="278" y="232" width="4" height="20" fill="#2c1b4b"/><rect x="286" y="227" width="61" height="25" fill="#25235d"/><rect x="286" y="227" width="34" height="4" fill="#323865"/><rect x="286" y="227" width="3" height="17" fill="#323865"/><rect x="308" y="231" width="20" height="5" fill="#323865"/><rect x="315" y="247" width="32" height="5" fill="#2c1b4b"/><rect x="343" y="232" width="4" height="20" fill="#2c1b4b"/><rect x="286" y="248" width="21" height="4" fill="#2c1b4b"/><rect x="351" y="227" width="41" height="25" fill="#25235d"/><rect x="351" y="227" width="33" height="4" fill="#323865"/><rect x="351" y="227" width="3" height="17" fill="#323865"/><rect x="368" y="247" width="24" height="5" fill="#2c1b4b"/><rect x="388" y="232" width="4" height="20" fill="#2c1b4b"/><rect x="351" y="248" width="14" height="4" fill="#2c1b4b"/><rect x="397" y="227" width="59" height="25" fill="#25235d"/><rect x="397" y="227" width="50" height="4" fill="#323865"/><rect x="397" y="227" width="3" height="17" fill="#323865"/><rect x="414" y="247" width="42" height="5" fill="#2c1b4b"/><rect x="452" y="232" width="4" height="20" fill="#2c1b4b"/><rect x="462" y="227" width="59" height="25" fill="#25235d"/><rect x="462" y="227" width="37" height="4" fill="#323865"/><rect x="462" y="227" width="3" height="17" fill="#323865"/><rect x="483" y="231" width="19" height="5" fill="#323865"/><rect x="474" y="247" width="47" height="5" fill="#2c1b4b"/><rect x="517" y="232" width="4" height="20" fill="#2c1b4b"/><rect x="462" y="248" width="20" height="4" fill="#2c1b4b"/><rect x="525" y="227" width="44" height="25" fill="#25235d"/><rect x="525" y="227" width="23" height="4" fill="#323865"/><rect x="525" y="227" width="3" height="17" fill="#323865"/><rect x="533" y="231" width="12" height="5" fill="#323865"/><rect x="544" y="247" width="25" height="5" fill="#2c1b4b"/><rect x="565" y="232" width="4" height="20" fill="#2c1b4b"/><rect x="525" y="248" width="15" height="4" fill="#2c1b4b"/><rect x="573" y="227" width="41" height="25" fill="#25235d"/><rect x="573" y="227" width="25" height="4" fill="#323865"/><rect x="573" y="227" width="3" height="17" fill="#323865"/><rect x="583" y="247" width="31" height="5" fill="#2c1b4b"/><rect x="610" y="232" width="4" height="20" fill="#2c1b4b"/><rect x="619" y="227" width="35" height="25" fill="#25235d"/><rect x="619" y="227" width="21" height="4" fill="#323865"/><rect x="619" y="227" width="3" height="17" fill="#323865"/><rect x="630" y="231" width="11" height="5" fill="#323865"/><rect x="633" y="247" width="21" height="5" fill="#2c1b4b"/><rect x="650" y="232" width="4" height="20" fill="#2c1b4b"/><rect x="619" y="248" width="12" height="4" fill="#2c1b4b"/><rect x="660" y="227" width="33" height="25" fill="#25235d"/><rect x="660" y="227" width="18" height="4" fill="#323865"/><rect x="660" y="227" width="3" height="17" fill="#323865"/><rect x="672" y="231" width="12" height="5" fill="#323865"/><rect x="673" y="247" width="20" height="5" fill="#2c1b4b"/><rect x="689" y="232" width="4" height="20" fill="#2c1b4b"/><rect x="660" y="248" width="11" height="4" fill="#2c1b4b"/><rect x="699" y="227" width="31" height="25" fill="#25235d"/><rect x="699" y="227" width="25" height="4" fill="#323865"/><rect x="699" y="227" width="3" height="17" fill="#323865"/><rect x="709" y="231" width="12" height="5" fill="#323865"/><rect x="704" y="247" width="26" height="5" fill="#2c1b4b"/><rect x="726" y="232" width="4" height="20" fill="#2c1b4b"/><rect x="699" y="248" width="10" height="4" fill="#2c1b4b"/><rect x="736" y="227" width="42" height="25" fill="#25235d"/><rect x="736" y="227" width="26" height="4" fill="#323865"/><rect x="736" y="227" width="3" height="17" fill="#323865"/><rect x="751" y="247" width="27" height="5" fill="#2c1b4b"/><rect x="774" y="232" width="4" height="20" fill="#2c1b4b"/><rect x="736" y="248" width="14" height="4" fill="#2c1b4b"/><rect x="783" y="227" width="55" height="25" fill="#25235d"/><rect x="783" y="227" width="25" height="4" fill="#323865"/><rect x="783" y="227" width="3" height="17" fill="#323865"/><rect x="794" y="231" width="14" height="5" fill="#323865"/><rect x="808" y="247" width="30" height="5" fill="#2c1b4b"/><rect x="834" y="232" width="4" height="20" fill="#2c1b4b"/><rect x="844" y="227" width="24" height="25" fill="#25235d"/><rect x="844" y="227" width="13" height="4" fill="#323865"/><rect x="844" y="227" width="3" height="17" fill="#323865"/><rect x="850" y="231" width="6" height="5" fill="#323865"/><rect x="850" y="247" width="18" height="5" fill="#2c1b4b"/><rect x="864" y="232" width="4" height="20" fill="#2c1b4b"/><rect x="844" y="248" width="8" height="4" fill="#2c1b4b"/><rect x="872" y="227" width="50" height="25" fill="#25235d"/><rect x="872" y="227" width="30" height="4" fill="#323865"/><rect x="872" y="227" width="3" height="17" fill="#323865"/><rect x="881" y="247" width="41" height="5" fill="#2c1b4b"/><rect x="918" y="232" width="4" height="20" fill="#2c1b4b"/><rect x="-28" y="257" width="47" height="21" fill="#25235d"/><rect x="-28" y="257" width="28" height="4" fill="#323865"/><rect x="-28" y="257" width="3" height="13" fill="#323865"/><rect x="-8" y="273" width="27" height="5" fill="#2c1b4b"/><rect x="15" y="262" width="4" height="16" fill="#2c1b4b"/><rect x="-28" y="274" width="16" height="4" fill="#2c1b4b"/><rect x="23" y="257" width="44" height="21" fill="#25235d"/><rect x="23" y="257" width="23" height="4" fill="#323865"/><rect x="23" y="257" width="3" height="13" fill="#323865"/><rect x="29" y="261" width="16" height="5" fill="#323865"/><rect x="36" y="273" width="31" height="5" fill="#2c1b4b"/><rect x="63" y="262" width="4" height="16" fill="#2c1b4b"/><rect x="73" y="257" width="41" height="21" fill="#25235d"/><rect x="73" y="257" width="29" height="4" fill="#323865"/><rect x="73" y="257" width="3" height="13" fill="#323865"/><rect x="90" y="273" width="24" height="5" fill="#2c1b4b"/><rect x="110" y="262" width="4" height="16" fill="#2c1b4b"/><rect x="120" y="257" width="29" height="21" fill="#25235d"/><rect x="120" y="257" width="15" height="4" fill="#323865"/><rect x="120" y="257" width="3" height="13" fill="#323865"/><rect x="134" y="273" width="15" height="5" fill="#2c1b4b"/><rect x="145" y="262" width="4" height="16" fill="#2c1b4b"/><rect x="120" y="274" width="10" height="4" fill="#2c1b4b"/><rect x="154" y="257" width="47" height="21" fill="#25235d"/><rect x="154" y="257" width="22" height="4" fill="#323865"/><rect x="154" y="257" width="3" height="13" fill="#323865"/><rect x="164" y="261" width="16" height="5" fill="#323865"/><rect x="173" y="273" width="28" height="5" fill="#2c1b4b"/><rect x="197" y="262" width="4" height="16" fill="#2c1b4b"/><rect x="154" y="274" width="16" height="4" fill="#2c1b4b"/><rect x="206" y="257" width="47" height="21" fill="#25235d"/><rect x="206" y="257" width="30" height="4" fill="#323865"/><rect x="206" y="257" width="3" height="13" fill="#323865"/><rect x="220" y="261" width="14" height="5" fill="#323865"/><rect x="228" y="273" width="25" height="5" fill="#2c1b4b"/><rect x="249" y="262" width="4" height="16" fill="#2c1b4b"/><rect x="206" y="274" width="16" height="4" fill="#2c1b4b"/><rect x="257" y="257" width="49" height="21" fill="#25235d"/><rect x="257" y="257" width="31" height="4" fill="#323865"/><rect x="257" y="257" width="3" height="13" fill="#323865"/><rect x="274" y="261" width="15" height="5" fill="#323865"/><rect x="264" y="273" width="42" height="5" fill="#2c1b4b"/><rect x="302" y="262" width="4" height="16" fill="#2c1b4b"/><rect x="310" y="257" width="29" height="21" fill="#25235d"/><rect x="310" y="257" width="23" height="4" fill="#323865"/><rect x="310" y="257" width="3" height="13" fill="#323865"/><rect x="322" y="273" width="17" height="5" fill="#2c1b4b"/><rect x="335" y="262" width="4" height="16" fill="#2c1b4b"/><rect x="310" y="274" width="10" height="4" fill="#2c1b4b"/><rect x="344" y="257" width="59" height="21" fill="#25235d"/><rect x="344" y="257" width="37" height="4" fill="#323865"/><rect x="344" y="257" width="3" height="13" fill="#323865"/><rect x="356" y="261" width="15" height="5" fill="#323865"/><rect x="366" y="273" width="37" height="5" fill="#2c1b4b"/><rect x="399" y="262" width="4" height="16" fill="#2c1b4b"/><rect x="408" y="257" width="58" height="21" fill="#25235d"/><rect x="408" y="257" width="32" height="4" fill="#323865"/><rect x="408" y="257" width="3" height="13" fill="#323865"/><rect x="433" y="273" width="33" height="5" fill="#2c1b4b"/><rect x="462" y="262" width="4" height="16" fill="#2c1b4b"/><rect x="408" y="274" width="20" height="4" fill="#2c1b4b"/><rect x="471" y="257" width="61" height="21" fill="#25235d"/><rect x="471" y="257" width="50" height="4" fill="#323865"/><rect x="471" y="257" width="3" height="13" fill="#323865"/><rect x="488" y="261" width="26" height="5" fill="#323865"/><rect x="483" y="273" width="49" height="5" fill="#2c1b4b"/><rect x="528" y="262" width="4" height="16" fill="#2c1b4b"/><rect x="537" y="257" width="61" height="21" fill="#25235d"/><rect x="537" y="257" width="37" height="4" fill="#323865"/><rect x="537" y="257" width="3" height="13" fill="#323865"/><rect x="550" y="261" width="25" height="5" fill="#323865"/><rect x="547" y="273" width="51" height="5" fill="#2c1b4b"/><rect x="594" y="262" width="4" height="16" fill="#2c1b4b"/><rect x="537" y="274" width="21" height="4" fill="#2c1b4b"/><rect x="604" y="257" width="46" height="21" fill="#25235d"/><rect x="604" y="257" width="35" height="4" fill="#323865"/><rect x="604" y="257" width="3" height="13" fill="#323865"/><rect x="622" y="273" width="28" height="5" fill="#2c1b4b"/><rect x="646" y="262" width="4" height="16" fill="#2c1b4b"/><rect x="604" y="274" width="16" height="4" fill="#2c1b4b"/><rect x="654" y="257" width="52" height="21" fill="#25235d"/><rect x="654" y="257" width="26" height="4" fill="#323865"/><rect x="654" y="257" width="3" height="13" fill="#323865"/><rect x="664" y="261" width="20" height="5" fill="#323865"/><rect x="676" y="273" width="30" height="5" fill="#2c1b4b"/><rect x="702" y="262" width="4" height="16" fill="#2c1b4b"/><rect x="654" y="274" width="18" height="4" fill="#2c1b4b"/><rect x="710" y="257" width="56" height="21" fill="#25235d"/><rect x="710" y="257" width="25" height="4" fill="#323865"/><rect x="710" y="257" width="3" height="13" fill="#323865"/><rect x="730" y="261" width="22" height="5" fill="#323865"/><rect x="737" y="273" width="29" height="5" fill="#2c1b4b"/><rect x="762" y="262" width="4" height="16" fill="#2c1b4b"/><rect x="771" y="257" width="43" height="21" fill="#25235d"/><rect x="771" y="257" width="25" height="4" fill="#323865"/><rect x="771" y="257" width="3" height="13" fill="#323865"/><rect x="788" y="273" width="26" height="5" fill="#2c1b4b"/><rect x="810" y="262" width="4" height="16" fill="#2c1b4b"/><rect x="819" y="257" width="47" height="21" fill="#25235d"/><rect x="819" y="257" width="24" height="4" fill="#323865"/><rect x="819" y="257" width="3" height="13" fill="#323865"/><rect x="827" y="261" width="14" height="5" fill="#323865"/><rect x="830" y="273" width="36" height="5" fill="#2c1b4b"/><rect x="862" y="262" width="4" height="16" fill="#2c1b4b"/><rect x="872" y="257" width="40" height="21" fill="#25235d"/><rect x="872" y="257" width="24" height="4" fill="#323865"/><rect x="872" y="257" width="3" height="13" fill="#323865"/><rect x="884" y="261" width="13" height="5" fill="#323865"/><rect x="882" y="273" width="30" height="5" fill="#2c1b4b"/><rect x="908" y="262" width="4" height="16" fill="#2c1b4b"/><rect x="872" y="274" width="14" height="4" fill="#2c1b4b"/><rect x="-11" y="283" width="54" height="20" fill="#25235d"/><rect x="-11" y="283" width="27" height="4" fill="#323865"/><rect x="-11" y="283" width="3" height="12" fill="#323865"/><rect x="-2" y="287" width="14" height="5" fill="#323865"/><rect x="1" y="298" width="42" height="5" fill="#2c1b4b"/><rect x="39" y="288" width="4" height="15" fill="#2c1b4b"/><rect x="-11" y="299" width="18" height="4" fill="#2c1b4b"/><rect x="49" y="283" width="50" height="20" fill="#25235d"/><rect x="49" y="283" width="37" height="4" fill="#323865"/><rect x="49" y="283" width="3" height="12" fill="#323865"/><rect x="58" y="287" width="21" height="5" fill="#323865"/><rect x="57" y="298" width="42" height="5" fill="#2c1b4b"/><rect x="95" y="288" width="4" height="15" fill="#2c1b4b"/><rect x="49" y="299" width="17" height="4" fill="#2c1b4b"/><rect x="105" y="283" width="38" height="20" fill="#25235d"/><rect x="105" y="283" width="24" height="4" fill="#323865"/><rect x="105" y="283" width="3" height="12" fill="#323865"/><rect x="119" y="298" width="24" height="5" fill="#2c1b4b"/><rect x="139" y="288" width="4" height="15" fill="#2c1b4b"/><rect x="148" y="283" width="38" height="20" fill="#25235d"/><rect x="148" y="283" width="27" height="4" fill="#323865"/><rect x="148" y="283" width="3" height="12" fill="#323865"/><rect x="156" y="287" width="15" height="5" fill="#323865"/><rect x="155" y="298" width="31" height="5" fill="#2c1b4b"/><rect x="182" y="288" width="4" height="15" fill="#2c1b4b"/><rect x="191" y="283" width="58" height="20" fill="#25235d"/><rect x="191" y="283" width="40" height="4" fill="#323865"/><rect x="191" y="283" width="3" height="12" fill="#323865"/><rect x="210" y="287" width="17" height="5" fill="#323865"/><rect x="217" y="298" width="32" height="5" fill="#2c1b4b"/><rect x="245" y="288" width="4" height="15" fill="#2c1b4b"/><rect x="191" y="299" width="20" height="4" fill="#2c1b4b"/><rect x="254" y="283" width="61" height="20" fill="#25235d"/><rect x="254" y="283" width="34" height="4" fill="#323865"/><rect x="254" y="283" width="3" height="12" fill="#323865"/><rect x="261" y="298" width="54" height="5" fill="#2c1b4b"/><rect x="311" y="288" width="4" height="15" fill="#2c1b4b"/><rect x="254" y="299" width="21" height="4" fill="#2c1b4b"/><rect x="321" y="283" width="30" height="20" fill="#25235d"/><rect x="321" y="283" width="21" height="4" fill="#323865"/><rect x="321" y="283" width="3" height="12" fill="#323865"/><rect x="330" y="287" width="9" height="5" fill="#323865"/><rect x="325" y="298" width="26" height="5" fill="#2c1b4b"/><rect x="347" y="288" width="4" height="15" fill="#2c1b4b"/><rect x="356" y="283" width="25" height="20" fill="#25235d"/><rect x="356" y="283" width="18" height="4" fill="#323865"/><rect x="356" y="283" width="3" height="12" fill="#323865"/><rect x="360" y="287" width="7" height="5" fill="#323865"/><rect x="362" y="298" width="19" height="5" fill="#2c1b4b"/><rect x="377" y="288" width="4" height="15" fill="#2c1b4b"/><rect x="385" y="283" width="29" height="20" fill="#25235d"/><rect x="385" y="283" width="16" height="4" fill="#323865"/><rect x="385" y="283" width="3" height="12" fill="#323865"/><rect x="393" y="287" width="10" height="5" fill="#323865"/><rect x="396" y="298" width="18" height="5" fill="#2c1b4b"/><rect x="410" y="288" width="4" height="15" fill="#2c1b4b"/><rect x="385" y="299" width="10" height="4" fill="#2c1b4b"/><rect x="419" y="283" width="40" height="20" fill="#25235d"/><rect x="419" y="283" width="24" height="4" fill="#323865"/><rect x="419" y="283" width="3" height="12" fill="#323865"/><rect x="427" y="298" width="32" height="5" fill="#2c1b4b"/><rect x="455" y="288" width="4" height="15" fill="#2c1b4b"/><rect x="463" y="283" width="46" height="20" fill="#25235d"/><rect x="463" y="283" width="33" height="4" fill="#323865"/><rect x="463" y="283" width="3" height="12" fill="#323865"/><rect x="479" y="287" width="12" height="5" fill="#323865"/><rect x="483" y="298" width="26" height="5" fill="#2c1b4b"/><rect x="505" y="288" width="4" height="15" fill="#2c1b4b"/><rect x="463" y="299" width="16" height="4" fill="#2c1b4b"/><rect x="515" y="283" width="38" height="20" fill="#25235d"/><rect x="515" y="283" width="23" height="4" fill="#323865"/><rect x="515" y="283" width="3" height="12" fill="#323865"/><rect x="529" y="287" width="11" height="5" fill="#323865"/><rect x="526" y="298" width="27" height="5" fill="#2c1b4b"/><rect x="549" y="288" width="4" height="15" fill="#2c1b4b"/><rect x="515" y="299" width="13" height="4" fill="#2c1b4b"/><rect x="558" y="283" width="47" height="20" fill="#25235d"/><rect x="558" y="283" width="27" height="4" fill="#323865"/><rect x="558" y="283" width="3" height="12" fill="#323865"/><rect x="567" y="287" width="16" height="5" fill="#323865"/><rect x="571" y="298" width="34" height="5" fill="#2c1b4b"/><rect x="601" y="288" width="4" height="15" fill="#2c1b4b"/><rect x="558" y="299" width="16" height="4" fill="#2c1b4b"/><rect x="610" y="283" width="22" height="20" fill="#25235d"/><rect x="610" y="283" width="15" height="4" fill="#323865"/><rect x="610" y="283" width="3" height="12" fill="#323865"/><rect x="615" y="287" width="6" height="5" fill="#323865"/><rect x="615" y="298" width="17" height="5" fill="#2c1b4b"/><rect x="628" y="288" width="4" height="15" fill="#2c1b4b"/><rect x="637" y="283" width="48" height="20" fill="#25235d"/><rect x="637" y="283" width="22" height="4" fill="#323865"/><rect x="637" y="283" width="3" height="12" fill="#323865"/><rect x="650" y="287" width="17" height="5" fill="#323865"/><rect x="657" y="298" width="28" height="5" fill="#2c1b4b"/><rect x="681" y="288" width="4" height="15" fill="#2c1b4b"/><rect x="690" y="283" width="61" height="20" fill="#25235d"/><rect x="690" y="283" width="34" height="4" fill="#323865"/><rect x="690" y="283" width="3" height="12" fill="#323865"/><rect x="700" y="298" width="51" height="5" fill="#2c1b4b"/><rect x="747" y="288" width="4" height="15" fill="#2c1b4b"/><rect x="756" y="283" width="50" height="20" fill="#25235d"/><rect x="756" y="283" width="39" height="4" fill="#323865"/><rect x="756" y="283" width="3" height="12" fill="#323865"/><rect x="778" y="298" width="28" height="5" fill="#2c1b4b"/><rect x="802" y="288" width="4" height="15" fill="#2c1b4b"/><rect x="756" y="299" width="17" height="4" fill="#2c1b4b"/><rect x="812" y="283" width="32" height="20" fill="#25235d"/><rect x="812" y="283" width="15" height="4" fill="#323865"/><rect x="812" y="283" width="3" height="12" fill="#323865"/><rect x="819" y="287" width="12" height="5" fill="#323865"/><rect x="825" y="298" width="19" height="5" fill="#2c1b4b"/><rect x="840" y="288" width="4" height="15" fill="#2c1b4b"/><rect x="850" y="283" width="22" height="20" fill="#25235d"/><rect x="850" y="283" width="10" height="4" fill="#323865"/><rect x="850" y="283" width="3" height="12" fill="#323865"/><rect x="857" y="287" width="6" height="5" fill="#323865"/><rect x="859" y="298" width="13" height="5" fill="#2c1b4b"/><rect x="868" y="288" width="4" height="15" fill="#2c1b4b"/><rect x="-31" y="308" width="47" height="25" fill="#25235d"/><rect x="-31" y="308" width="36" height="4" fill="#323865"/><rect x="-31" y="308" width="3" height="17" fill="#323865"/><rect x="-21" y="328" width="37" height="5" fill="#2c1b4b"/><rect x="12" y="313" width="4" height="20" fill="#2c1b4b"/><rect x="21" y="308" width="28" height="25" fill="#25235d"/><rect x="21" y="308" width="17" height="4" fill="#323865"/><rect x="21" y="308" width="3" height="17" fill="#323865"/><rect x="33" y="328" width="16" height="5" fill="#2c1b4b"/><rect x="45" y="313" width="4" height="20" fill="#2c1b4b"/><rect x="54" y="308" width="23" height="25" fill="#25235d"/><rect x="54" y="308" width="15" height="4" fill="#323865"/><rect x="54" y="308" width="3" height="17" fill="#323865"/><rect x="59" y="312" width="7" height="5" fill="#323865"/><rect x="60" y="328" width="17" height="5" fill="#2c1b4b"/><rect x="73" y="313" width="4" height="20" fill="#2c1b4b"/><rect x="81" y="308" width="45" height="25" fill="#25235d"/><rect x="81" y="308" width="31" height="4" fill="#323865"/><rect x="81" y="308" width="3" height="17" fill="#323865"/><rect x="90" y="312" width="19" height="5" fill="#323865"/><rect x="98" y="328" width="28" height="5" fill="#2c1b4b"/><rect x="122" y="313" width="4" height="20" fill="#2c1b4b"/><rect x="81" y="329" width="15" height="4" fill="#2c1b4b"/><rect x="132" y="308" width="43" height="25" fill="#25235d"/><rect x="132" y="308" width="32" height="4" fill="#323865"/><rect x="132" y="308" width="3" height="17" fill="#323865"/><rect x="146" y="312" width="15" height="5" fill="#323865"/><rect x="142" y="328" width="33" height="5" fill="#2c1b4b"/><rect x="171" y="313" width="4" height="20" fill="#2c1b4b"/><rect x="132" y="329" width="15" height="4" fill="#2c1b4b"/><rect x="179" y="308" width="28" height="25" fill="#25235d"/><rect x="179" y="308" width="14" height="4" fill="#323865"/><rect x="179" y="308" width="3" height="17" fill="#323865"/><rect x="186" y="312" width="7" height="5" fill="#323865"/><rect x="188" y="328" width="19" height="5" fill="#2c1b4b"/><rect x="203" y="313" width="4" height="20" fill="#2c1b4b"/><rect x="179" y="329" width="9" height="4" fill="#2c1b4b"/><rect x="211" y="308" width="42" height="25" fill="#25235d"/><rect x="211" y="308" width="33" height="4" fill="#323865"/><rect x="211" y="308" width="3" height="17" fill="#323865"/><rect x="232" y="328" width="21" height="5" fill="#2c1b4b"/><rect x="249" y="313" width="4" height="20" fill="#2c1b4b"/><rect x="211" y="329" width="14" height="4" fill="#2c1b4b"/><rect x="259" y="308" width="26" height="25" fill="#25235d"/><rect x="259" y="308" width="12" height="4" fill="#323865"/><rect x="259" y="308" width="3" height="17" fill="#323865"/><rect x="268" y="328" width="17" height="5" fill="#2c1b4b"/><rect x="281" y="313" width="4" height="20" fill="#2c1b4b"/><rect x="291" y="308" width="36" height="25" fill="#25235d"/><rect x="291" y="308" width="22" height="4" fill="#323865"/><rect x="291" y="308" width="3" height="17" fill="#323865"/><rect x="307" y="328" width="20" height="5" fill="#2c1b4b"/><rect x="323" y="313" width="4" height="20" fill="#2c1b4b"/><rect x="291" y="329" width="12" height="4" fill="#2c1b4b"/><rect x="332" y="308" width="46" height="25" fill="#25235d"/><rect x="332" y="308" width="36" height="4" fill="#323865"/><rect x="332" y="308" width="3" height="17" fill="#323865"/><rect x="346" y="328" width="32" height="5" fill="#2c1b4b"/><rect x="374" y="313" width="4" height="20" fill="#2c1b4b"/><rect x="332" y="329" width="16" height="4" fill="#2c1b4b"/><rect x="383" y="308" width="62" height="25" fill="#25235d"/><rect x="383" y="308" width="37" height="4" fill="#323865"/><rect x="383" y="308" width="3" height="17" fill="#323865"/><rect x="409" y="328" width="36" height="5" fill="#2c1b4b"/><rect x="441" y="313" width="4" height="20" fill="#2c1b4b"/><rect x="451" y="308" width="50" height="25" fill="#25235d"/><rect x="451" y="308" width="35" height="4" fill="#323865"/><rect x="451" y="308" width="3" height="17" fill="#323865"/><rect x="465" y="312" width="13" height="5" fill="#323865"/><rect x="460" y="328" width="41" height="5" fill="#2c1b4b"/><rect x="497" y="313" width="4" height="20" fill="#2c1b4b"/><rect x="507" y="308" width="51" height="25" fill="#25235d"/><rect x="507" y="308" width="36" height="4" fill="#323865"/><rect x="507" y="308" width="3" height="17" fill="#323865"/><rect x="519" y="312" width="15" height="5" fill="#323865"/><rect x="521" y="328" width="37" height="5" fill="#2c1b4b"/><rect x="554" y="313" width="4" height="20" fill="#2c1b4b"/><rect x="563" y="308" width="54" height="25" fill="#25235d"/><rect x="563" y="308" width="35" height="4" fill="#323865"/><rect x="563" y="308" width="3" height="17" fill="#323865"/><rect x="574" y="312" width="13" height="5" fill="#323865"/><rect x="589" y="328" width="28" height="5" fill="#2c1b4b"/><rect x="613" y="313" width="4" height="20" fill="#2c1b4b"/><rect x="563" y="329" width="18" height="4" fill="#2c1b4b"/><rect x="621" y="308" width="56" height="25" fill="#25235d"/><rect x="621" y="308" width="32" height="4" fill="#323865"/><rect x="621" y="308" width="3" height="17" fill="#323865"/><rect x="638" y="312" width="16" height="5" fill="#323865"/><rect x="639" y="328" width="38" height="5" fill="#2c1b4b"/><rect x="673" y="313" width="4" height="20" fill="#2c1b4b"/><rect x="682" y="308" width="25" height="25" fill="#25235d"/><rect x="682" y="308" width="18" height="4" fill="#323865"/><rect x="682" y="308" width="3" height="17" fill="#323865"/><rect x="694" y="328" width="13" height="5" fill="#2c1b4b"/><rect x="703" y="313" width="4" height="20" fill="#2c1b4b"/><rect x="682" y="329" width="8" height="4" fill="#2c1b4b"/><rect x="711" y="308" width="31" height="25" fill="#25235d"/><rect x="711" y="308" width="23" height="4" fill="#323865"/><rect x="711" y="308" width="3" height="17" fill="#323865"/><rect x="723" y="312" width="8" height="5" fill="#323865"/><rect x="716" y="328" width="26" height="5" fill="#2c1b4b"/><rect x="738" y="313" width="4" height="20" fill="#2c1b4b"/><rect x="746" y="308" width="38" height="25" fill="#25235d"/><rect x="746" y="308" width="29" height="4" fill="#323865"/><rect x="746" y="308" width="3" height="17" fill="#323865"/><rect x="756" y="312" width="16" height="5" fill="#323865"/><rect x="763" y="328" width="21" height="5" fill="#2c1b4b"/><rect x="780" y="313" width="4" height="20" fill="#2c1b4b"/><rect x="746" y="329" width="13" height="4" fill="#2c1b4b"/><rect x="790" y="308" width="37" height="25" fill="#25235d"/><rect x="790" y="308" width="18" height="4" fill="#323865"/><rect x="790" y="308" width="3" height="17" fill="#323865"/><rect x="802" y="312" width="15" height="5" fill="#323865"/><rect x="808" y="328" width="19" height="5" fill="#2c1b4b"/><rect x="823" y="313" width="4" height="20" fill="#2c1b4b"/><rect x="790" y="329" width="12" height="4" fill="#2c1b4b"/><rect x="831" y="308" width="25" height="25" fill="#25235d"/><rect x="831" y="308" width="20" height="4" fill="#323865"/><rect x="831" y="308" width="3" height="17" fill="#323865"/><rect x="840" y="312" width="10" height="5" fill="#323865"/><rect x="842" y="328" width="14" height="5" fill="#2c1b4b"/><rect x="852" y="313" width="4" height="20" fill="#2c1b4b"/><rect x="831" y="329" width="8" height="4" fill="#2c1b4b"/><rect x="862" y="308" width="44" height="25" fill="#25235d"/><rect x="862" y="308" width="34" height="4" fill="#323865"/><rect x="862" y="308" width="3" height="17" fill="#323865"/><rect x="870" y="312" width="14" height="5" fill="#323865"/><rect x="870" y="328" width="36" height="5" fill="#2c1b4b"/><rect x="902" y="313" width="4" height="20" fill="#2c1b4b"/><rect x="-31" y="340" width="26" height="20" fill="#25235d"/><rect x="-31" y="340" width="21" height="4" fill="#323865"/><rect x="-31" y="340" width="3" height="12" fill="#323865"/><rect x="-24" y="344" width="11" height="5" fill="#323865"/><rect x="-25" y="355" width="20" height="5" fill="#2c1b4b"/><rect x="-9" y="345" width="4" height="15" fill="#2c1b4b"/><rect x="-31" y="356" width="9" height="4" fill="#2c1b4b"/><rect x="-1" y="340" width="49" height="20" fill="#25235d"/><rect x="-1" y="340" width="22" height="4" fill="#323865"/><rect x="-1" y="340" width="3" height="12" fill="#323865"/><rect x="10" y="344" width="18" height="5" fill="#323865"/><rect x="19" y="355" width="29" height="5" fill="#2c1b4b"/><rect x="44" y="345" width="4" height="15" fill="#2c1b4b"/><rect x="53" y="340" width="35" height="20" fill="#25235d"/><rect x="53" y="340" width="26" height="4" fill="#323865"/><rect x="53" y="340" width="3" height="12" fill="#323865"/><rect x="63" y="344" width="9" height="5" fill="#323865"/><rect x="67" y="355" width="21" height="5" fill="#2c1b4b"/><rect x="84" y="345" width="4" height="15" fill="#2c1b4b"/><rect x="53" y="356" width="12" height="4" fill="#2c1b4b"/><rect x="92" y="340" width="44" height="20" fill="#25235d"/><rect x="92" y="340" width="30" height="4" fill="#323865"/><rect x="92" y="340" width="3" height="12" fill="#323865"/><rect x="98" y="344" width="11" height="5" fill="#323865"/><rect x="111" y="355" width="25" height="5" fill="#2c1b4b"/><rect x="132" y="345" width="4" height="15" fill="#2c1b4b"/><rect x="142" y="340" width="41" height="20" fill="#25235d"/><rect x="142" y="340" width="21" height="4" fill="#323865"/><rect x="142" y="340" width="3" height="12" fill="#323865"/><rect x="150" y="344" width="13" height="5" fill="#323865"/><rect x="153" y="355" width="30" height="5" fill="#2c1b4b"/><rect x="179" y="345" width="4" height="15" fill="#2c1b4b"/><rect x="142" y="356" width="14" height="4" fill="#2c1b4b"/><rect x="188" y="340" width="30" height="20" fill="#25235d"/><rect x="188" y="340" width="14" height="4" fill="#323865"/><rect x="188" y="340" width="3" height="12" fill="#323865"/><rect x="196" y="344" width="10" height="5" fill="#323865"/><rect x="198" y="355" width="20" height="5" fill="#2c1b4b"/><rect x="214" y="345" width="4" height="15" fill="#2c1b4b"/><rect x="188" y="356" width="10" height="4" fill="#2c1b4b"/><rect x="224" y="340" width="29" height="20" fill="#25235d"/><rect x="224" y="340" width="24" height="4" fill="#323865"/><rect x="224" y="340" width="3" height="12" fill="#323865"/><rect x="233" y="344" width="8" height="5" fill="#323865"/><rect x="233" y="355" width="20" height="5" fill="#2c1b4b"/><rect x="249" y="345" width="4" height="15" fill="#2c1b4b"/><rect x="224" y="356" width="10" height="4" fill="#2c1b4b"/><rect x="258" y="340" width="48" height="20" fill="#25235d"/><rect x="258" y="340" width="25" height="4" fill="#323865"/><rect x="258" y="340" width="3" height="12" fill="#323865"/><rect x="275" y="355" width="31" height="5" fill="#2c1b4b"/><rect x="302" y="345" width="4" height="15" fill="#2c1b4b"/><rect x="258" y="356" width="16" height="4" fill="#2c1b4b"/><rect x="312" y="340" width="59" height="20" fill="#25235d"/><rect x="312" y="340" width="42" height="4" fill="#323865"/><rect x="312" y="340" width="3" height="12" fill="#323865"/><rect x="330" y="344" width="14" height="5" fill="#323865"/><rect x="328" y="355" width="43" height="5" fill="#2c1b4b"/><rect x="367" y="345" width="4" height="15" fill="#2c1b4b"/><rect x="312" y="356" width="20" height="4" fill="#2c1b4b"/><rect x="376" y="340" width="45" height="20" fill="#25235d"/><rect x="376" y="340" width="30" height="4" fill="#323865"/><rect x="376" y="340" width="3" height="12" fill="#323865"/><rect x="392" y="355" width="29" height="5" fill="#2c1b4b"/><rect x="417" y="345" width="4" height="15" fill="#2c1b4b"/><rect x="376" y="356" width="15" height="4" fill="#2c1b4b"/><rect x="425" y="340" width="28" height="20" fill="#25235d"/><rect x="425" y="340" width="13" height="4" fill="#323865"/><rect x="425" y="340" width="3" height="12" fill="#323865"/><rect x="434" y="355" width="19" height="5" fill="#2c1b4b"/><rect x="449" y="345" width="4" height="15" fill="#2c1b4b"/><rect x="425" y="356" width="9" height="4" fill="#2c1b4b"/><rect x="459" y="340" width="45" height="20" fill="#25235d"/><rect x="459" y="340" width="26" height="4" fill="#323865"/><rect x="459" y="340" width="3" height="12" fill="#323865"/><rect x="470" y="355" width="34" height="5" fill="#2c1b4b"/><rect x="500" y="345" width="4" height="15" fill="#2c1b4b"/><rect x="459" y="356" width="15" height="4" fill="#2c1b4b"/><rect x="508" y="340" width="23" height="20" fill="#25235d"/><rect x="508" y="340" width="16" height="4" fill="#323865"/><rect x="508" y="340" width="3" height="12" fill="#323865"/><rect x="513" y="344" width="7" height="5" fill="#323865"/><rect x="517" y="355" width="14" height="5" fill="#2c1b4b"/><rect x="527" y="345" width="4" height="15" fill="#2c1b4b"/><rect x="537" y="340" width="60" height="20" fill="#25235d"/><rect x="537" y="340" width="50" height="4" fill="#323865"/><rect x="537" y="340" width="3" height="12" fill="#323865"/><rect x="544" y="355" width="53" height="5" fill="#2c1b4b"/><rect x="593" y="345" width="4" height="15" fill="#2c1b4b"/><rect x="537" y="356" width="21" height="4" fill="#2c1b4b"/><rect x="601" y="340" width="36" height="20" fill="#25235d"/><rect x="601" y="340" width="23" height="4" fill="#323865"/><rect x="601" y="340" width="3" height="12" fill="#323865"/><rect x="606" y="344" width="16" height="5" fill="#323865"/><rect x="610" y="355" width="27" height="5" fill="#2c1b4b"/><rect x="633" y="345" width="4" height="15" fill="#2c1b4b"/><rect x="643" y="340" width="35" height="20" fill="#25235d"/><rect x="643" y="340" width="29" height="4" fill="#323865"/><rect x="643" y="340" width="3" height="12" fill="#323865"/><rect x="651" y="344" width="9" height="5" fill="#323865"/><rect x="655" y="355" width="23" height="5" fill="#2c1b4b"/><rect x="674" y="345" width="4" height="15" fill="#2c1b4b"/><rect x="684" y="340" width="27" height="20" fill="#25235d"/><rect x="684" y="340" width="13" height="4" fill="#323865"/><rect x="684" y="340" width="3" height="12" fill="#323865"/><rect x="691" y="355" width="20" height="5" fill="#2c1b4b"/><rect x="707" y="345" width="4" height="15" fill="#2c1b4b"/><rect x="715" y="340" width="38" height="20" fill="#25235d"/><rect x="715" y="340" width="29" height="4" fill="#323865"/><rect x="715" y="340" width="3" height="12" fill="#323865"/><rect x="723" y="355" width="30" height="5" fill="#2c1b4b"/><rect x="749" y="345" width="4" height="15" fill="#2c1b4b"/><rect x="715" y="356" width="13" height="4" fill="#2c1b4b"/><rect x="759" y="340" width="51" height="20" fill="#25235d"/><rect x="759" y="340" width="23" height="4" fill="#323865"/><rect x="759" y="340" width="3" height="12" fill="#323865"/><rect x="766" y="355" width="44" height="5" fill="#2c1b4b"/><rect x="806" y="345" width="4" height="15" fill="#2c1b4b"/><rect x="814" y="340" width="23" height="20" fill="#25235d"/><rect x="814" y="340" width="13" height="4" fill="#323865"/><rect x="814" y="340" width="3" height="12" fill="#323865"/><rect x="820" y="344" width="6" height="5" fill="#323865"/><rect x="819" y="355" width="18" height="5" fill="#2c1b4b"/><rect x="833" y="345" width="4" height="15" fill="#2c1b4b"/><rect x="814" y="356" width="8" height="4" fill="#2c1b4b"/><rect x="841" y="340" width="54" height="20" fill="#25235d"/><rect x="841" y="340" width="26" height="4" fill="#323865"/><rect x="841" y="340" width="3" height="12" fill="#323865"/><rect x="866" y="355" width="29" height="5" fill="#2c1b4b"/><rect x="891" y="345" width="4" height="15" fill="#2c1b4b"/><rect x="841" y="356" width="18" height="4" fill="#2c1b4b"/></svg>
<div class="t" style="left:377px;top:706px;width:200px;text-align:center;color:#f7941d;font-size:36px">FOL</div>
<div class="t" style="left:277px;top:748px;width:400px;text-align:center;color:#f7941d;font-size:36px">Frame Of Legends</div>
<svg class="a" style="left:262.4px;top:803px" width="130.00" height="200.00" viewBox="0 0 13 16" preserveAspectRatio="none" shape-rendering="crispEdges"><rect x="5" y="0" width="5" height="1" fill="#1e1e1e"/><rect x="4" y="1" width="1" height="1" fill="#1e1e1e"/><rect x="5" y="1" width="4" height="1" fill="#3ec834"/><rect x="9" y="1" width="1" height="1" fill="#38b02e"/><rect x="10" y="1" width="1" height="1" fill="#1e1e1e"/><rect x="4" y="2" width="2" height="1" fill="#3ec834"/><rect x="6" y="2" width="2" height="1" fill="#1e1e1e"/><rect x="8" y="2" width="2" height="1" fill="#38b02e"/><rect x="10" y="2" width="1" height="1" fill="#4a9a3e"/><rect x="11" y="2" width="1" height="1" fill="#1e1e1e"/><rect x="3" y="3" width="1" height="1" fill="#1e1e1e"/><rect x="4" y="3" width="2" height="1" fill="#3ec834"/><rect x="6" y="3" width="1" height="1" fill="#2a6ab0"/><rect x="7" y="3" width="3" height="1" fill="#38b02e"/><rect x="10" y="3" width="1" height="1" fill="#4a9a3e"/><rect x="11" y="3" width="1" height="1" fill="#1e1e1e"/><rect x="4" y="4" width="1" height="1" fill="#1e1e1e"/><rect x="5" y="4" width="2" height="1" fill="#3ec834"/><rect x="7" y="4" width="2" height="1" fill="#38b02e"/><rect x="9" y="4" width="2" height="1" fill="#4a9a3e"/><rect x="11" y="4" width="1" height="1" fill="#1e1e1e"/><rect x="2" y="5" width="1" height="1" fill="#1e1e1e"/><rect x="5" y="5" width="1" height="1" fill="#1e1e1e"/><rect x="6" y="5" width="2" height="1" fill="#8a4040"/><rect x="8" y="5" width="1" height="1" fill="#38b02e"/><rect x="9" y="5" width="1" height="1" fill="#4a9a3e"/><rect x="10" y="5" width="1" height="1" fill="#1e1e1e"/><rect x="1" y="6" width="1" height="1" fill="#1e1e1e"/><rect x="2" y="6" width="1" height="1" fill="#3ec834"/><rect x="3" y="6" width="1" height="1" fill="#1e1e1e"/><rect x="4" y="6" width="2" height="1" fill="#6b5a4e"/><rect x="6" y="6" width="1" height="1" fill="#3ec834"/><rect x="7" y="6" width="2" height="1" fill="#38b02e"/><rect x="9" y="6" width="2" height="1" fill="#574a40"/><rect x="11" y="6" width="1" height="1" fill="#1e1e1e"/><rect x="0" y="7" width="1" height="1" fill="#1e1e1e"/><rect x="1" y="7" width="2" height="1" fill="#3ec834"/><rect x="3" y="7" width="1" height="1" fill="#1e1e1e"/><rect x="4" y="7" width="1" height="1" fill="#6b5a4e"/><rect x="5" y="7" width="2" height="1" fill="#574a40"/><rect x="7" y="7" width="1" height="1" fill="#3ec834"/><rect x="8" y="7" width="2" height="1" fill="#574a40"/><rect x="10" y="7" width="2" height="1" fill="#6b5a4e"/><rect x="12" y="7" width="1" height="1" fill="#1e1e1e"/><rect x="0" y="8" width="1" height="1" fill="#1e1e1e"/><rect x="1" y="8" width="3" height="1" fill="#3ec834"/><rect x="4" y="8" width="1" height="1" fill="#4a9a3e"/><rect x="5" y="8" width="1" height="1" fill="#6b5a4e"/><rect x="6" y="8" width="1" height="1" fill="#3ec834"/><rect x="7" y="8" width="1" height="1" fill="#38b02e"/><rect x="8" y="8" width="2" height="1" fill="#574a40"/><rect x="10" y="8" width="1" height="1" fill="#3ec834"/><rect x="11" y="8" width="1" height="1" fill="#6b5a4e"/><rect x="12" y="8" width="1" height="1" fill="#1e1e1e"/><rect x="1" y="9" width="1" height="1" fill="#1e1e1e"/><rect x="2" y="9" width="2" height="1" fill="#38b02e"/><rect x="4" y="9" width="1" height="1" fill="#1e1e1e"/><rect x="5" y="9" width="1" height="1" fill="#6b5a4e"/><rect x="6" y="9" width="1" height="1" fill="#3ec834"/><rect x="7" y="9" width="2" height="1" fill="#574a40"/><rect x="9" y="9" width="1" height="1" fill="#3ec834"/><rect x="10" y="9" width="1" height="1" fill="#38b02e"/><rect x="11" y="9" width="1" height="1" fill="#4a9a3e"/><rect x="12" y="9" width="1" height="1" fill="#1e1e1e"/><rect x="2" y="10" width="3" height="1" fill="#1e1e1e"/><rect x="5" y="10" width="1" height="1" fill="#6b5a4e"/><rect x="6" y="10" width="3" height="1" fill="#574a40"/><rect x="9" y="10" width="1" height="1" fill="#3ec834"/><rect x="10" y="10" width="1" height="1" fill="#38b02e"/><rect x="11" y="10" width="1" height="1" fill="#4a9a3e"/><rect x="12" y="10" width="1" height="1" fill="#1e1e1e"/><rect x="4" y="11" width="1" height="1" fill="#1e1e1e"/><rect x="5" y="11" width="4" height="1" fill="#553540"/><rect x="9" y="11" width="1" height="1" fill="#3ec834"/><rect x="10" y="11" width="1" height="1" fill="#38b02e"/><rect x="11" y="11" width="1" height="1" fill="#4a9a3e"/><rect x="12" y="11" width="1" height="1" fill="#1e1e1e"/><rect x="4" y="12" width="1" height="1" fill="#1e1e1e"/><rect x="5" y="12" width="2" height="1" fill="#553540"/><rect x="8" y="12" width="1" height="1" fill="#553540"/><rect x="9" y="12" width="1" height="1" fill="#3ec834"/><rect x="10" y="12" width="1" height="1" fill="#38b02e"/><rect x="11" y="12" width="1" height="1" fill="#1e1e1e"/><rect x="4" y="13" width="1" height="1" fill="#1e1e1e"/><rect x="5" y="13" width="1" height="1" fill="#4a9a3e"/><rect x="6" y="13" width="1" height="1" fill="#553540"/><rect x="8" y="13" width="1" height="1" fill="#3ec834"/><rect x="9" y="13" width="1" height="1" fill="#553540"/><rect x="10" y="13" width="1" height="1" fill="#1e1e1e"/><rect x="3" y="14" width="2" height="1" fill="#1e1e1e"/><rect x="5" y="14" width="2" height="1" fill="#38b02e"/><rect x="8" y="14" width="2" height="1" fill="#38b02e"/><rect x="10" y="14" width="1" height="1" fill="#1e1e1e"/><rect x="3" y="15" width="1" height="1" fill="#1e1e1e"/><rect x="4" y="15" width="1" height="1" fill="#3ec834"/><rect x="5" y="15" width="2" height="1" fill="#4a9a3e"/><rect x="8" y="15" width="2" height="1" fill="#4a9a3e"/><rect x="10" y="15" width="1" height="1" fill="#1e1e1e"/></svg>
<div class="t" style="left:232px;top:878px;width:200px;text-align:center;color:#f0f0f0;font-size:20px;line-height:23px;white-space:normal">Escull<br>Personatge</div>
<svg class="a" style="left:0;top:674px" width="875" height="344"><path d="M519.50 267.66 Q536.00 287.20 555.50 300.70 Q543.50 288.70 542.00 265.45 A75.38 66.00 0 1 0 519.50 267.66Z" fill="#f0fcfc" stroke="#000" stroke-width="2"/></svg>
<div class="t" style="left:423px;top:861px;width:200px;text-align:center;color:#c8a040;font-size:24px">Play</div><!-- PROJECT -->
<div class="a" style="left:875px;top:634px;width:2px;height:384px;background:#191919"></div>
<div class="a" style="left:877px;top:634px;width:611px;height:19px;background:#282828"></div>
<div class="tab" style="left:877px;top:634px;width:81px;height:19px"></div>
<div class="a" style="left:878px;top:634px;width:79px;height:2px;background:#3a79bb;border-radius:2px 2px 0 0"></div>
<svg class="a" style="left:885px;top:638px" width="13" height="11" viewBox="0 0 13 11"><path d="M0.5 0.5H5L6.5 2H12.5V10.5H0.5Z" fill="#c4c4c4"/></svg>
<div class="t" style="left:901px;top:638px;color:#c4c4c4;font-size:12.5px">Project</div>
<div class="a" style="left:877px;top:653px;width:611px;height:20px;background:#3c3c3c"></div>
<div class="a" style="left:877px;top:673px;width:611px;height:1px;background:#242424"></div>
<svg class="a" style="left:883px;top:656px" width="14" height="14"><path d="M6.5 1V13M0.5 7H12.5" stroke="#d0d0d0" stroke-width="1.6"/></svg>
<div class="dd" style="left:900px;top:662px;border-left-width:3.5px;border-right-width:3.5px;border-top-width:4px"></div>
<div class="a" style="left:1025px;top:655px;width:463px;height:16px;background:#2a2a2a;border-radius:4px;border:1px solid #212121"></div>
<svg class="a" style="left:1029px;top:658px" width="10" height="10"><circle cx="4" cy="4" r="2.6" fill="none" stroke="#bbb" stroke-width="1.2"/><path d="M6 6L8.5 8.5" stroke="#bbb" stroke-width="1.3"/></svg>
<div class="a" style="left:877px;top:674px;width:196px;height:344px;background:#383838;overflow:hidden">
<svg class="a" style="left:60px;top:-5px" width="13" height="11" viewBox="0 0 13 11"><path d="M0.5 0.5H5L6.5 2H12.5V10.5H0.5Z" fill="#c4c4c4"/></svg>
<div class="t" style="left:76px;top:-6px;color:#c4c4c4;font-size:12.5px">Backgrounds</div>
<div class="a" style="left:47px;top:12px;width:0;height:0;border-left:5px solid transparent;border-right:5px solid transparent;border-top:8px solid #7a7a7a"></div>
<svg class="a" style="left:60px;top:11px" width="15" height="12" viewBox="0 0 15 12"><path d="M1 11V1H5L6.5 2.5H12V4.5" fill="none" stroke="#c4c4c4" stroke-width="1.2"/><path d="M3.3 5H14.2L12 11.2H1.2Z" fill="#c4c4c4"/></svg>
<div class="t" style="left:76px;top:10px;color:#c4c4c4;font-size:12.5px">Characters</div>
<div class="a" style="left:61px;top:28px;width:0;height:0;border-left:5px solid transparent;border-right:5px solid transparent;border-top:8px solid #7a7a7a"></div>
<svg class="a" style="left:74px;top:27px" width="15" height="12" viewBox="0 0 15 12"><path d="M1 11V1H5L6.5 2.5H12V4.5" fill="none" stroke="#c4c4c4" stroke-width="1.2"/><path d="M3.3 5H14.2L12 11.2H1.2Z" fill="#c4c4c4"/></svg>
<div class="t" style="left:90px;top:26px;color:#c4c4c4;font-size:12.5px">Animation</div>
<svg class="a" style="left:88px;top:43px" width="13" height="11" viewBox="0 0 13 11"><path d="M0.5 0.5H5L6.5 2H12.5V10.5H0.5Z" fill="#c4c4c4"/></svg>
<div class="t" style="left:104px;top:42px;color:#c4c4c4;font-size:12.5px">Astronaut</div>
<svg class="a" style="left:88px;top:59px" width="13" height="11" viewBox="0 0 13 11"><path d="M0.5 0.5H5L6.5 2H12.5V10.5H0.5Z" fill="#c4c4c4"/></svg>
<div class="t" style="left:104px;top:58px;color:#c4c4c4;font-size:12.5px">Detective</div>
<div class="a" style="left:61px;top:76px;width:0;height:0;border-left:5px solid transparent;border-right:5px solid transparent;border-top:8px solid #7a7a7a"></div>
<svg class="a" style="left:74px;top:75px" width="15" height="12" viewBox="0 0 15 12"><path d="M1 11V1H5L6.5 2.5H12V4.5" fill="none" stroke="#c4c4c4" stroke-width="1.2"/><path d="M3.3 5H14.2L12 11.2H1.2Z" fill="#c4c4c4"/></svg>
<div class="t" style="left:90px;top:74px;color:#c4c4c4;font-size:12.5px">Blob Players</div>
<svg class="a" style="left:88px;top:91px" width="13" height="11" viewBox="0 0 13 11"><path d="M0.5 0.5H5L6.5 2H12.5V10.5H0.5Z" fill="#c4c4c4"/></svg>
<div class="t" style="left:104px;top:90px;color:#c4c4c4;font-size:12.5px">Animation</div>
<svg class="a" style="left:74px;top:107px" width="13" height="11" viewBox="0 0 13 11"><path d="M0.5 0.5H5L6.5 2H12.5V10.5H0.5Z" fill="#c4c4c4"/></svg>
<div class="t" style="left:90px;top:106px;color:#c4c4c4;font-size:12.5px">Fantasy</div>
<div class="a" style="left:62px;top:123px;width:0;height:0;border-top:5px solid transparent;border-bottom:5px solid transparent;border-left:8px solid #7a7a7a"></div>
<svg class="a" style="left:74px;top:123px" width="13" height="11" viewBox="0 0 13 11"><path d="M0.5 0.5H5L6.5 2H12.5V10.5H0.5Z" fill="#c4c4c4"/></svg>
<div class="t" style="left:90px;top:122px;color:#c4c4c4;font-size:12.5px">Soldiers</div>
<svg class="a" style="left:74px;top:139px" width="13" height="11" viewBox="0 0 13 11"><path d="M0.5 0.5H5L6.5 2H12.5V10.5H0.5Z" fill="#c4c4c4"/></svg>
<div class="t" style="left:90px;top:138px;color:#c4c4c4;font-size:12.5px">Stickman</div>
<div class="a" style="left:48px;top:155px;width:0;height:0;border-top:5px solid transparent;border-bottom:5px solid transparent;border-left:8px solid #7a7a7a"></div>
<svg class="a" style="left:60px;top:155px" width="13" height="11" viewBox="0 0 13 11"><path d="M0.5 0.5H5L6.5 2H12.5V10.5H0.5Z" fill="#c4c4c4"/></svg>
<div class="t" style="left:76px;top:154px;color:#c4c4c4;font-size:12.5px">Effects</div>
<div class="a" style="left:48px;top:171px;width:0;height:0;border-top:5px solid transparent;border-bottom:5px solid transparent;border-left:8px solid #7a7a7a"></div>
<svg class="a" style="left:60px;top:171px" width="13" height="11" viewBox="0 0 13 11"><path d="M0.5 0.5H5L6.5 2H12.5V10.5H0.5Z" fill="#c4c4c4"/></svg>
<div class="t" style="left:76px;top:170px;color:#c4c4c4;font-size:12.5px">Enemies</div>
<div class="a" style="left:48px;top:187px;width:0;height:0;border-top:5px solid transparent;border-bottom:5px solid transparent;border-left:8px solid #7a7a7a"></div>
<svg class="a" style="left:60px;top:187px" width="13" height="11" viewBox="0 0 13 11"><path d="M0.5 0.5H5L6.5 2H12.5V10.5H0.5Z" fill="#c4c4c4"/></svg>
<div class="t" style="left:76px;top:186px;color:#c4c4c4;font-size:12.5px">Environment</div>
<svg class="a" style="left:60px;top:203px" width="13" height="11" viewBox="0 0 13 11"><path d="M0.5 0.5H5L6.5 2H12.5V10.5H0.5Z" fill="#c4c4c4"/></svg>
<div class="t" style="left:76px;top:202px;color:#c4c4c4;font-size:12.5px">Extra</div>
<div class="a" style="left:48px;top:219px;width:0;height:0;border-top:5px solid transparent;border-bottom:5px solid transparent;border-left:8px solid #7a7a7a"></div>
<svg class="a" style="left:60px;top:219px" width="13" height="11" viewBox="0 0 13 11"><path d="M0.5 0.5H5L6.5 2H12.5V10.5H0.5Z" fill="#c4c4c4"/></svg>
<div class="t" style="left:76px;top:218px;color:#c4c4c4;font-size:12.5px">Food &amp; Plants</div>
<div class="a" style="left:48px;top:235px;width:0;height:0;border-top:5px solid transparent;border-bottom:5px solid transparent;border-left:8px solid #7a7a7a"></div>
<svg class="a" style="left:60px;top:235px" width="13" height="11" viewBox="0 0 13 11"><path d="M0.5 0.5H5L6.5 2H12.5V10.5H0.5Z" fill="#c4c4c4"/></svg>
<div class="t" style="left:76px;top:234px;color:#c4c4c4;font-size:12.5px">Items &amp; Icons</div>
<svg class="a" style="left:60px;top:251px" width="13" height="11" viewBox="0 0 13 11"><path d="M0.5 0.5H5L6.5 2H12.5V10.5H0.5Z" fill="#c4c4c4"/></svg>
<div class="t" style="left:76px;top:250px;color:#c4c4c4;font-size:12.5px">Platforms</div>
<svg class="a" style="left:60px;top:267px" width="13" height="11" viewBox="0 0 13 11"><path d="M0.5 0.5H5L6.5 2H12.5V10.5H0.5Z" fill="#c4c4c4"/></svg>
<div class="t" style="left:76px;top:266px;color:#c4c4c4;font-size:12.5px">Shapes</div>
<svg class="a" style="left:60px;top:283px" width="13" height="11" viewBox="0 0 13 11"><path d="M0.5 0.5H5L6.5 2H12.5V10.5H0.5Z" fill="#c4c4c4"/></svg>
<div class="t" style="left:76px;top:282px;color:#c4c4c4;font-size:12.5px">Sounds</div>
<div class="a" style="left:48px;top:299px;width:0;height:0;border-top:5px solid transparent;border-bottom:5px solid transparent;border-left:8px solid #7a7a7a"></div>
<svg class="a" style="left:60px;top:299px" width="13" height="11" viewBox="0 0 13 11"><path d="M0.5 0.5H5L6.5 2H12.5V10.5H0.5Z" fill="#c4c4c4"/></svg>
<div class="t" style="left:76px;top:298px;color:#c4c4c4;font-size:12.5px">UI</div>
<svg class="a" style="left:60px;top:315px" width="13" height="11" viewBox="0 0 13 11"><path d="M0.5 0.5H5L6.5 2H12.5V10.5H0.5Z" fill="#c4c4c4"/></svg>
<div class="t" style="left:76px;top:314px;color:#c4c4c4;font-size:12.5px">Weapons &amp; Tools</div>
<div class="a" style="left:0;top:328px;width:196px;height:16px;background:#464646"></div>
<svg class="a" style="left:32px;top:331px" width="13" height="11" viewBox="0 0 13 11"><path d="M0.5 0.5H5L6.5 2H12.5V10.5H0.5Z" fill="#c4c4c4"/></svg>
<div class="t" style="left:48px;top:330px;color:#c4c4c4;font-size:12.5px">Scenes</div>
</div>
<div class="a" style="left:1073px;top:674px;width:12px;height:344px;background:#393939"></div>
<div class="a" style="left:1075px;top:680px;width:0;height:0;border-left:4px solid transparent;border-right:4px solid transparent;border-bottom:5px solid #c4c4c4"></div>
<div class="a" style="left:1075px;top:1006px;width:0;height:0;border-left:4px solid transparent;border-right:4px solid transparent;border-top:5px solid #c4c4c4"></div>
<div class="a" style="left:1074px;top:757px;width:10px;height:170px;background:#5f5f5f;border-radius:5px"></div>
<div class="a" style="left:1085px;top:674px;width:1px;height:344px;background:#262626"></div>
<div class="a" style="left:1086px;top:674px;width:402px;height:344px;background:#333333"></div>
<div class="a" style="left:1086px;top:674px;width:402px;height:21px;background:#3e3e3e"></div>
<div class="t" style="left:1090px;top:677px;color:#a8a8a8;font-size:12.5px">Assets</div>
<svg class="a" style="left:1135px;top:679px" width="8" height="11"><path d="M1 1L6.5 5.5L1 10" fill="none" stroke="#a8a8a8" stroke-width="1.2"/></svg>
<div class="t" style="left:1147px;top:677px;color:#d0d0d0;font-size:13px;font-weight:bold">Scenes</div>
<svg class="a" style="left:1103px;top:696px" width="14" height="14" viewBox="0 0 14 14"><path d="M7 0.3L13.2 3.8V10.2L7 13.7L0.8 10.2V3.8Z" fill="#e6e6e6"/><path d="M6.2 0V4.6L7 5.1L7.8 4.6V0Z M3.6 5.4L6.2 6.9V10.6L3.6 9.1Z M10.4 5.4L7.8 6.9V10.6L10.4 9.1Z M4.2 3.9L7 5.5L9.8 3.9L9.3 3.5L7 4.8L4.7 3.5Z" fill="#333333"/></svg>
<div class="t" style="left:1120px;top:697px;color:#c8c8c8;font-size:12.5px">Portada</div>
<svg class="a" style="left:1103px;top:712px" width="14" height="14" viewBox="0 0 14 14"><path d="M7 0.3L13.2 3.8V10.2L7 13.7L0.8 10.2V3.8Z" fill="#e6e6e6"/><path d="M6.2 0V4.6L7 5.1L7.8 4.6V0Z M3.6 5.4L6.2 6.9V10.6L3.6 9.1Z M10.4 5.4L7.8 6.9V10.6L10.4 9.1Z M4.2 3.9L7 5.5L9.8 3.9L9.3 3.5L7 4.8L4.7 3.5Z" fill="#333333"/></svg>
<div class="t" style="left:1120px;top:713px;color:#c8c8c8;font-size:12.5px">SampleScene</div>
<div class="a" style="left:1086px;top:997px;width:402px;height:21px;background:#3e3e3e"></div>
<svg class="a" style="left:1091px;top:1003px" width="13" height="11" viewBox="0 0 13 11"><path d="M0.5 0.5H5L6.5 2H12.5V10.5H0.5Z" fill="#c4c4c4"/></svg>
<div class="t" style="left:1106px;top:1002px;color:#c4c4c4;font-size:12.5px">Assets/Scenes</div>
<div class="a" style="left:1422px;top:1007px;width:50px;height:2px;background:#6a6a6a"></div>
<div class="a" style="left:1417px;top:1003px;width:10px;height:10px;border-radius:5px;background:#999"></div><!-- STATUS + TASKBAR -->
<div class="a" style="left:0;top:1018px;width:1920px;height:22px;background:#191919"></div>
<svg class="a" style="left:3px;top:1022px" width="14" height="15"><circle cx="7" cy="6.5" r="6" fill="#d8d8d8"/><path d="M9 11L12 14L8 12Z" fill="#d8d8d8"/><rect x="6.2" y="2.5" width="1.7" height="5" fill="#191919"/><circle cx="7" cy="9.5" r="0.95" fill="#191919"/></svg>
<div class="t" style="left:20px;top:1023px;color:#c4c4c4;font-size:12.7px">[TMP Essential Resources] have been imported.</div>
<div class="a" style="left:1840px;top:1019px;width:1px;height:20px;background:#2a2a2a"></div>
<div class="a" style="left:1866px;top:1019px;width:1px;height:20px;background:#2a2a2a"></div>
<div class="a" style="left:1893px;top:1019px;width:1px;height:20px;background:#2a2a2a"></div>
<svg class="a" style="left:1847px;top:1022px" width="15" height="15"><ellipse cx="7" cy="3.5" rx="5.5" ry="2.5" fill="#c4c4c4"/><path d="M1.5 5.5Q7 9 12.5 5.5V8Q7 11.5 1.5 8Z M1.5 9.5Q7 13 12.5 9.5V11.5Q7 15 1.5 11.5Z" fill="#c4c4c4"/><path d="M1 1L14 14" stroke="#191919" stroke-width="2"/><path d="M1 1L14 14" stroke="#c4c4c4" stroke-width="1"/></svg>
<svg class="a" style="left:1873px;top:1022px" width="15" height="15"><circle cx="7.5" cy="7.5" r="5.5" fill="none" stroke="#c4c4c4" stroke-width="1.2" stroke-dasharray="6 2"/><circle cx="7.5" cy="6.5" r="2.3" fill="#c4c4c4"/><path d="M1 1L14 14" stroke="#c4c4c4" stroke-width="1.1"/></svg>
<svg class="a" style="left:1899px;top:1022px" width="15" height="15"><circle cx="7.5" cy="7.5" r="6.5" fill="none" stroke="#c4c4c4" stroke-width="1.1"/><path d="M4.5 7.5L6.8 9.8L10.8 5.5" fill="none" stroke="#c4c4c4" stroke-width="1.2"/></svg>
<div class="a" style="left:0;top:1040px;width:1920px;height:40px;background:#1c1c1c"></div>
<svg class="a" style="left:16px;top:1052px" width="16" height="16"><path d="M0 2.2L6.5 1.3V7.5H0Z M7.5 1.1L16 0V7.5H7.5Z M0 8.5H6.5V14.7L0 13.8Z M7.5 8.5H16V16L7.5 14.9Z" fill="#fff"/></svg>
<div class="a" style="left:48px;top:1040px;width:288px;height:40px;background:#333333;border:1px solid #4a4a4a;border-bottom:none"></div>
<svg class="a" style="left:59px;top:1051px" width="18" height="18"><circle cx="11" cy="7" r="5.3" fill="none" stroke="#ddd" stroke-width="1.3"/><path d="M7.2 10.8L1 17" stroke="#ddd" stroke-width="1.4"/></svg>
<div class="t" style="left:88px;top:1053px;color:#e8e0d0;font-size:14.2px">Escriu aquí per cercar</div>
<svg class="a" style="left:256px;top:1042px" width="80" height="38"><path d="M0 38L12 26H80V38Z" fill="#d9b88a"/><path d="M14 14L28 10L38 18L24 24Z" fill="#e8e8f0" stroke="#6a9a50" stroke-width="1.5"/><path d="M26 20L38 7" stroke="#f3a33a" stroke-width="3"/><path d="M35 10L40 4" stroke="#e05050" stroke-width="3"/><path d="M50 12Q50 2 60 2Q70 2 70 12V30Q60 34 50 30Z" fill="#2f7ff0"/><path d="M55 8Q60 0 65 8" fill="none" stroke="#60a0ff" stroke-width="2"/><path d="M53 22Q60 18 67 22V30H53Z" fill="#8a6ff0"/></svg>
<svg class="a" style="left:351px;top:1051px" width="18" height="18"><circle cx="9" cy="9" r="7.3" fill="none" stroke="#fff" stroke-width="1.8"/></svg>
<svg class="a" style="left:399px;top:1052px" width="18" height="16"><rect x="2" y="3" width="11" height="10" fill="none" stroke="#fff" stroke-width="1.3"/><path d="M0 1H14M0 15H14M15 1V5M15 7V11M17 3V6" stroke="#fff" stroke-width="1.3"/></svg>
<div class="a" style="left:447px;top:1048px;width:24px;height:24px;background:#f7792e;border-radius:3px"></div>
<svg class="a" style="left:450px;top:1051px" width="18" height="18"><path d="M4 4Q9 9 14 4M4 14Q9 9 14 14M4 4Q1 9 4 14M14 4Q17 9 14 14" fill="none" stroke="#fff" stroke-width="2.4"/></svg>
<svg class="a" style="left:496px;top:1049px" width="23" height="22"><path d="M0 3H8L10 5H22V10H0Z" fill="#e8b23c"/><rect x="0" y="7" width="22" height="14" fill="#f6cd4a"/><rect x="6" y="13" width="10" height="8" fill="#3a8fe0"/><rect x="9" y="16" width="4" height="5" fill="#f6cd4a"/></svg>
<svg class="a" style="left:545px;top:1048px" width="24" height="24"><circle cx="12" cy="12" r="11.5" fill="#db4437"/><path d="M12 12L22 7A11.5 11.5 0 0 0 2 7Z" fill="#db4437"/><path d="M12 12L2 7A11.5 11.5 0 0 0 12 23.5Z" fill="#0f9d58"/><path d="M12 12L12 23.5A11.5 11.5 0 0 0 22 7Z" fill="#ffcd40"/><circle cx="12" cy="12" r="5.5" fill="#fff"/><circle cx="12" cy="12" r="4.3" fill="#4285f4"/></svg>
<svg class="a" style="left:594px;top:1048px" width="24" height="24"><path d="M17 1L23 4V20L17 23L7 14L3 17L1 16V8L3 7L7 10ZM17 7L11 12L17 17Z" fill="#1f9cf0"/><path d="M17 1L23 4V20L17 23Z" fill="#0065a9"/></svg>
<div class="a" style="left:631px;top:1040px;width:48px;height:40px;background:#3a3a3a"></div>
<div class="a" style="left:631px;top:1078px;width:48px;height:2px;background:#76b9ed"></div>
<svg class="a" style="left:643px;top:1048px" width="24" height="24"><path d="M12 1L22 6.5V17.5L12 23L2 17.5V6.5Z" fill="#1a1a1a"/><path d="M12 3L20 7.5V16.5L12 21L4 16.5V7.5Z" fill="#e0e0e0"/><path d="M12 7L16 9.3V14L12 16.3L8 14V9.3Z" fill="#1a1a1a"/><path d="M12 11.5V3M12 11.5L20 16.5M12 11.5L4 16.5" stroke="#1a1a1a" stroke-width="1.6"/></svg>
<div class="a" style="left:684px;top:1078px;width:40px;height:2px;background:#76b9ed"></div>
<div class="a" style="left:692px;top:1048px;width:23px;height:23px;background:#001e36;border:1.5px solid #31a8ff"></div>
<div class="t" style="left:696px;top:1053px;color:#31a8ff;font-size:12px;font-weight:bold">Ps</div>
<svg class="a" style="left:1478px;top:1050px" width="26" height="22"><circle cx="17" cy="7" r="5.5" fill="#f6a21e"/><path d="M4 20Q0 20 0.5 16Q1 13 4 13Q5 8 10.5 8Q15 8 16.5 12Q22 11.5 22.5 16Q23 20 19 20Z" fill="#c5daf5"/></svg>
<div class="t" style="left:1512px;top:1053px;color:#fff;font-size:14px">18°C&nbsp;&nbsp;Mayo</div>
<div class="t" style="left:1836px;top:1044px;color:#fff;font-size:12.5px">57</div>
<div class="t" style="left:1835px;top:1062px;color:#fff;font-size:12.5px">2024</div>
<svg class="a" style="left:1878px;top:1051px" width="18" height="18"><path d="M1 1H17V13H10.5L9 15.5L7.5 13H1Z" fill="#fff"/><path d="M4 4.5H14M4 7H14M4 9.5H11" stroke="#1c1c1c" stroke-width="1.2"/></svg>
<div class="a" style="left:1915px;top:1040px;width:1px;height:40px;background:#6a6a6a"></div><!-- MENUS -->
<div class="a" style="left:1269px;top:271px;width:319px;height:559px;background:#f0f0f0;border:1px solid #fafafa;box-shadow:1px 1px 2px rgba(0,0,0,0.35)"></div>
<div class="a" style="left:1272px;top:274px;width:313px;height:22px;background:#91c9f7"></div>
<div class="m" style="left:1304px;top:279px">Create</div>
<svg class="a" style="left:1574px;top:281px" width="6" height="9"><path d="M1 0.8L4.8 4.5L1 8.2" fill="none" stroke="#222" stroke-width="1.1"/></svg>
<div class="sep" style="left:1300px;top:299px;width:286px"></div>
<div class="m" style="left:1304px;top:308px">Show in Explorer</div>
<div class="m" style="left:1304px;top:330px">Open</div>
<div class="m" style="left:1304px;top:352px">Delete</div>
<div class="m" style="left:1304px;top:374px">Rename</div>
<div class="m" style="left:1304px;top:396px">Copy Path</div>
<div class="m" style="left:1420px;top:396px;width:150px;text-align:right">Alt+Ctrl+C</div>
<div class="sep" style="left:1300px;top:416px;width:286px"></div>
<div class="m mg" style="left:1304px;top:425px">Open Scene Additive</div>
<div class="sep" style="left:1300px;top:445px;width:286px"></div>
<div class="m mg" style="left:1304px;top:454px">View in Package Manager</div>
<div class="sep" style="left:1300px;top:474px;width:286px"></div>
<div class="m" style="left:1304px;top:483px">Import New Asset...</div>
<div class="m" style="left:1304px;top:505px">Import Package</div>
<svg class="a" style="left:1574px;top:507px" width="6" height="9"><path d="M1 0.8L4.8 4.5L1 8.2" fill="none" stroke="#222" stroke-width="1.1"/></svg>
<div class="m" style="left:1304px;top:527px">Export Package...</div>
<div class="m mg" style="left:1304px;top:549px">Find References In Scene</div>
<div class="m" style="left:1304px;top:571px">Select Dependencies</div>
<div class="sep" style="left:1300px;top:591px;width:286px"></div>
<div class="m" style="left:1304px;top:600px">Refresh</div>
<div class="m" style="left:1420px;top:600px;width:150px;text-align:right">Ctrl+R</div>
<div class="m" style="left:1304px;top:622px">Reimport</div>
<div class="sep" style="left:1300px;top:642px;width:286px"></div>
<div class="m" style="left:1304px;top:651px">Reimport All</div>
<div class="sep" style="left:1300px;top:671px;width:286px"></div>
<div class="m mg" style="left:1304px;top:680px">Extract From Prefab</div>
<div class="sep" style="left:1300px;top:700px;width:286px"></div>
<div class="m" style="left:1304px;top:709px">Update UXML Schema</div>
<div class="sep" style="left:1300px;top:729px;width:286px"></div>
<div class="m" style="left:1304px;top:738px">Generate Lighting</div>
<div class="m" style="left:1420px;top:738px;width:150px;text-align:right">Ctrl+Shift+L</div>
<div class="m" style="left:1304px;top:760px">View in Import Activity Window</div>
<div class="m" style="left:1304px;top:782px">Open C# Project</div>
<div class="sep" style="left:1300px;top:802px;width:286px"></div>
<div class="m" style="left:1304px;top:811px">Properties...</div>
<div class="m" style="left:1420px;top:811px;width:150px;text-align:right">Alt+P</div>
<div class="a" style="left:1585px;top:124px;width:251px;height:956px;background:#f0f0f0;border:1px solid #fafafa;box-shadow:1px 1px 2px rgba(0,0,0,0.35)"></div>
<div class="m" style="left:1620px;top:132px">Folder</div>
<div class="sep" style="left:1616px;top:152px;width:218px"></div>
<div class="m" style="left:1620px;top:161px">C# Script</div>
<div class="m" style="left:1620px;top:183px">2D</div>
<svg class="a" style="left:1819px;top:185px" width="6" height="9"><path d="M1 0.8L4.8 4.5L1 8.2" fill="none" stroke="#222" stroke-width="1.1"/></svg>
<div class="m" style="left:1620px;top:205px">Visual Scripting</div>
<svg class="a" style="left:1819px;top:207px" width="6" height="9"><path d="M1 0.8L4.8 4.5L1 8.2" fill="none" stroke="#222" stroke-width="1.1"/></svg>
<div class="m" style="left:1620px;top:227px">Shader</div>
<svg class="a" style="left:1819px;top:229px" width="6" height="9"><path d="M1 0.8L4.8 4.5L1 8.2" fill="none" stroke="#222" stroke-width="1.1"/></svg>
<div class="m" style="left:1620px;top:249px">Shader Variant Collection</div>
<div class="m" style="left:1620px;top:271px">Testing</div>
<svg class="a" style="left:1819px;top:273px" width="6" height="9"><path d="M1 0.8L4.8 4.5L1 8.2" fill="none" stroke="#222" stroke-width="1.1"/></svg>
<div class="m" style="left:1620px;top:293px">Playables</div>
<svg class="a" style="left:1819px;top:295px" width="6" height="9"><path d="M1 0.8L4.8 4.5L1 8.2" fill="none" stroke="#222" stroke-width="1.1"/></svg>
<div class="m" style="left:1620px;top:315px">Assembly Definition</div>
<div class="m" style="left:1620px;top:337px">Assembly Definition Reference</div>
<div class="m" style="left:1620px;top:359px">Text</div>
<svg class="a" style="left:1819px;top:361px" width="6" height="9"><path d="M1 0.8L4.8 4.5L1 8.2" fill="none" stroke="#222" stroke-width="1.1"/></svg>
<div class="m" style="left:1620px;top:381px">TextMeshPro</div>
<svg class="a" style="left:1819px;top:383px" width="6" height="9"><path d="M1 0.8L4.8 4.5L1 8.2" fill="none" stroke="#222" stroke-width="1.1"/></svg>
<div class="sep" style="left:1616px;top:401px;width:218px"></div>
<div class="a" style="left:1588px;top:405px;width:245px;height:22px;background:#91c9f7"></div>
<div class="m" style="left:1620px;top:410px">Scene</div>
<div class="m mg" style="left:1620px;top:432px">Scene Template From Scene</div>
<div class="m" style="left:1620px;top:454px">Scene Template</div>
<div class="m" style="left:1620px;top:476px">Scene Template Pipeline</div>
<div class="m" style="left:1620px;top:498px">Prefab</div>
<div class="m mg" style="left:1620px;top:520px">Prefab Variant</div>
<div class="sep" style="left:1616px;top:540px;width:218px"></div>
<div class="m" style="left:1620px;top:549px">Audio Mixer</div>
<div class="sep" style="left:1616px;top:569px;width:218px"></div>
<div class="m" style="left:1620px;top:578px">Material</div>
<div class="m mg" style="left:1620px;top:600px">Material Variant</div>
<div class="m" style="left:1620px;top:622px">Lens Flare</div>
<div class="m" style="left:1620px;top:644px">Render Texture</div>
<div class="m" style="left:1620px;top:666px">Lightmap Parameters</div>
<div class="m" style="left:1620px;top:688px">Lighting Settings</div>
<div class="m" style="left:1620px;top:710px">Custom Render Texture</div>
<div class="sep" style="left:1616px;top:730px;width:218px"></div>
<div class="m" style="left:1620px;top:739px">Animator Controller</div>
<div class="m" style="left:1620px;top:761px">Animation</div>
<div class="m" style="left:1620px;top:783px">Animator Override Controller</div>
<div class="m" style="left:1620px;top:805px">Avatar Mask</div>
<div class="sep" style="left:1616px;top:825px;width:218px"></div>
<div class="m" style="left:1620px;top:834px">Timeline</div>
<div class="m" style="left:1620px;top:856px">Signal</div>
<div class="sep" style="left:1616px;top:876px;width:218px"></div>
<div class="m" style="left:1620px;top:885px">Physic Material</div>
<div class="sep" style="left:1616px;top:905px;width:218px"></div>
<div class="m" style="left:1620px;top:914px">GUI Skin</div>
<div class="m" style="left:1620px;top:936px">Custom Font</div>
<div class="m" style="left:1620px;top:958px">UI Toolkit</div>
<svg class="a" style="left:1819px;top:960px" width="6" height="9"><path d="M1 0.8L4.8 4.5L1 8.2" fill="none" stroke="#222" stroke-width="1.1"/></svg>
<div class="sep" style="left:1616px;top:978px;width:218px"></div>
<div class="m" style="left:1620px;top:987px">Legacy</div>
<svg class="a" style="left:1819px;top:989px" width="6" height="9"><path d="M1 0.8L4.8 4.5L1 8.2" fill="none" stroke="#222" stroke-width="1.1"/></svg>
<div class="sep" style="left:1616px;top:1007px;width:218px"></div>
<div class="m" style="left:1620px;top:1016px">Search</div>
<svg class="a" style="left:1819px;top:1018px" width="6" height="9"><path d="M1 0.8L4.8 4.5L1 8.2" fill="none" stroke="#222" stroke-width="1.1"/></svg>
<div class="m" style="left:1620px;top:1038px">Terrain Layer</div>
<div class="m" style="left:1620px;top:1060px">Brush</div>
<svg class="a" style="left:0;top:0;pointer-events:none" width="1920" height="1080"><path d="M1134 326L1288 286" stroke="#fff" stroke-width="2.2" stroke-linecap="round"/><path d="M1304 281L1284 281.3L1287.4 290.7Z" fill="#fff"/><path d="M1866 541.5L1692 427" stroke="#fff" stroke-width="2.2" stroke-linecap="round"/><path d="M1677.7 419.4L1696 422L1689 432Z" fill="#fff"/><path d="M1145 935L1192 902" stroke="#fff" stroke-width="2.2" stroke-linecap="round"/><path d="M1202.7 891L1184.3 899L1189.5 906.3Z" fill="#fff"/></svg></body></html>
